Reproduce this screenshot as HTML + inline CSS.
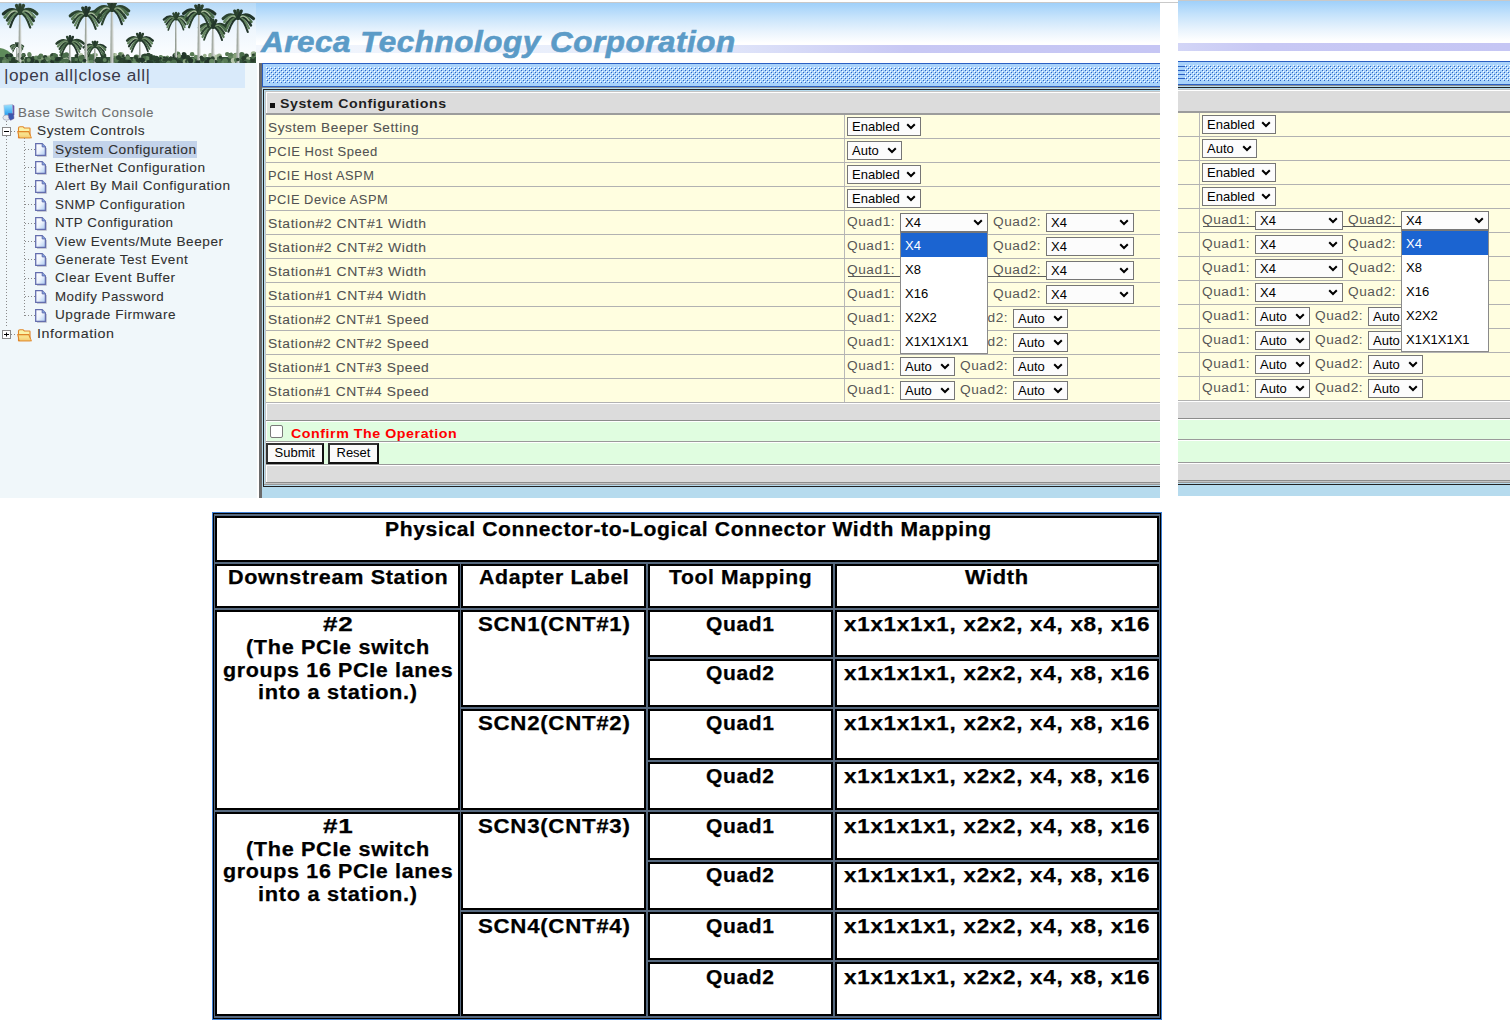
<!DOCTYPE html><html><head><meta charset="utf-8"><style>html,body{margin:0;padding:0;background:#fff}body{width:1510px;height:1029px;position:relative;overflow:hidden;font-family:"Liberation Sans",sans-serif}.r{position:absolute}.t{position:absolute;white-space:pre;font-family:"Liberation Sans",sans-serif}</style></head><body><div class="r" style="left:0;top:0;width:1160px;height:498px;overflow:hidden"><div class="r" style="left:0px;top:2px;width:1178px;height:1px;background:#c9c9c9;"></div><div class="r" style="left:0px;top:3px;width:1160px;height:60px;background:linear-gradient(#9fd0fa 0px,#c6e3fb 14px,#e8f3fd 28px,#ffffff 40px);"></div><div class="r" style="left:256px;top:45px;width:904px;height:8px;background:linear-gradient(90deg,#f3f7fd 0px,#e4eafa 440px,#c8c8f4 650px,#c6c6f4 904px);"></div><div class="r" style="left:0px;top:53px;width:256px;height:0px;background:#fff;"></div><svg class="r" style="left:0;top:3px" width="256" height="60" viewBox="0 3 256 60"><clipPath id="pc"><rect x="0" y="3" width="256" height="60"/></clipPath><g clip-path="url(#pc)"><defs><linearGradient id="sky" x1="0" y1="0" x2="0" y2="1"><stop offset="0" stop-color="#b4d9f8"/><stop offset="0.45" stop-color="#eef6fd"/><stop offset="1" stop-color="#ffffff"/></linearGradient></defs><rect x="0" y="3" width="256" height="60" fill="url(#sky)"/><path d="M0 48 Q7 49 13 55 L16 63 L0 63 Z" fill="#5e8b5a"/><rect x="0" y="57" width="256" height="6" fill="#34523a"/><circle cx="115.8" cy="59.0" r="2.9" fill="#587a54"/><circle cx="115.7" cy="61.7" r="1.6" fill="#9ab08e"/><circle cx="131.0" cy="59.7" r="2.6" fill="#2c4430"/><circle cx="114.3" cy="55.3" r="2.2" fill="#86a07a"/><circle cx="177.5" cy="54.4" r="3.0" fill="#587a54"/><circle cx="167.4" cy="59.5" r="1.6" fill="#22352a"/><circle cx="212.9" cy="54.6" r="1.4" fill="#86a07a"/><circle cx="61.9" cy="54.3" r="2.1" fill="#587a54"/><circle cx="151.3" cy="55.8" r="1.7" fill="#2c4430"/><circle cx="127.9" cy="60.0" r="2.1" fill="#2c4430"/><circle cx="104.1" cy="59.0" r="2.9" fill="#2c4430"/><circle cx="181.2" cy="56.8" r="1.7" fill="#2c4430"/><circle cx="7.6" cy="59.1" r="1.5" fill="#2c4430"/><circle cx="216.7" cy="57.5" r="2.9" fill="#b4c4a8"/><circle cx="175.3" cy="55.9" r="2.9" fill="#22352a"/><circle cx="120.3" cy="62.8" r="2.0" fill="#2c4430"/><circle cx="145.0" cy="55.8" r="2.4" fill="#283e2c"/><circle cx="22.3" cy="57.0" r="2.9" fill="#9ab08e"/><circle cx="236.2" cy="55.2" r="2.5" fill="#22352a"/><circle cx="15.3" cy="61.2" r="1.6" fill="#648660"/><circle cx="48.2" cy="58.6" r="3.0" fill="#9ab08e"/><circle cx="33.5" cy="59.8" r="1.5" fill="#4a6c4a"/><circle cx="253.5" cy="54.0" r="2.8" fill="#9ab08e"/><circle cx="151.7" cy="63.0" r="1.3" fill="#283e2c"/><circle cx="100.9" cy="61.7" r="2.4" fill="#2c4430"/><circle cx="10.8" cy="55.3" r="2.1" fill="#22352a"/><circle cx="197.8" cy="57.0" r="1.8" fill="#2c4430"/><circle cx="19.0" cy="55.9" r="2.4" fill="#22352a"/><circle cx="153.9" cy="57.3" r="2.1" fill="#4a6c4a"/><circle cx="123.8" cy="59.2" r="2.8" fill="#283e2c"/><circle cx="160.6" cy="56.8" r="1.7" fill="#4a6c4a"/><circle cx="63.9" cy="55.7" r="2.6" fill="#648660"/><circle cx="50.3" cy="62.6" r="2.8" fill="#4a6c4a"/><circle cx="20.1" cy="54.4" r="1.5" fill="#648660"/><circle cx="246.4" cy="56.1" r="2.5" fill="#2c4430"/><circle cx="107.7" cy="62.1" r="2.1" fill="#648660"/><circle cx="44.9" cy="60.5" r="1.4" fill="#22352a"/><circle cx="122.7" cy="59.9" r="2.3" fill="#2c4430"/><circle cx="71.7" cy="62.3" r="1.6" fill="#22352a"/><circle cx="17.7" cy="57.7" r="1.7" fill="#22352a"/><circle cx="45.1" cy="57.3" r="2.3" fill="#283e2c"/><circle cx="23.6" cy="55.2" r="2.1" fill="#283e2c"/><circle cx="168.2" cy="60.2" r="2.3" fill="#283e2c"/><circle cx="151.0" cy="62.3" r="2.1" fill="#283e2c"/><circle cx="179.4" cy="62.7" r="1.3" fill="#587a54"/><circle cx="19.2" cy="54.6" r="1.8" fill="#283e2c"/><circle cx="255.8" cy="54.7" r="2.2" fill="#648660"/><circle cx="11.4" cy="62.4" r="2.6" fill="#283e2c"/><circle cx="203.1" cy="62.2" r="1.9" fill="#587a54"/><circle cx="121.2" cy="54.7" r="2.8" fill="#9ab08e"/><circle cx="7.7" cy="58.5" r="1.3" fill="#587a54"/><circle cx="97.9" cy="59.2" r="2.3" fill="#2c4430"/><circle cx="23.2" cy="55.0" r="1.7" fill="#4a6c4a"/><circle cx="186.4" cy="57.5" r="2.5" fill="#4a6c4a"/><circle cx="117.2" cy="58.2" r="2.2" fill="#648660"/><circle cx="192.1" cy="54.3" r="2.3" fill="#587a54"/><circle cx="5.7" cy="62.6" r="1.5" fill="#9ab08e"/><circle cx="157.3" cy="62.3" r="1.7" fill="#22352a"/><circle cx="94.2" cy="55.3" r="2.3" fill="#648660"/><circle cx="43.4" cy="62.2" r="2.4" fill="#587a54"/><circle cx="127.6" cy="56.2" r="2.0" fill="#2c4430"/><circle cx="50.8" cy="57.9" r="2.7" fill="#86a07a"/><circle cx="51.3" cy="55.9" r="1.7" fill="#86a07a"/><circle cx="81.0" cy="55.2" r="2.1" fill="#b4c4a8"/><circle cx="229.3" cy="54.4" r="1.4" fill="#2c4430"/><circle cx="210.4" cy="55.0" r="2.1" fill="#86a07a"/><circle cx="54.8" cy="57.7" r="2.4" fill="#587a54"/><circle cx="172.1" cy="60.4" r="2.7" fill="#4a6c4a"/><circle cx="115.8" cy="54.7" r="1.4" fill="#b4c4a8"/><circle cx="155.5" cy="60.1" r="1.8" fill="#283e2c"/><circle cx="79.1" cy="61.1" r="1.3" fill="#283e2c"/><circle cx="103.7" cy="55.7" r="2.6" fill="#2c4430"/><circle cx="60.8" cy="55.3" r="1.4" fill="#587a54"/><circle cx="29.5" cy="55.0" r="2.2" fill="#587a54"/><circle cx="206.7" cy="62.6" r="2.5" fill="#22352a"/><circle cx="210.9" cy="56.3" r="2.5" fill="#9ab08e"/><circle cx="120.9" cy="60.4" r="1.6" fill="#2c4430"/><circle cx="199.3" cy="58.9" r="2.9" fill="#648660"/><circle cx="157.3" cy="60.8" r="2.0" fill="#9ab08e"/><circle cx="179.1" cy="56.0" r="2.0" fill="#86a07a"/><circle cx="184.9" cy="55.2" r="2.1" fill="#587a54"/><circle cx="227.2" cy="54.1" r="2.2" fill="#587a54"/><circle cx="225.1" cy="61.2" r="2.9" fill="#587a54"/><circle cx="83.6" cy="62.8" r="1.5" fill="#b4c4a8"/><circle cx="209.5" cy="59.8" r="2.5" fill="#22352a"/><circle cx="62.0" cy="57.5" r="1.4" fill="#2c4430"/><circle cx="137.5" cy="61.1" r="1.8" fill="#86a07a"/><circle cx="183.9" cy="54.1" r="2.2" fill="#22352a"/><circle cx="112.9" cy="59.0" r="2.6" fill="#587a54"/><circle cx="235.5" cy="56.0" r="2.8" fill="#4a6c4a"/><circle cx="204.8" cy="55.6" r="1.9" fill="#9ab08e"/><circle cx="234.5" cy="58.2" r="3.0" fill="#86a07a"/><circle cx="185.2" cy="61.6" r="2.5" fill="#86a07a"/><circle cx="126.1" cy="62.5" r="1.4" fill="#22352a"/><circle cx="112.5" cy="59.0" r="2.7" fill="#648660"/><circle cx="163.6" cy="58.7" r="2.7" fill="#648660"/><circle cx="65.7" cy="60.0" r="2.9" fill="#b4c4a8"/><circle cx="230.5" cy="55.9" r="2.7" fill="#648660"/><circle cx="134.2" cy="59.2" r="1.6" fill="#648660"/><circle cx="29.3" cy="54.0" r="1.9" fill="#648660"/><circle cx="248.2" cy="58.6" r="2.0" fill="#9ab08e"/><circle cx="253.3" cy="55.1" r="1.5" fill="#283e2c"/><circle cx="16.9" cy="58.8" r="2.0" fill="#9ab08e"/><circle cx="236.4" cy="56.4" r="2.1" fill="#283e2c"/><circle cx="87.0" cy="62.1" r="2.9" fill="#86a07a"/><circle cx="122.0" cy="56.9" r="1.6" fill="#4a6c4a"/><circle cx="7.5" cy="56.3" r="2.5" fill="#22352a"/><circle cx="9.1" cy="55.4" r="1.3" fill="#2c4430"/><circle cx="82.5" cy="57.2" r="2.4" fill="#2c4430"/><circle cx="127.9" cy="59.2" r="2.7" fill="#4a6c4a"/><circle cx="64.1" cy="55.8" r="2.2" fill="#4a6c4a"/><circle cx="6.0" cy="59.7" r="2.7" fill="#4a6c4a"/><circle cx="40.9" cy="55.8" r="2.4" fill="#587a54"/><circle cx="55.9" cy="55.9" r="2.2" fill="#4a6c4a"/><circle cx="219.3" cy="56.1" r="2.6" fill="#9ab08e"/><circle cx="89.0" cy="55.6" r="2.3" fill="#86a07a"/><circle cx="236.2" cy="56.0" r="3.0" fill="#86a07a"/><circle cx="24.8" cy="62.0" r="1.5" fill="#2c4430"/><circle cx="66.4" cy="54.9" r="2.7" fill="#4a6c4a"/><circle cx="139.1" cy="60.3" r="1.6" fill="#587a54"/><circle cx="175.4" cy="54.2" r="1.6" fill="#587a54"/><circle cx="91.5" cy="61.4" r="1.9" fill="#648660"/><circle cx="129.5" cy="60.8" r="2.2" fill="#587a54"/><circle cx="213.2" cy="61.2" r="2.1" fill="#22352a"/><circle cx="9.6" cy="59.0" r="2.2" fill="#4a6c4a"/><circle cx="123.2" cy="55.7" r="1.5" fill="#283e2c"/><circle cx="215.1" cy="62.9" r="2.9" fill="#2c4430"/><circle cx="148.4" cy="55.2" r="2.5" fill="#2c4430"/><circle cx="195.8" cy="56.9" r="2.1" fill="#648660"/><circle cx="90.8" cy="55.9" r="1.9" fill="#587a54"/><circle cx="179.5" cy="61.6" r="1.6" fill="#587a54"/><circle cx="92.0" cy="57.3" r="2.9" fill="#4a6c4a"/><circle cx="42.3" cy="58.6" r="1.3" fill="#86a07a"/><circle cx="21.7" cy="61.6" r="2.8" fill="#86a07a"/><circle cx="161.1" cy="57.6" r="2.3" fill="#648660"/><circle cx="149.7" cy="57.1" r="2.6" fill="#2c4430"/><circle cx="233.3" cy="60.7" r="2.6" fill="#b4c4a8"/><circle cx="239.1" cy="55.2" r="1.9" fill="#648660"/><circle cx="177.9" cy="60.9" r="2.6" fill="#4a6c4a"/><circle cx="52.9" cy="55.7" r="2.7" fill="#2c4430"/><circle cx="120.0" cy="54.1" r="1.9" fill="#587a54"/><circle cx="231.1" cy="54.4" r="1.8" fill="#587a54"/><circle cx="76.5" cy="55.9" r="2.0" fill="#283e2c"/><circle cx="136.5" cy="57.5" r="3.0" fill="#587a54"/><circle cx="54.6" cy="55.1" r="2.0" fill="#4a6c4a"/><circle cx="5.8" cy="59.5" r="2.6" fill="#2c4430"/><circle cx="113.6" cy="58.5" r="2.6" fill="#587a54"/><circle cx="96.2" cy="54.9" r="1.7" fill="#86a07a"/><circle cx="87.3" cy="58.9" r="2.0" fill="#648660"/><circle cx="145.4" cy="63.0" r="2.4" fill="#9ab08e"/><circle cx="165.0" cy="58.9" r="2.4" fill="#22352a"/><circle cx="98.9" cy="62.4" r="2.0" fill="#283e2c"/><circle cx="219.1" cy="58.9" r="2.3" fill="#4a6c4a"/><circle cx="242.0" cy="57.8" r="2.2" fill="#4a6c4a"/><circle cx="80.0" cy="58.8" r="2.1" fill="#2c4430"/><circle cx="143.5" cy="56.6" r="2.5" fill="#2c4430"/><circle cx="6.9" cy="61.0" r="2.3" fill="#587a54"/><circle cx="40.1" cy="60.8" r="2.0" fill="#86a07a"/><circle cx="80.7" cy="57.6" r="2.3" fill="#648660"/><circle cx="241.8" cy="54.7" r="2.8" fill="#4a6c4a"/><circle cx="184.1" cy="56.3" r="2.6" fill="#22352a"/><circle cx="134.0" cy="62.4" r="2.5" fill="#587a54"/><circle cx="37.0" cy="62.6" r="1.7" fill="#648660"/><circle cx="29.5" cy="59.6" r="2.1" fill="#22352a"/><circle cx="220.4" cy="57.2" r="1.6" fill="#283e2c"/><circle cx="113.4" cy="60.0" r="2.1" fill="#2c4430"/><circle cx="163.7" cy="60.1" r="1.9" fill="#648660"/><circle cx="135.9" cy="63.0" r="2.9" fill="#648660"/><circle cx="33.0" cy="58.3" r="2.2" fill="#2c4430"/><circle cx="200.8" cy="59.6" r="1.9" fill="#2c4430"/><path d="M69.2 45 L68.7 63 L71.3 63 L70.8 45 Z" fill="#c9cdc8"/><path d="M69.2 45 L68.7 63 L69.7 63 L69.8 45 Z" fill="#8a948a"/><path d="M70.0 43.0 Q63.0 37.3 56.6 43.6" fill="none" stroke="#283e2c" stroke-width="2.6" stroke-linecap="round"/><path d="M70.0 43.0 Q63.7 38.8 58.0 46.4" fill="none" stroke="#648660" stroke-width="2.4" stroke-linecap="round"/><path d="M70.0 43.0 Q64.5 40.4 59.6 49.0" fill="none" stroke="#2c4430" stroke-width="2.2" stroke-linecap="round"/><path d="M70.0 43.0 Q64.8 41.8 60.3 52.2" fill="none" stroke="#4a6c4a" stroke-width="2.0" stroke-linecap="round"/><path d="M70.0 43.0 Q65.4 43.4 61.5 55.2" fill="none" stroke="#283e2c" stroke-width="1.8" stroke-linecap="round"/><path d="M70.0 43.0 Q64.6 38.8 60.4 45.4" fill="none" stroke="#86a07a" stroke-width="0.9" stroke-linecap="round"/><path d="M70.0 43.0 Q77.2 37.1 83.8 43.7" fill="none" stroke="#283e2c" stroke-width="2.6" stroke-linecap="round"/><path d="M70.0 43.0 Q76.0 39.0 81.4 46.3" fill="none" stroke="#4a6c4a" stroke-width="2.4" stroke-linecap="round"/><path d="M70.0 43.0 Q75.4 40.5 80.2 48.9" fill="none" stroke="#2c4430" stroke-width="2.2" stroke-linecap="round"/><path d="M70.0 43.0 Q75.0 41.9 79.4 51.9" fill="none" stroke="#648660" stroke-width="2.0" stroke-linecap="round"/><path d="M70.0 43.0 Q74.2 43.4 77.8 54.2" fill="none" stroke="#22352a" stroke-width="1.8" stroke-linecap="round"/><path d="M70.0 43.0 Q75.4 38.8 79.6 45.4" fill="none" stroke="#86a07a" stroke-width="0.9" stroke-linecap="round"/><path d="M70.0 43.0 L67.2 37.0" stroke="#2c4430" stroke-width="2.6" stroke-linecap="round"/><path d="M70.0 43.0 L70.0 36.4" stroke="#22352a" stroke-width="2.6" stroke-linecap="round"/><path d="M70.0 43.0 L72.8 37.0" stroke="#22352a" stroke-width="2.6" stroke-linecap="round"/><path d="M94.3 49 L93.8 63 L96.2 63 L95.7 49 Z" fill="#c9cdc8"/><path d="M94.3 49 L93.8 63 L94.8 63 L94.9 49 Z" fill="#8a948a"/><path d="M95.0 47.0 Q89.0 42.1 83.5 47.5" fill="none" stroke="#22352a" stroke-width="2.2" stroke-linecap="round"/><path d="M95.0 47.0 Q89.7 43.5 85.0 49.8" fill="none" stroke="#648660" stroke-width="2.0" stroke-linecap="round"/><path d="M95.0 47.0 Q90.1 44.7 85.7 52.4" fill="none" stroke="#2c4430" stroke-width="1.8" stroke-linecap="round"/><path d="M95.0 47.0 Q90.8 46.1 87.1 54.4" fill="none" stroke="#4a6c4a" stroke-width="1.7" stroke-linecap="round"/><path d="M95.0 47.0 Q91.4 47.3 88.3 56.6" fill="none" stroke="#2c4430" stroke-width="1.5" stroke-linecap="round"/><path d="M95.0 47.0 Q90.5 43.5 87.0 49.0" fill="none" stroke="#86a07a" stroke-width="0.8" stroke-linecap="round"/><path d="M95.0 47.0 Q100.6 42.4 105.6 47.5" fill="none" stroke="#22352a" stroke-width="2.2" stroke-linecap="round"/><path d="M95.0 47.0 Q100.4 43.4 105.3 49.9" fill="none" stroke="#587a54" stroke-width="2.0" stroke-linecap="round"/><path d="M95.0 47.0 Q99.9 44.7 104.2 52.3" fill="none" stroke="#283e2c" stroke-width="1.8" stroke-linecap="round"/><path d="M95.0 47.0 Q99.3 46.0 103.1 54.7" fill="none" stroke="#4a6c4a" stroke-width="1.7" stroke-linecap="round"/><path d="M95.0 47.0 Q98.7 47.3 101.8 56.7" fill="none" stroke="#283e2c" stroke-width="1.5" stroke-linecap="round"/><path d="M95.0 47.0 Q99.5 43.5 103.0 49.0" fill="none" stroke="#b4c4a8" stroke-width="0.8" stroke-linecap="round"/><path d="M95.0 47.0 L92.7 42.0" stroke="#2c4430" stroke-width="2.2" stroke-linecap="round"/><path d="M95.0 47.0 L95.0 41.5" stroke="#22352a" stroke-width="2.2" stroke-linecap="round"/><path d="M95.0 47.0 L97.3 42.0" stroke="#2c4430" stroke-width="2.2" stroke-linecap="round"/><path d="M139.2 42 L138.7 63 L141.3 63 L140.8 42 Z" fill="#c9cdc8"/><path d="M139.2 42 L138.7 63 L139.7 63 L139.8 42 Z" fill="#8a948a"/><path d="M140.0 40.0 Q133.3 34.5 127.2 40.6" fill="none" stroke="#283e2c" stroke-width="2.6" stroke-linecap="round"/><path d="M140.0 40.0 Q133.8 35.9 128.2 43.3" fill="none" stroke="#648660" stroke-width="2.4" stroke-linecap="round"/><path d="M140.0 40.0 Q134.2 37.3 129.0 46.3" fill="none" stroke="#22352a" stroke-width="2.2" stroke-linecap="round"/><path d="M140.0 40.0 Q135.0 38.9 130.6 48.9" fill="none" stroke="#587a54" stroke-width="2.0" stroke-linecap="round"/><path d="M140.0 40.0 Q135.6 40.4 131.7 51.8" fill="none" stroke="#2c4430" stroke-width="1.8" stroke-linecap="round"/><path d="M140.0 40.0 Q134.6 35.8 130.4 42.4" fill="none" stroke="#b4c4a8" stroke-width="0.9" stroke-linecap="round"/><path d="M140.0 40.0 Q146.7 34.6 152.7 40.6" fill="none" stroke="#22352a" stroke-width="2.6" stroke-linecap="round"/><path d="M140.0 40.0 Q146.3 35.9 151.9 43.4" fill="none" stroke="#648660" stroke-width="2.4" stroke-linecap="round"/><path d="M140.0 40.0 Q145.7 37.4 150.7 46.2" fill="none" stroke="#283e2c" stroke-width="2.2" stroke-linecap="round"/><path d="M140.0 40.0 Q145.0 38.9 149.4 48.9" fill="none" stroke="#4a6c4a" stroke-width="2.0" stroke-linecap="round"/><path d="M140.0 40.0 Q144.2 40.4 147.9 51.2" fill="none" stroke="#22352a" stroke-width="1.8" stroke-linecap="round"/><path d="M140.0 40.0 Q145.4 35.8 149.6 42.4" fill="none" stroke="#86a07a" stroke-width="0.9" stroke-linecap="round"/><path d="M140.0 40.0 L137.2 34.0" stroke="#283e2c" stroke-width="2.6" stroke-linecap="round"/><path d="M140.0 40.0 L140.0 33.4" stroke="#22352a" stroke-width="2.6" stroke-linecap="round"/><path d="M140.0 40.0 L142.8 34.0" stroke="#283e2c" stroke-width="2.6" stroke-linecap="round"/><path d="M16.5 48 L16.0 63 L18.0 63 L17.5 48 Z" fill="#c9cdc8"/><path d="M16.5 48 L16.0 63 L17.0 63 L17.1 48 Z" fill="#8a948a"/><path d="M17.0 46.0 Q13.6 43.2 10.5 46.3" fill="none" stroke="#283e2c" stroke-width="1.5" stroke-linecap="round"/><path d="M17.0 46.0 Q13.8 43.9 10.9 47.7" fill="none" stroke="#587a54" stroke-width="1.4" stroke-linecap="round"/><path d="M17.0 46.0 Q14.2 44.7 11.8 49.0" fill="none" stroke="#22352a" stroke-width="1.3" stroke-linecap="round"/><path d="M17.0 46.0 Q14.5 45.4 12.4 50.4" fill="none" stroke="#648660" stroke-width="1.1" stroke-linecap="round"/><path d="M17.0 46.0 Q14.7 46.2 12.8 52.0" fill="none" stroke="#2c4430" stroke-width="1.0" stroke-linecap="round"/><path d="M17.0 46.0 Q14.3 43.9 12.2 47.2" fill="none" stroke="#9ab08e" stroke-width="0.5" stroke-linecap="round"/><path d="M17.0 46.0 Q20.4 43.2 23.5 46.3" fill="none" stroke="#2c4430" stroke-width="1.5" stroke-linecap="round"/><path d="M17.0 46.0 Q20.2 43.9 23.0 47.7" fill="none" stroke="#648660" stroke-width="1.4" stroke-linecap="round"/><path d="M17.0 46.0 Q19.9 44.6 22.6 49.2" fill="none" stroke="#2c4430" stroke-width="1.3" stroke-linecap="round"/><path d="M17.0 46.0 Q19.5 45.4 21.7 50.5" fill="none" stroke="#587a54" stroke-width="1.1" stroke-linecap="round"/><path d="M17.0 46.0 Q19.2 46.2 21.1 51.8" fill="none" stroke="#22352a" stroke-width="1.0" stroke-linecap="round"/><path d="M17.0 46.0 Q19.7 43.9 21.8 47.2" fill="none" stroke="#b4c4a8" stroke-width="0.5" stroke-linecap="round"/><path d="M17.0 46.0 L15.6 43.0" stroke="#283e2c" stroke-width="1.5" stroke-linecap="round"/><path d="M17.0 46.0 L17.0 42.7" stroke="#283e2c" stroke-width="1.5" stroke-linecap="round"/><path d="M17.0 46.0 L18.4 43.0" stroke="#22352a" stroke-width="1.5" stroke-linecap="round"/><path d="M212.0 29 L211.5 63 L214.5 63 L214.0 29 Z" fill="#c9cdc8"/><path d="M212.0 29 L211.5 63 L212.5 63 L212.6 29 Z" fill="#8a948a"/><path d="M213.0 27.0 Q205.8 21.1 199.2 27.7" fill="none" stroke="#2c4430" stroke-width="2.9" stroke-linecap="round"/><path d="M213.0 27.0 Q206.5 22.7 200.6 30.5" fill="none" stroke="#648660" stroke-width="2.6" stroke-linecap="round"/><path d="M213.0 27.0 Q206.9 24.2 201.5 33.6" fill="none" stroke="#2c4430" stroke-width="2.4" stroke-linecap="round"/><path d="M213.0 27.0 Q207.4 25.7 202.5 37.0" fill="none" stroke="#648660" stroke-width="2.2" stroke-linecap="round"/><path d="M213.0 27.0 Q208.2 27.4 204.1 39.8" fill="none" stroke="#2c4430" stroke-width="1.9" stroke-linecap="round"/><path d="M213.0 27.0 Q207.2 22.4 202.6 29.6" fill="none" stroke="#86a07a" stroke-width="1.0" stroke-linecap="round"/><path d="M213.0 27.0 Q220.3 21.1 226.9 27.7" fill="none" stroke="#283e2c" stroke-width="2.9" stroke-linecap="round"/><path d="M213.0 27.0 Q219.9 22.5 226.0 30.7" fill="none" stroke="#4a6c4a" stroke-width="2.6" stroke-linecap="round"/><path d="M213.0 27.0 Q218.9 24.2 224.1 33.4" fill="none" stroke="#2c4430" stroke-width="2.4" stroke-linecap="round"/><path d="M213.0 27.0 Q218.7 25.7 223.6 37.0" fill="none" stroke="#587a54" stroke-width="2.2" stroke-linecap="round"/><path d="M213.0 27.0 Q217.9 27.4 222.1 40.1" fill="none" stroke="#22352a" stroke-width="1.9" stroke-linecap="round"/><path d="M213.0 27.0 Q218.8 22.4 223.4 29.6" fill="none" stroke="#86a07a" stroke-width="1.0" stroke-linecap="round"/><path d="M213.0 27.0 L210.0 20.5" stroke="#22352a" stroke-width="2.9" stroke-linecap="round"/><path d="M213.0 27.0 L213.0 19.9" stroke="#283e2c" stroke-width="2.9" stroke-linecap="round"/><path d="M213.0 27.0 L216.0 20.5" stroke="#22352a" stroke-width="2.9" stroke-linecap="round"/><path d="M19.0 15 L18.5 63 L21.5 63 L21.0 15 Z" fill="#c9cdc8"/><path d="M19.0 15 L18.5 63 L19.5 63 L19.6 15 Z" fill="#8a948a"/><path d="M20.0 13.0 Q11.3 5.9 3.4 13.8" fill="none" stroke="#22352a" stroke-width="3.3" stroke-linecap="round"/><path d="M20.0 13.0 Q12.0 7.7 4.8 17.3" fill="none" stroke="#587a54" stroke-width="3.0" stroke-linecap="round"/><path d="M20.0 13.0 Q13.2 9.8 7.2 20.4" fill="none" stroke="#283e2c" stroke-width="2.8" stroke-linecap="round"/><path d="M20.0 13.0 Q13.8 11.6 8.4 24.0" fill="none" stroke="#648660" stroke-width="2.5" stroke-linecap="round"/><path d="M20.0 13.0 Q14.7 13.5 10.2 27.1" fill="none" stroke="#22352a" stroke-width="2.2" stroke-linecap="round"/><path d="M20.0 13.0 Q13.2 7.8 8.0 16.0" fill="none" stroke="#b4c4a8" stroke-width="1.2" stroke-linecap="round"/><path d="M20.0 13.0 Q28.9 5.8 36.9 13.8" fill="none" stroke="#2c4430" stroke-width="3.3" stroke-linecap="round"/><path d="M20.0 13.0 Q27.6 8.0 34.4 17.1" fill="none" stroke="#648660" stroke-width="3.0" stroke-linecap="round"/><path d="M20.0 13.0 Q27.2 9.6 33.6 20.8" fill="none" stroke="#22352a" stroke-width="2.8" stroke-linecap="round"/><path d="M20.0 13.0 Q26.4 11.5 32.1 24.4" fill="none" stroke="#648660" stroke-width="2.5" stroke-linecap="round"/><path d="M20.0 13.0 Q25.5 13.5 30.2 27.5" fill="none" stroke="#283e2c" stroke-width="2.2" stroke-linecap="round"/><path d="M20.0 13.0 Q26.8 7.8 32.0 16.0" fill="none" stroke="#9ab08e" stroke-width="1.2" stroke-linecap="round"/><path d="M20.0 13.0 L16.5 5.5" stroke="#2c4430" stroke-width="3.3" stroke-linecap="round"/><path d="M20.0 13.0 L20.0 4.8" stroke="#283e2c" stroke-width="3.3" stroke-linecap="round"/><path d="M20.0 13.0 L23.5 5.5" stroke="#2c4430" stroke-width="3.3" stroke-linecap="round"/><path d="M85.1 17 L84.6 63 L87.4 63 L86.9 17 Z" fill="#c9cdc8"/><path d="M85.1 17 L84.6 63 L85.6 63 L85.7 17 Z" fill="#8a948a"/><path d="M86.0 15.0 Q77.7 8.2 70.2 15.8" fill="none" stroke="#2c4430" stroke-width="3.1" stroke-linecap="round"/><path d="M86.0 15.0 Q78.8 10.2 72.2 18.9" fill="none" stroke="#587a54" stroke-width="2.8" stroke-linecap="round"/><path d="M86.0 15.0 Q79.3 11.9 73.3 22.3" fill="none" stroke="#2c4430" stroke-width="2.6" stroke-linecap="round"/><path d="M86.0 15.0 Q80.1 13.7 75.0 25.4" fill="none" stroke="#648660" stroke-width="2.3" stroke-linecap="round"/><path d="M86.0 15.0 Q81.1 15.4 76.8 28.1" fill="none" stroke="#283e2c" stroke-width="2.1" stroke-linecap="round"/><path d="M86.0 15.0 Q79.7 10.1 74.8 17.8" fill="none" stroke="#9ab08e" stroke-width="1.1" stroke-linecap="round"/><path d="M86.0 15.0 Q94.0 8.4 101.3 15.7" fill="none" stroke="#283e2c" stroke-width="3.1" stroke-linecap="round"/><path d="M86.0 15.0 Q93.2 10.2 99.8 18.9" fill="none" stroke="#4a6c4a" stroke-width="2.8" stroke-linecap="round"/><path d="M86.0 15.0 Q92.8 11.8 98.9 22.4" fill="none" stroke="#22352a" stroke-width="2.6" stroke-linecap="round"/><path d="M86.0 15.0 Q92.1 13.6 97.4 25.8" fill="none" stroke="#648660" stroke-width="2.3" stroke-linecap="round"/><path d="M86.0 15.0 Q91.2 15.4 95.7 28.9" fill="none" stroke="#283e2c" stroke-width="2.1" stroke-linecap="round"/><path d="M86.0 15.0 Q92.3 10.1 97.2 17.8" fill="none" stroke="#b4c4a8" stroke-width="1.1" stroke-linecap="round"/><path d="M86.0 15.0 L82.7 8.0" stroke="#283e2c" stroke-width="3.1" stroke-linecap="round"/><path d="M86.0 15.0 L86.0 7.3" stroke="#22352a" stroke-width="3.1" stroke-linecap="round"/><path d="M86.0 15.0 L89.3 8.0" stroke="#22352a" stroke-width="3.1" stroke-linecap="round"/><path d="M110.9 12 L110.4 63 L113.6 63 L113.1 12 Z" fill="#c9cdc8"/><path d="M110.9 12 L110.4 63 L111.4 63 L111.5 12 Z" fill="#8a948a"/><path d="M112.0 10.0 Q103.4 3.0 95.6 10.8" fill="none" stroke="#2c4430" stroke-width="3.3" stroke-linecap="round"/><path d="M112.0 10.0 Q103.8 4.6 96.4 14.4" fill="none" stroke="#4a6c4a" stroke-width="3.0" stroke-linecap="round"/><path d="M112.0 10.0 Q104.7 6.6 98.3 17.9" fill="none" stroke="#283e2c" stroke-width="2.8" stroke-linecap="round"/><path d="M112.0 10.0 Q105.8 8.6 100.3 21.0" fill="none" stroke="#4a6c4a" stroke-width="2.5" stroke-linecap="round"/><path d="M112.0 10.0 Q106.6 10.5 101.9 24.4" fill="none" stroke="#2c4430" stroke-width="2.2" stroke-linecap="round"/><path d="M112.0 10.0 Q105.2 4.8 100.0 13.0" fill="none" stroke="#b4c4a8" stroke-width="1.2" stroke-linecap="round"/><path d="M112.0 10.0 Q120.7 2.9 128.6 10.8" fill="none" stroke="#2c4430" stroke-width="3.3" stroke-linecap="round"/><path d="M112.0 10.0 Q120.2 4.6 127.6 14.4" fill="none" stroke="#4a6c4a" stroke-width="3.0" stroke-linecap="round"/><path d="M112.0 10.0 Q119.1 6.7 125.4 17.7" fill="none" stroke="#283e2c" stroke-width="2.8" stroke-linecap="round"/><path d="M112.0 10.0 Q118.1 8.6 123.4 20.8" fill="none" stroke="#648660" stroke-width="2.5" stroke-linecap="round"/><path d="M112.0 10.0 Q117.3 10.5 121.9 24.2" fill="none" stroke="#22352a" stroke-width="2.2" stroke-linecap="round"/><path d="M112.0 10.0 Q118.8 4.8 124.0 13.0" fill="none" stroke="#9ab08e" stroke-width="1.2" stroke-linecap="round"/><path d="M112.0 10.0 L108.5 2.5" stroke="#2c4430" stroke-width="3.3" stroke-linecap="round"/><path d="M112.0 10.0 L112.0 1.8" stroke="#22352a" stroke-width="3.3" stroke-linecap="round"/><path d="M112.0 10.0 L115.5 2.5" stroke="#283e2c" stroke-width="3.3" stroke-linecap="round"/><path d="M175.3 21 L174.8 63 L177.2 63 L176.7 21 Z" fill="#c9cdc8"/><path d="M175.3 21 L174.8 63 L175.8 63 L175.9 21 Z" fill="#8a948a"/><path d="M176.0 19.0 Q169.7 13.8 163.9 19.6" fill="none" stroke="#22352a" stroke-width="2.4" stroke-linecap="round"/><path d="M176.0 19.0 Q170.3 15.3 165.2 22.1" fill="none" stroke="#4a6c4a" stroke-width="2.2" stroke-linecap="round"/><path d="M176.0 19.0 Q171.0 16.6 166.5 24.5" fill="none" stroke="#22352a" stroke-width="2.0" stroke-linecap="round"/><path d="M176.0 19.0 Q171.3 18.0 167.3 27.3" fill="none" stroke="#648660" stroke-width="1.8" stroke-linecap="round"/><path d="M176.0 19.0 Q171.9 19.4 168.3 30.0" fill="none" stroke="#283e2c" stroke-width="1.6" stroke-linecap="round"/><path d="M176.0 19.0 Q171.1 15.2 167.2 21.2" fill="none" stroke="#86a07a" stroke-width="0.8" stroke-linecap="round"/><path d="M176.0 19.0 Q182.2 13.9 187.8 19.6" fill="none" stroke="#22352a" stroke-width="2.4" stroke-linecap="round"/><path d="M176.0 19.0 Q182.0 15.0 187.4 22.2" fill="none" stroke="#587a54" stroke-width="2.2" stroke-linecap="round"/><path d="M176.0 19.0 Q181.0 16.7 185.5 24.5" fill="none" stroke="#2c4430" stroke-width="2.0" stroke-linecap="round"/><path d="M176.0 19.0 Q180.7 17.9 184.8 27.3" fill="none" stroke="#648660" stroke-width="1.8" stroke-linecap="round"/><path d="M176.0 19.0 Q180.0 19.3 183.5 29.7" fill="none" stroke="#2c4430" stroke-width="1.6" stroke-linecap="round"/><path d="M176.0 19.0 Q180.9 15.2 184.8 21.2" fill="none" stroke="#b4c4a8" stroke-width="0.8" stroke-linecap="round"/><path d="M176.0 19.0 L173.4 13.5" stroke="#2c4430" stroke-width="2.4" stroke-linecap="round"/><path d="M176.0 19.0 L176.0 12.9" stroke="#2c4430" stroke-width="2.4" stroke-linecap="round"/><path d="M176.0 19.0 L178.6 13.5" stroke="#283e2c" stroke-width="2.4" stroke-linecap="round"/><path d="M198.0 15 L197.5 63 L200.5 63 L200.0 15 Z" fill="#c9cdc8"/><path d="M198.0 15 L197.5 63 L198.5 63 L198.6 15 Z" fill="#8a948a"/><path d="M199.0 13.0 Q190.9 6.4 183.5 13.7" fill="none" stroke="#22352a" stroke-width="3.1" stroke-linecap="round"/><path d="M199.0 13.0 Q191.7 8.2 185.1 17.0" fill="none" stroke="#4a6c4a" stroke-width="2.8" stroke-linecap="round"/><path d="M199.0 13.0 Q192.4 9.9 186.6 20.1" fill="none" stroke="#22352a" stroke-width="2.6" stroke-linecap="round"/><path d="M199.0 13.0 Q192.9 11.6 187.5 23.9" fill="none" stroke="#587a54" stroke-width="2.3" stroke-linecap="round"/><path d="M199.0 13.0 Q193.6 13.5 189.0 27.3" fill="none" stroke="#283e2c" stroke-width="2.1" stroke-linecap="round"/><path d="M199.0 13.0 Q192.7 8.1 187.8 15.8" fill="none" stroke="#b4c4a8" stroke-width="1.1" stroke-linecap="round"/><path d="M199.0 13.0 Q207.3 6.2 214.9 13.8" fill="none" stroke="#22352a" stroke-width="3.1" stroke-linecap="round"/><path d="M199.0 13.0 Q206.5 8.1 213.2 17.0" fill="none" stroke="#4a6c4a" stroke-width="2.8" stroke-linecap="round"/><path d="M199.0 13.0 Q205.9 9.8 212.0 20.5" fill="none" stroke="#2c4430" stroke-width="2.6" stroke-linecap="round"/><path d="M199.0 13.0 Q205.1 11.6 210.5 23.8" fill="none" stroke="#587a54" stroke-width="2.3" stroke-linecap="round"/><path d="M199.0 13.0 Q204.3 13.5 208.8 27.1" fill="none" stroke="#283e2c" stroke-width="2.1" stroke-linecap="round"/><path d="M199.0 13.0 Q205.3 8.1 210.2 15.8" fill="none" stroke="#b4c4a8" stroke-width="1.1" stroke-linecap="round"/><path d="M199.0 13.0 L195.7 6.0" stroke="#283e2c" stroke-width="3.1" stroke-linecap="round"/><path d="M199.0 13.0 L199.0 5.3" stroke="#22352a" stroke-width="3.1" stroke-linecap="round"/><path d="M199.0 13.0 L202.3 6.0" stroke="#2c4430" stroke-width="3.1" stroke-linecap="round"/><path d="M237.0 20 L236.5 63 L239.5 63 L239.0 20 Z" fill="#c9cdc8"/><path d="M237.0 20 L236.5 63 L237.5 63 L237.6 20 Z" fill="#8a948a"/><path d="M238.0 18.0 Q230.2 11.6 223.1 18.7" fill="none" stroke="#2c4430" stroke-width="3.1" stroke-linecap="round"/><path d="M238.0 18.0 Q230.9 13.3 224.5 21.8" fill="none" stroke="#648660" stroke-width="2.8" stroke-linecap="round"/><path d="M238.0 18.0 Q231.6 15.0 225.9 24.9" fill="none" stroke="#283e2c" stroke-width="2.6" stroke-linecap="round"/><path d="M238.0 18.0 Q231.8 16.6 226.5 28.9" fill="none" stroke="#587a54" stroke-width="2.3" stroke-linecap="round"/><path d="M238.0 18.0 Q232.8 18.4 228.4 31.7" fill="none" stroke="#22352a" stroke-width="2.1" stroke-linecap="round"/><path d="M238.0 18.0 Q231.7 13.1 226.8 20.8" fill="none" stroke="#9ab08e" stroke-width="1.1" stroke-linecap="round"/><path d="M238.0 18.0 Q246.1 11.3 253.5 18.7" fill="none" stroke="#22352a" stroke-width="3.1" stroke-linecap="round"/><path d="M238.0 18.0 Q245.0 13.4 251.3 21.8" fill="none" stroke="#4a6c4a" stroke-width="2.8" stroke-linecap="round"/><path d="M238.0 18.0 Q244.8 14.8 250.9 25.4" fill="none" stroke="#22352a" stroke-width="2.6" stroke-linecap="round"/><path d="M238.0 18.0 Q243.8 16.7 248.9 28.3" fill="none" stroke="#648660" stroke-width="2.3" stroke-linecap="round"/><path d="M238.0 18.0 Q243.3 18.5 247.8 32.0" fill="none" stroke="#22352a" stroke-width="2.1" stroke-linecap="round"/><path d="M238.0 18.0 Q244.3 13.1 249.2 20.8" fill="none" stroke="#b4c4a8" stroke-width="1.1" stroke-linecap="round"/><path d="M238.0 18.0 L234.7 11.0" stroke="#283e2c" stroke-width="3.1" stroke-linecap="round"/><path d="M238.0 18.0 L238.0 10.3" stroke="#2c4430" stroke-width="3.1" stroke-linecap="round"/><path d="M238.0 18.0 L241.3 11.0" stroke="#22352a" stroke-width="3.1" stroke-linecap="round"/><circle cx="244.6" cy="61.1" r="2.4" fill="#2c4430"/><circle cx="4.9" cy="58.3" r="1.5" fill="#587a54"/><circle cx="23.3" cy="62.8" r="1.5" fill="#648660"/><circle cx="105.8" cy="60.5" r="2.5" fill="#2c4430"/><circle cx="80.9" cy="59.8" r="2.0" fill="#587a54"/><circle cx="170.8" cy="57.5" r="1.3" fill="#283e2c"/><circle cx="27.1" cy="59.8" r="1.8" fill="#2c4430"/><circle cx="167.4" cy="57.1" r="1.7" fill="#648660"/><circle cx="121.7" cy="59.1" r="1.4" fill="#22352a"/><circle cx="219.2" cy="62.9" r="2.2" fill="#4a6c4a"/><circle cx="38.9" cy="61.4" r="2.5" fill="#648660"/><circle cx="76.3" cy="59.4" r="1.7" fill="#587a54"/><circle cx="22.3" cy="58.3" r="1.7" fill="#2c4430"/><circle cx="84.3" cy="63.6" r="2.0" fill="#648660"/><circle cx="163.9" cy="60.1" r="1.7" fill="#2c4430"/><circle cx="36.1" cy="57.7" r="2.1" fill="#648660"/><circle cx="45.9" cy="58.4" r="1.3" fill="#587a54"/><circle cx="151.7" cy="57.6" r="1.5" fill="#283e2c"/><circle cx="252.8" cy="60.0" r="2.3" fill="#283e2c"/><circle cx="235.7" cy="60.0" r="1.9" fill="#587a54"/><circle cx="52.6" cy="58.0" r="2.2" fill="#587a54"/><circle cx="84.8" cy="59.9" r="1.2" fill="#4a6c4a"/><circle cx="157.0" cy="59.2" r="2.3" fill="#22352a"/><circle cx="169.0" cy="61.3" r="1.2" fill="#283e2c"/><circle cx="48.3" cy="59.1" r="1.8" fill="#648660"/><circle cx="96.7" cy="60.6" r="2.3" fill="#2c4430"/><circle cx="156.5" cy="58.1" r="2.3" fill="#2c4430"/><circle cx="140.4" cy="59.5" r="1.9" fill="#283e2c"/><circle cx="147.0" cy="58.4" r="2.5" fill="#648660"/><circle cx="180.9" cy="63.6" r="2.0" fill="#22352a"/><circle cx="160.5" cy="58.4" r="1.3" fill="#22352a"/><circle cx="122.3" cy="59.9" r="1.7" fill="#2c4430"/><circle cx="237.8" cy="59.5" r="1.8" fill="#2c4430"/><circle cx="115.8" cy="62.1" r="1.5" fill="#4a6c4a"/><circle cx="139.1" cy="60.9" r="2.0" fill="#2c4430"/><circle cx="43.1" cy="62.2" r="2.5" fill="#283e2c"/><circle cx="154.0" cy="57.9" r="2.4" fill="#2c4430"/><circle cx="175.4" cy="59.5" r="2.3" fill="#283e2c"/><circle cx="212.7" cy="58.3" r="2.0" fill="#2c4430"/><circle cx="116.3" cy="59.8" r="2.3" fill="#587a54"/><circle cx="35.4" cy="62.3" r="2.4" fill="#4a6c4a"/><circle cx="157.5" cy="61.5" r="2.3" fill="#283e2c"/><circle cx="51.1" cy="60.3" r="1.4" fill="#4a6c4a"/><circle cx="30.3" cy="59.8" r="1.7" fill="#283e2c"/><circle cx="67.5" cy="61.0" r="1.7" fill="#587a54"/><circle cx="200.7" cy="62.1" r="2.3" fill="#4a6c4a"/><circle cx="245.6" cy="61.2" r="1.9" fill="#4a6c4a"/><circle cx="229.6" cy="63.4" r="2.0" fill="#4a6c4a"/><circle cx="192.4" cy="60.4" r="2.6" fill="#648660"/><circle cx="104.7" cy="60.0" r="2.0" fill="#648660"/><circle cx="84.6" cy="60.6" r="1.8" fill="#22352a"/><circle cx="82.1" cy="57.4" r="2.2" fill="#4a6c4a"/><circle cx="187.4" cy="61.2" r="2.3" fill="#2c4430"/><circle cx="225.9" cy="63.1" r="1.5" fill="#587a54"/><circle cx="62.0" cy="63.1" r="2.6" fill="#587a54"/><circle cx="177.9" cy="60.7" r="1.5" fill="#2c4430"/><circle cx="168.2" cy="63.6" r="2.4" fill="#648660"/><circle cx="247.4" cy="61.7" r="2.4" fill="#4a6c4a"/><circle cx="144.4" cy="58.1" r="2.1" fill="#4a6c4a"/><circle cx="145.1" cy="63.3" r="1.3" fill="#283e2c"/><circle cx="31.7" cy="60.8" r="2.5" fill="#22352a"/><circle cx="75.8" cy="62.1" r="1.2" fill="#283e2c"/><circle cx="16.0" cy="63.3" r="2.3" fill="#4a6c4a"/><circle cx="36.2" cy="61.8" r="1.5" fill="#2c4430"/><circle cx="8.0" cy="63.3" r="1.6" fill="#587a54"/><circle cx="36.7" cy="62.4" r="2.3" fill="#22352a"/><circle cx="51.9" cy="63.0" r="2.2" fill="#22352a"/><circle cx="50.0" cy="62.9" r="1.7" fill="#587a54"/><circle cx="4.1" cy="61.4" r="2.2" fill="#648660"/><circle cx="51.7" cy="61.4" r="1.5" fill="#22352a"/><circle cx="166.4" cy="59.1" r="2.3" fill="#2c4430"/><circle cx="222.6" cy="62.0" r="1.4" fill="#648660"/><circle cx="245.0" cy="62.5" r="1.8" fill="#283e2c"/><circle cx="57.1" cy="59.2" r="2.2" fill="#22352a"/><circle cx="68.9" cy="62.0" r="1.9" fill="#2c4430"/><circle cx="202.4" cy="59.6" r="2.1" fill="#2c4430"/><circle cx="151.0" cy="58.6" r="1.6" fill="#283e2c"/><circle cx="170.8" cy="58.9" r="2.1" fill="#2c4430"/><circle cx="118.5" cy="57.5" r="2.5" fill="#2c4430"/><circle cx="135.9" cy="57.3" r="2.0" fill="#2c4430"/><circle cx="137.5" cy="60.0" r="2.0" fill="#283e2c"/><circle cx="73.0" cy="62.3" r="1.5" fill="#2c4430"/><circle cx="188.0" cy="57.2" r="2.3" fill="#283e2c"/><circle cx="252.9" cy="57.2" r="1.8" fill="#4a6c4a"/><circle cx="98.5" cy="63.5" r="1.9" fill="#283e2c"/><circle cx="16.4" cy="62.4" r="2.5" fill="#283e2c"/><circle cx="168.5" cy="62.5" r="1.9" fill="#648660"/><circle cx="211.7" cy="61.4" r="2.6" fill="#648660"/><circle cx="243.6" cy="58.2" r="2.3" fill="#283e2c"/><circle cx="28.7" cy="60.0" r="2.1" fill="#648660"/><circle cx="197.9" cy="62.5" r="2.3" fill="#22352a"/><circle cx="66.5" cy="60.8" r="2.4" fill="#4a6c4a"/><circle cx="127.7" cy="57.2" r="2.0" fill="#648660"/><circle cx="13.4" cy="60.1" r="2.4" fill="#283e2c"/><circle cx="38.9" cy="57.1" r="1.9" fill="#4a6c4a"/><circle cx="129.0" cy="62.1" r="2.4" fill="#22352a"/><circle cx="18.6" cy="63.4" r="2.0" fill="#648660"/><circle cx="148.3" cy="62.1" r="2.1" fill="#22352a"/><circle cx="79.6" cy="57.3" r="1.6" fill="#4a6c4a"/><circle cx="189.0" cy="62.5" r="2.3" fill="#587a54"/><circle cx="22.7" cy="62.7" r="1.4" fill="#2c4430"/><circle cx="63.5" cy="60.5" r="2.1" fill="#4a6c4a"/><circle cx="201.4" cy="57.4" r="1.8" fill="#283e2c"/><circle cx="178.9" cy="61.9" r="2.5" fill="#283e2c"/><circle cx="125.3" cy="62.3" r="2.6" fill="#283e2c"/><circle cx="190.6" cy="60.7" r="2.6" fill="#22352a"/><circle cx="61.6" cy="63.2" r="1.4" fill="#4a6c4a"/><circle cx="142.4" cy="60.3" r="2.5" fill="#22352a"/><circle cx="174.0" cy="62.0" r="2.6" fill="#4a6c4a"/><circle cx="58.8" cy="58.8" r="2.0" fill="#22352a"/></g></svg><div class="t" style="left:261.00px;top:28.35px;font-size:29px;line-height:29px;font-weight:700;font-style:italic;color:#5b9bc7;letter-spacing:0.50px;transform:scaleX(1.0828);transform-origin:0 0;-webkit-text-stroke:0.6px #5b9bc7;">Areca Technology Corporation</div><div class="r" style="left:0px;top:63px;width:259px;height:435px;background:#f0f7fa;"></div><div class="r" style="left:0px;top:63px;width:245px;height:25px;background:#d9eafa;"></div><div class="r" style="left:257px;top:63px;width:2px;height:435px;background:#ffffff;"></div><div class="t" style="left:4.00px;top:67.90px;font-size:16px;line-height:16px;font-weight:400;font-style:normal;color:#3a3a4a;letter-spacing:0.50px;transform:scaleX(1.0754);transform-origin:0 0;">|open all|close all|</div><div class="t" style="left:17.70px;top:105.85px;font-size:13px;line-height:13px;font-weight:400;font-style:normal;color:#6e6e6e;letter-spacing:0.50px;transform:scaleX(1.0279);transform-origin:0 0;-webkit-text-stroke:0.08px #6e6e6e;">Base Switch Console</div><div class="t" style="left:36.70px;top:124.25px;font-size:13px;line-height:13px;font-weight:400;font-style:normal;color:#303030;letter-spacing:0.50px;transform:scaleX(1.0506);transform-origin:0 0;-webkit-text-stroke:0.08px #303030;">System Controls</div><div class="r" style="left:53px;top:141px;width:144px;height:17px;background:#c3d3ea;"></div><svg class="r" style="left:2px;top:104px" width="13" height="17" viewBox="0 0 13 17"><defs><linearGradient id="scr" x1="0" y1="0" x2="0" y2="1"><stop offset="0" stop-color="#9ae2ff"/><stop offset="1" stop-color="#1e9af0"/></linearGradient></defs><path d="M1.8 1.2 L10.5 0.5 L10.8 11 L2.5 11.8 Z" fill="url(#scr)" stroke="#b8c4d8" stroke-width="0.6"/><path d="M10.5 0.5 L12.3 1.8 L12.3 11 L10.8 11 Z" fill="#6a5aa8"/><ellipse cx="4.5" cy="13.6" rx="3.6" ry="2.6" fill="#e6e8ee" stroke="#9aa0b4" stroke-width="0.7"/><path d="M6.5 9.5 L11.5 9.8 L12 14.5 L8.5 16.3 L6.8 14 Z" fill="#3a58b0" stroke="#5a4a90" stroke-width="0.5"/></svg><div class="r" style="left:6px;top:121px;width:1px;height:207px;background:repeating-linear-gradient(#8a8a8a 0 1px,transparent 1px 3px)"></div><svg class="r" style="left:2px;top:127px" width="9" height="9" viewBox="0 0 9 9"><rect x="0.5" y="0.5" width="8" height="8" fill="#fff" stroke="#8a8a8a" stroke-width="1"/><path d="M2 4.5 H7" stroke="#000" stroke-width="1"/></svg><div class="r" style="left:11px;top:131px;width:6px;height:1px;background:repeating-linear-gradient(90deg,#8a8a8a 0 1px,transparent 1px 3px)"></div><svg class="r" style="left:17px;top:126px" width="16" height="13" viewBox="0 0 16 13"><path d="M1.5 2 Q1.5 0.7 3 0.7 H6 L7.3 2 H12.5 Q13 2 13 2.5 V11.8 H1.5 Z" fill="#faf3a8" stroke="#e0862a" stroke-width="1.1"/><path d="M0.8 5.6 H11.8 L14.2 11.8 H2.2 Z" fill="#f8e08a" stroke="#e0862a" stroke-width="1.1"/><path d="M2.5 9.5 H13 L13.8 11.3 H3 Z" fill="#f6d27a"/></svg><div class="r" style="left:24px;top:138px;width:1px;height:178px;background:repeating-linear-gradient(#8a8a8a 0 1px,transparent 1px 3px)"></div><div class="r" style="left:25px;top:149px;width:10px;height:1px;background:repeating-linear-gradient(90deg,#8a8a8a 0 1px,transparent 1px 3px)"></div><svg class="r" style="left:35px;top:143px" width="13" height="14" viewBox="0 0 13 14"><defs><linearGradient id="pg" x1="0" y1="0" x2="1" y2="1"><stop offset="0" stop-color="#ffffff"/><stop offset="0.5" stop-color="#eef4fd"/><stop offset="1" stop-color="#a9c8f0"/></linearGradient></defs><path d="M2 13.5 H11.5 V5" fill="none" stroke="#c4c8d4" stroke-width="1"/><path d="M0.7 0.7 H7.2 L10.4 3.9 V12.4 H0.7 Z" fill="url(#pg)" stroke="#646eae" stroke-width="1.3"/><path d="M7.2 0.7 V3.9 H10.4" fill="#7fa8e8" stroke="#646eae" stroke-width="1"/></svg><div class="r" style="left:25px;top:167px;width:10px;height:1px;background:repeating-linear-gradient(90deg,#8a8a8a 0 1px,transparent 1px 3px)"></div><svg class="r" style="left:35px;top:161px" width="13" height="14" viewBox="0 0 13 14"><defs><linearGradient id="pg" x1="0" y1="0" x2="1" y2="1"><stop offset="0" stop-color="#ffffff"/><stop offset="0.5" stop-color="#eef4fd"/><stop offset="1" stop-color="#a9c8f0"/></linearGradient></defs><path d="M2 13.5 H11.5 V5" fill="none" stroke="#c4c8d4" stroke-width="1"/><path d="M0.7 0.7 H7.2 L10.4 3.9 V12.4 H0.7 Z" fill="url(#pg)" stroke="#646eae" stroke-width="1.3"/><path d="M7.2 0.7 V3.9 H10.4" fill="#7fa8e8" stroke="#646eae" stroke-width="1"/></svg><div class="r" style="left:25px;top:186px;width:10px;height:1px;background:repeating-linear-gradient(90deg,#8a8a8a 0 1px,transparent 1px 3px)"></div><svg class="r" style="left:35px;top:180px" width="13" height="14" viewBox="0 0 13 14"><defs><linearGradient id="pg" x1="0" y1="0" x2="1" y2="1"><stop offset="0" stop-color="#ffffff"/><stop offset="0.5" stop-color="#eef4fd"/><stop offset="1" stop-color="#a9c8f0"/></linearGradient></defs><path d="M2 13.5 H11.5 V5" fill="none" stroke="#c4c8d4" stroke-width="1"/><path d="M0.7 0.7 H7.2 L10.4 3.9 V12.4 H0.7 Z" fill="url(#pg)" stroke="#646eae" stroke-width="1.3"/><path d="M7.2 0.7 V3.9 H10.4" fill="#7fa8e8" stroke="#646eae" stroke-width="1"/></svg><div class="r" style="left:25px;top:204px;width:10px;height:1px;background:repeating-linear-gradient(90deg,#8a8a8a 0 1px,transparent 1px 3px)"></div><svg class="r" style="left:35px;top:198px" width="13" height="14" viewBox="0 0 13 14"><defs><linearGradient id="pg" x1="0" y1="0" x2="1" y2="1"><stop offset="0" stop-color="#ffffff"/><stop offset="0.5" stop-color="#eef4fd"/><stop offset="1" stop-color="#a9c8f0"/></linearGradient></defs><path d="M2 13.5 H11.5 V5" fill="none" stroke="#c4c8d4" stroke-width="1"/><path d="M0.7 0.7 H7.2 L10.4 3.9 V12.4 H0.7 Z" fill="url(#pg)" stroke="#646eae" stroke-width="1.3"/><path d="M7.2 0.7 V3.9 H10.4" fill="#7fa8e8" stroke="#646eae" stroke-width="1"/></svg><div class="r" style="left:25px;top:223px;width:10px;height:1px;background:repeating-linear-gradient(90deg,#8a8a8a 0 1px,transparent 1px 3px)"></div><svg class="r" style="left:35px;top:217px" width="13" height="14" viewBox="0 0 13 14"><defs><linearGradient id="pg" x1="0" y1="0" x2="1" y2="1"><stop offset="0" stop-color="#ffffff"/><stop offset="0.5" stop-color="#eef4fd"/><stop offset="1" stop-color="#a9c8f0"/></linearGradient></defs><path d="M2 13.5 H11.5 V5" fill="none" stroke="#c4c8d4" stroke-width="1"/><path d="M0.7 0.7 H7.2 L10.4 3.9 V12.4 H0.7 Z" fill="url(#pg)" stroke="#646eae" stroke-width="1.3"/><path d="M7.2 0.7 V3.9 H10.4" fill="#7fa8e8" stroke="#646eae" stroke-width="1"/></svg><div class="r" style="left:25px;top:241px;width:10px;height:1px;background:repeating-linear-gradient(90deg,#8a8a8a 0 1px,transparent 1px 3px)"></div><svg class="r" style="left:35px;top:235px" width="13" height="14" viewBox="0 0 13 14"><defs><linearGradient id="pg" x1="0" y1="0" x2="1" y2="1"><stop offset="0" stop-color="#ffffff"/><stop offset="0.5" stop-color="#eef4fd"/><stop offset="1" stop-color="#a9c8f0"/></linearGradient></defs><path d="M2 13.5 H11.5 V5" fill="none" stroke="#c4c8d4" stroke-width="1"/><path d="M0.7 0.7 H7.2 L10.4 3.9 V12.4 H0.7 Z" fill="url(#pg)" stroke="#646eae" stroke-width="1.3"/><path d="M7.2 0.7 V3.9 H10.4" fill="#7fa8e8" stroke="#646eae" stroke-width="1"/></svg><div class="r" style="left:25px;top:259px;width:10px;height:1px;background:repeating-linear-gradient(90deg,#8a8a8a 0 1px,transparent 1px 3px)"></div><svg class="r" style="left:35px;top:253px" width="13" height="14" viewBox="0 0 13 14"><defs><linearGradient id="pg" x1="0" y1="0" x2="1" y2="1"><stop offset="0" stop-color="#ffffff"/><stop offset="0.5" stop-color="#eef4fd"/><stop offset="1" stop-color="#a9c8f0"/></linearGradient></defs><path d="M2 13.5 H11.5 V5" fill="none" stroke="#c4c8d4" stroke-width="1"/><path d="M0.7 0.7 H7.2 L10.4 3.9 V12.4 H0.7 Z" fill="url(#pg)" stroke="#646eae" stroke-width="1.3"/><path d="M7.2 0.7 V3.9 H10.4" fill="#7fa8e8" stroke="#646eae" stroke-width="1"/></svg><div class="r" style="left:25px;top:278px;width:10px;height:1px;background:repeating-linear-gradient(90deg,#8a8a8a 0 1px,transparent 1px 3px)"></div><svg class="r" style="left:35px;top:272px" width="13" height="14" viewBox="0 0 13 14"><defs><linearGradient id="pg" x1="0" y1="0" x2="1" y2="1"><stop offset="0" stop-color="#ffffff"/><stop offset="0.5" stop-color="#eef4fd"/><stop offset="1" stop-color="#a9c8f0"/></linearGradient></defs><path d="M2 13.5 H11.5 V5" fill="none" stroke="#c4c8d4" stroke-width="1"/><path d="M0.7 0.7 H7.2 L10.4 3.9 V12.4 H0.7 Z" fill="url(#pg)" stroke="#646eae" stroke-width="1.3"/><path d="M7.2 0.7 V3.9 H10.4" fill="#7fa8e8" stroke="#646eae" stroke-width="1"/></svg><div class="r" style="left:25px;top:296px;width:10px;height:1px;background:repeating-linear-gradient(90deg,#8a8a8a 0 1px,transparent 1px 3px)"></div><svg class="r" style="left:35px;top:290px" width="13" height="14" viewBox="0 0 13 14"><defs><linearGradient id="pg" x1="0" y1="0" x2="1" y2="1"><stop offset="0" stop-color="#ffffff"/><stop offset="0.5" stop-color="#eef4fd"/><stop offset="1" stop-color="#a9c8f0"/></linearGradient></defs><path d="M2 13.5 H11.5 V5" fill="none" stroke="#c4c8d4" stroke-width="1"/><path d="M0.7 0.7 H7.2 L10.4 3.9 V12.4 H0.7 Z" fill="url(#pg)" stroke="#646eae" stroke-width="1.3"/><path d="M7.2 0.7 V3.9 H10.4" fill="#7fa8e8" stroke="#646eae" stroke-width="1"/></svg><div class="r" style="left:25px;top:315px;width:10px;height:1px;background:repeating-linear-gradient(90deg,#8a8a8a 0 1px,transparent 1px 3px)"></div><svg class="r" style="left:35px;top:309px" width="13" height="14" viewBox="0 0 13 14"><defs><linearGradient id="pg" x1="0" y1="0" x2="1" y2="1"><stop offset="0" stop-color="#ffffff"/><stop offset="0.5" stop-color="#eef4fd"/><stop offset="1" stop-color="#a9c8f0"/></linearGradient></defs><path d="M2 13.5 H11.5 V5" fill="none" stroke="#c4c8d4" stroke-width="1"/><path d="M0.7 0.7 H7.2 L10.4 3.9 V12.4 H0.7 Z" fill="url(#pg)" stroke="#646eae" stroke-width="1.3"/><path d="M7.2 0.7 V3.9 H10.4" fill="#7fa8e8" stroke="#646eae" stroke-width="1"/></svg><svg class="r" style="left:2px;top:330px" width="9" height="9" viewBox="0 0 9 9"><rect x="0.5" y="0.5" width="8" height="8" fill="#fff" stroke="#8a8a8a" stroke-width="1"/><path d="M2 4.5 H7" stroke="#000" stroke-width="1"/><path d="M4.5 2.5 V6.5" stroke="#000" stroke-width="1"/></svg><div class="r" style="left:11px;top:334px;width:6px;height:1px;background:repeating-linear-gradient(90deg,#8a8a8a 0 1px,transparent 1px 3px)"></div><svg class="r" style="left:17px;top:329px" width="16" height="13" viewBox="0 0 16 13"><path d="M1.5 2 Q1.5 0.7 3 0.7 H6 L7.3 2 H12.5 Q13 2 13 2.5 V11.8 H1.5 Z" fill="#faf3a8" stroke="#e0862a" stroke-width="1.1"/><path d="M0.8 5.6 H11.8 L14.2 11.8 H2.2 Z" fill="#f8e08a" stroke="#e0862a" stroke-width="1.1"/><path d="M2.5 9.5 H13 L13.8 11.3 H3 Z" fill="#f6d27a"/></svg><div class="t" style="left:54.60px;top:142.65px;font-size:13px;line-height:13px;font-weight:400;font-style:normal;color:#303030;letter-spacing:0.50px;transform:scaleX(1.0544);transform-origin:0 0;-webkit-text-stroke:0.08px #303030;">System Configuration</div><div class="t" style="left:54.60px;top:161.05px;font-size:13px;line-height:13px;font-weight:400;font-style:normal;color:#303030;letter-spacing:0.50px;transform:scaleX(1.0511);transform-origin:0 0;-webkit-text-stroke:0.08px #303030;">EtherNet Configuration</div><div class="t" style="left:54.60px;top:179.45px;font-size:13px;line-height:13px;font-weight:400;font-style:normal;color:#303030;letter-spacing:0.50px;transform:scaleX(1.0488);transform-origin:0 0;-webkit-text-stroke:0.08px #303030;">Alert By Mail Configuration</div><div class="t" style="left:54.60px;top:197.85px;font-size:13px;line-height:13px;font-weight:400;font-style:normal;color:#303030;letter-spacing:0.50px;transform:scaleX(1.0257);transform-origin:0 0;-webkit-text-stroke:0.08px #303030;">SNMP Configuration</div><div class="t" style="left:54.60px;top:216.25px;font-size:13px;line-height:13px;font-weight:400;font-style:normal;color:#303030;letter-spacing:0.50px;transform:scaleX(1.0289);transform-origin:0 0;-webkit-text-stroke:0.08px #303030;">NTP Configuration</div><div class="t" style="left:54.60px;top:234.65px;font-size:13px;line-height:13px;font-weight:400;font-style:normal;color:#303030;letter-spacing:0.50px;transform:scaleX(1.0480);transform-origin:0 0;-webkit-text-stroke:0.08px #303030;">View Events/Mute Beeper</div><div class="t" style="left:54.60px;top:253.05px;font-size:13px;line-height:13px;font-weight:400;font-style:normal;color:#303030;letter-spacing:0.50px;transform:scaleX(1.0429);transform-origin:0 0;-webkit-text-stroke:0.08px #303030;">Generate Test Event</div><div class="t" style="left:54.60px;top:271.45px;font-size:13px;line-height:13px;font-weight:400;font-style:normal;color:#303030;letter-spacing:0.50px;transform:scaleX(1.0486);transform-origin:0 0;-webkit-text-stroke:0.08px #303030;">Clear Event Buffer</div><div class="t" style="left:54.60px;top:289.85px;font-size:13px;line-height:13px;font-weight:400;font-style:normal;color:#303030;letter-spacing:0.50px;transform:scaleX(1.0249);transform-origin:0 0;-webkit-text-stroke:0.08px #303030;">Modify Password</div><div class="t" style="left:54.60px;top:308.25px;font-size:13px;line-height:13px;font-weight:400;font-style:normal;color:#303030;letter-spacing:0.50px;transform:scaleX(1.0468);transform-origin:0 0;-webkit-text-stroke:0.08px #303030;">Upgrade Firmware</div><div class="t" style="left:36.70px;top:326.65px;font-size:13px;line-height:13px;font-weight:400;font-style:normal;color:#303030;letter-spacing:0.50px;transform:scaleX(1.0978);transform-origin:0 0;-webkit-text-stroke:0.08px #303030;">Information</div><div class="r" style="left:259px;top:63px;width:3px;height:435px;background:#6b6b6b;"></div><div class="r" style="left:262px;top:87px;width:898px;height:411px;background:#b6dbee;"></div><svg class="r" style="left:262px;top:63px" width="898" height="24"><defs><pattern id="dp" x="0" y="1" width="4" height="4" patternUnits="userSpaceOnUse"><rect x="1" y="0" width="1" height="1" fill="#2f63c4"/><rect x="3" y="2" width="1" height="1" fill="#2f63c4"/><rect x="0" y="3" width="1" height="1" fill="#ffffff"/><rect x="2" y="1" width="1" height="1" fill="#ffffff"/></pattern></defs><rect x="0" y="0" width="899" height="24" fill="#a9d3fb"/><rect x="4" y="4" width="895" height="16" fill="url(#dp)"/><rect x="0" y="0" width="899" height="1" fill="#2a5fc2"/><rect x="0" y="23" width="899" height="1" fill="#2a5fc2"/><rect x="0" y="0" width="1" height="24" fill="#2a5fc2"/></svg><div class="r" style="left:262px;top:87px;width:898px;height:1px;background:#8a8f94;"></div><div class="r" style="left:263px;top:89px;width:897px;height:396px;background:none;border-left:1px solid #222;border-top:1px solid #222;border-bottom:1px solid #222;"></div><div class="r" style="left:265px;top:91px;width:895px;height:393px;background:#c4c4c4;"></div><div class="r" style="left:266px;top:92px;width:894px;height:21px;background:#dcdcdc;border-top:1px solid #fff;border-left:1px solid #fff;"></div><div class="r" style="left:266px;top:113px;width:894px;height:2px;background:#9c9c9c;"></div><div class="r" style="left:270px;top:103px;width:5px;height:5px;background:#111;"></div><div class="t" style="left:279.50px;top:96.95px;font-size:13px;line-height:13px;font-weight:700;font-style:normal;color:#1e1e1e;letter-spacing:0.50px;transform:scaleX(1.0906);transform-origin:0 0;">System Configurations</div><div class="r" style="left:265px;top:115px;width:895px;height:23px;background:#fffee0;border-left:1px solid #c4c4c4;"></div><div class="r" style="left:266px;top:138px;width:894px;height:1px;background:#b2b2b2;"></div><div class="r" style="left:844px;top:115px;width:1px;height:23px;background:#b8b8b8;"></div><div class="t" style="left:267.80px;top:121.97px;font-size:12.5px;line-height:12.5px;font-weight:400;font-style:normal;color:#525252;letter-spacing:0.50px;transform:scaleX(1.0916);transform-origin:0 0;-webkit-text-stroke:0.08px #525252;">System Beeper Setting</div><div class="r" style="left:847px;top:117px;width:72px;height:17px;background:#fcfcfc;border:1px solid #767676;"></div><div class="t" style="left:852.00px;top:119.95px;font-size:13px;line-height:13px;font-weight:400;font-style:normal;color:#000;letter-spacing:0.00px;">Enabled</div><svg class="r" style="left:905.5px;top:122.5px" width="10" height="7" viewBox="0 0 10 7"><path d="M1.2 1.2 L5 5 L8.8 1.2" fill="none" stroke="#000" stroke-width="2"/></svg><div class="r" style="left:265px;top:139px;width:895px;height:23px;background:#fffee0;border-left:1px solid #c4c4c4;"></div><div class="r" style="left:266px;top:162px;width:894px;height:1px;background:#b2b2b2;"></div><div class="r" style="left:844px;top:139px;width:1px;height:23px;background:#b8b8b8;"></div><div class="t" style="left:267.80px;top:145.97px;font-size:12.5px;line-height:12.5px;font-weight:400;font-style:normal;color:#525252;letter-spacing:0.50px;transform:scaleX(1.0417);transform-origin:0 0;-webkit-text-stroke:0.08px #525252;">PCIE Host Speed</div><div class="r" style="left:847px;top:141px;width:53px;height:17px;background:#fcfcfc;border:1px solid #767676;"></div><div class="t" style="left:852.00px;top:143.95px;font-size:13px;line-height:13px;font-weight:400;font-style:normal;color:#000;letter-spacing:0.00px;">Auto</div><svg class="r" style="left:886.5px;top:146.5px" width="10" height="7" viewBox="0 0 10 7"><path d="M1.2 1.2 L5 5 L8.8 1.2" fill="none" stroke="#000" stroke-width="2"/></svg><div class="r" style="left:265px;top:163px;width:895px;height:23px;background:#fffee0;border-left:1px solid #c4c4c4;"></div><div class="r" style="left:266px;top:186px;width:894px;height:1px;background:#b2b2b2;"></div><div class="r" style="left:844px;top:163px;width:1px;height:23px;background:#b8b8b8;"></div><div class="t" style="left:267.80px;top:169.97px;font-size:12.5px;line-height:12.5px;font-weight:400;font-style:normal;color:#525252;letter-spacing:0.50px;transform:scaleX(1.0268);transform-origin:0 0;-webkit-text-stroke:0.08px #525252;">PCIE Host ASPM</div><div class="r" style="left:847px;top:165px;width:72px;height:17px;background:#fcfcfc;border:1px solid #767676;"></div><div class="t" style="left:852.00px;top:167.95px;font-size:13px;line-height:13px;font-weight:400;font-style:normal;color:#000;letter-spacing:0.00px;">Enabled</div><svg class="r" style="left:905.5px;top:170.5px" width="10" height="7" viewBox="0 0 10 7"><path d="M1.2 1.2 L5 5 L8.8 1.2" fill="none" stroke="#000" stroke-width="2"/></svg><div class="r" style="left:265px;top:187px;width:895px;height:23px;background:#fffee0;border-left:1px solid #c4c4c4;"></div><div class="r" style="left:266px;top:210px;width:894px;height:1px;background:#b2b2b2;"></div><div class="r" style="left:844px;top:187px;width:1px;height:23px;background:#b8b8b8;"></div><div class="t" style="left:267.80px;top:193.97px;font-size:12.5px;line-height:12.5px;font-weight:400;font-style:normal;color:#525252;letter-spacing:0.50px;transform:scaleX(1.0270);transform-origin:0 0;-webkit-text-stroke:0.08px #525252;">PCIE Device ASPM</div><div class="r" style="left:847px;top:189px;width:72px;height:17px;background:#fcfcfc;border:1px solid #767676;"></div><div class="t" style="left:852.00px;top:191.95px;font-size:13px;line-height:13px;font-weight:400;font-style:normal;color:#000;letter-spacing:0.00px;">Enabled</div><svg class="r" style="left:905.5px;top:194.5px" width="10" height="7" viewBox="0 0 10 7"><path d="M1.2 1.2 L5 5 L8.8 1.2" fill="none" stroke="#000" stroke-width="2"/></svg><div class="r" style="left:265px;top:211px;width:895px;height:23px;background:#fffee0;border-left:1px solid #c4c4c4;"></div><div class="r" style="left:266px;top:234px;width:894px;height:1px;background:#b2b2b2;"></div><div class="r" style="left:844px;top:211px;width:1px;height:23px;background:#b8b8b8;"></div><div class="t" style="left:267.80px;top:217.97px;font-size:12.5px;line-height:12.5px;font-weight:400;font-style:normal;color:#525252;letter-spacing:0.50px;transform:scaleX(1.1175);transform-origin:0 0;-webkit-text-stroke:0.08px #525252;">Station#2 CNT#1 Width</div><div class="t" style="left:847.30px;top:216.38px;font-size:12.5px;line-height:12.5px;font-weight:400;font-style:normal;color:#575757;letter-spacing:0.50px;transform:scaleX(1.0937);transform-origin:0 0;">Quad1:</div><div class="r" style="left:900px;top:213px;width:86px;height:17px;background:#fcfcfc;border:1px solid #767676;"></div><div class="t" style="left:905.00px;top:215.95px;font-size:13px;line-height:13px;font-weight:400;font-style:normal;color:#000;letter-spacing:0.00px;">X4</div><svg class="r" style="left:972.5px;top:218.5px" width="10" height="7" viewBox="0 0 10 7"><path d="M1.2 1.2 L5 5 L8.8 1.2" fill="none" stroke="#000" stroke-width="2"/></svg><div class="t" style="left:992.50px;top:216.38px;font-size:12.5px;line-height:12.5px;font-weight:400;font-style:normal;color:#575757;letter-spacing:0.50px;transform:scaleX(1.0937);transform-origin:0 0;">Quad2:</div><div class="r" style="left:1046px;top:213px;width:86px;height:17px;background:#fcfcfc;border:1px solid #767676;"></div><div class="t" style="left:1051.00px;top:215.95px;font-size:13px;line-height:13px;font-weight:400;font-style:normal;color:#000;letter-spacing:0.00px;">X4</div><svg class="r" style="left:1118.5px;top:218.5px" width="10" height="7" viewBox="0 0 10 7"><path d="M1.2 1.2 L5 5 L8.8 1.2" fill="none" stroke="#000" stroke-width="2"/></svg><div class="r" style="left:265px;top:235px;width:895px;height:23px;background:#fffee0;border-left:1px solid #c4c4c4;"></div><div class="r" style="left:266px;top:258px;width:894px;height:1px;background:#b2b2b2;"></div><div class="r" style="left:844px;top:235px;width:1px;height:23px;background:#b8b8b8;"></div><div class="t" style="left:267.80px;top:241.97px;font-size:12.5px;line-height:12.5px;font-weight:400;font-style:normal;color:#525252;letter-spacing:0.50px;transform:scaleX(1.1175);transform-origin:0 0;-webkit-text-stroke:0.08px #525252;">Station#2 CNT#2 Width</div><div class="t" style="left:847.30px;top:240.38px;font-size:12.5px;line-height:12.5px;font-weight:400;font-style:normal;color:#575757;letter-spacing:0.50px;transform:scaleX(1.0937);transform-origin:0 0;">Quad1:</div><div class="r" style="left:900px;top:237px;width:86px;height:17px;background:#fcfcfc;border:1px solid #767676;"></div><div class="t" style="left:905.00px;top:239.95px;font-size:13px;line-height:13px;font-weight:400;font-style:normal;color:#000;letter-spacing:0.00px;">X4</div><svg class="r" style="left:972.5px;top:242.5px" width="10" height="7" viewBox="0 0 10 7"><path d="M1.2 1.2 L5 5 L8.8 1.2" fill="none" stroke="#000" stroke-width="2"/></svg><div class="t" style="left:992.50px;top:240.38px;font-size:12.5px;line-height:12.5px;font-weight:400;font-style:normal;color:#575757;letter-spacing:0.50px;transform:scaleX(1.0937);transform-origin:0 0;">Quad2:</div><div class="r" style="left:1046px;top:237px;width:86px;height:17px;background:#fcfcfc;border:1px solid #767676;"></div><div class="t" style="left:1051.00px;top:239.95px;font-size:13px;line-height:13px;font-weight:400;font-style:normal;color:#000;letter-spacing:0.00px;">X4</div><svg class="r" style="left:1118.5px;top:242.5px" width="10" height="7" viewBox="0 0 10 7"><path d="M1.2 1.2 L5 5 L8.8 1.2" fill="none" stroke="#000" stroke-width="2"/></svg><div class="r" style="left:265px;top:259px;width:895px;height:23px;background:#fffee0;border-left:1px solid #c4c4c4;"></div><div class="r" style="left:266px;top:282px;width:894px;height:1px;background:#b2b2b2;"></div><div class="r" style="left:844px;top:259px;width:1px;height:23px;background:#b8b8b8;"></div><div class="t" style="left:267.80px;top:265.98px;font-size:12.5px;line-height:12.5px;font-weight:400;font-style:normal;color:#525252;letter-spacing:0.50px;transform:scaleX(1.1175);transform-origin:0 0;-webkit-text-stroke:0.08px #525252;">Station#1 CNT#3 Width</div><div class="t" style="left:847.30px;top:264.38px;font-size:12.5px;line-height:12.5px;font-weight:400;font-style:normal;color:#575757;letter-spacing:0.50px;transform:scaleX(1.0937);transform-origin:0 0;">Quad1:</div><div class="r" style="left:900px;top:261px;width:86px;height:17px;background:#fcfcfc;border:1px solid #767676;"></div><div class="t" style="left:905.00px;top:263.95px;font-size:13px;line-height:13px;font-weight:400;font-style:normal;color:#000;letter-spacing:0.00px;">X4</div><svg class="r" style="left:972.5px;top:266.5px" width="10" height="7" viewBox="0 0 10 7"><path d="M1.2 1.2 L5 5 L8.8 1.2" fill="none" stroke="#000" stroke-width="2"/></svg><div class="t" style="left:992.50px;top:264.38px;font-size:12.5px;line-height:12.5px;font-weight:400;font-style:normal;color:#575757;letter-spacing:0.50px;transform:scaleX(1.0937);transform-origin:0 0;">Quad2:</div><div class="r" style="left:1046px;top:261px;width:86px;height:17px;background:#fcfcfc;border:1px solid #767676;"></div><div class="t" style="left:1051.00px;top:263.95px;font-size:13px;line-height:13px;font-weight:400;font-style:normal;color:#000;letter-spacing:0.00px;">X4</div><svg class="r" style="left:1118.5px;top:266.5px" width="10" height="7" viewBox="0 0 10 7"><path d="M1.2 1.2 L5 5 L8.8 1.2" fill="none" stroke="#000" stroke-width="2"/></svg><div class="r" style="left:848px;top:276px;width:52px;height:1px;background:#5a5a5a;"></div><div class="r" style="left:988px;top:276px;width:58px;height:1px;background:#5a5a5a;"></div><div class="r" style="left:265px;top:283px;width:895px;height:23px;background:#fffee0;border-left:1px solid #c4c4c4;"></div><div class="r" style="left:266px;top:306px;width:894px;height:1px;background:#b2b2b2;"></div><div class="r" style="left:844px;top:283px;width:1px;height:23px;background:#b8b8b8;"></div><div class="t" style="left:267.80px;top:289.98px;font-size:12.5px;line-height:12.5px;font-weight:400;font-style:normal;color:#525252;letter-spacing:0.50px;transform:scaleX(1.1175);transform-origin:0 0;-webkit-text-stroke:0.08px #525252;">Station#1 CNT#4 Width</div><div class="t" style="left:847.30px;top:288.38px;font-size:12.5px;line-height:12.5px;font-weight:400;font-style:normal;color:#575757;letter-spacing:0.50px;transform:scaleX(1.0937);transform-origin:0 0;">Quad1:</div><div class="r" style="left:900px;top:285px;width:86px;height:17px;background:#fcfcfc;border:1px solid #767676;"></div><div class="t" style="left:905.00px;top:287.95px;font-size:13px;line-height:13px;font-weight:400;font-style:normal;color:#000;letter-spacing:0.00px;">X4</div><svg class="r" style="left:972.5px;top:290.5px" width="10" height="7" viewBox="0 0 10 7"><path d="M1.2 1.2 L5 5 L8.8 1.2" fill="none" stroke="#000" stroke-width="2"/></svg><div class="t" style="left:992.50px;top:288.38px;font-size:12.5px;line-height:12.5px;font-weight:400;font-style:normal;color:#575757;letter-spacing:0.50px;transform:scaleX(1.0937);transform-origin:0 0;">Quad2:</div><div class="r" style="left:1046px;top:285px;width:86px;height:17px;background:#fcfcfc;border:1px solid #767676;"></div><div class="t" style="left:1051.00px;top:287.95px;font-size:13px;line-height:13px;font-weight:400;font-style:normal;color:#000;letter-spacing:0.00px;">X4</div><svg class="r" style="left:1118.5px;top:290.5px" width="10" height="7" viewBox="0 0 10 7"><path d="M1.2 1.2 L5 5 L8.8 1.2" fill="none" stroke="#000" stroke-width="2"/></svg><div class="r" style="left:265px;top:307px;width:895px;height:23px;background:#fffee0;border-left:1px solid #c4c4c4;"></div><div class="r" style="left:266px;top:330px;width:894px;height:1px;background:#b2b2b2;"></div><div class="r" style="left:844px;top:307px;width:1px;height:23px;background:#b8b8b8;"></div><div class="t" style="left:267.80px;top:313.98px;font-size:12.5px;line-height:12.5px;font-weight:400;font-style:normal;color:#525252;letter-spacing:0.50px;transform:scaleX(1.1051);transform-origin:0 0;-webkit-text-stroke:0.08px #525252;">Station#2 CNT#1 Speed</div><div class="t" style="left:847.30px;top:312.38px;font-size:12.5px;line-height:12.5px;font-weight:400;font-style:normal;color:#575757;letter-spacing:0.50px;transform:scaleX(1.0937);transform-origin:0 0;">Quad1:</div><div class="r" style="left:900px;top:309px;width:53px;height:17px;background:#fcfcfc;border:1px solid #767676;"></div><div class="t" style="left:905.00px;top:311.95px;font-size:13px;line-height:13px;font-weight:400;font-style:normal;color:#000;letter-spacing:0.00px;">Auto</div><svg class="r" style="left:939.5px;top:314.5px" width="10" height="7" viewBox="0 0 10 7"><path d="M1.2 1.2 L5 5 L8.8 1.2" fill="none" stroke="#000" stroke-width="2"/></svg><div class="t" style="left:959.50px;top:312.38px;font-size:12.5px;line-height:12.5px;font-weight:400;font-style:normal;color:#575757;letter-spacing:0.50px;transform:scaleX(1.0937);transform-origin:0 0;">Quad2:</div><div class="r" style="left:1013px;top:309px;width:53px;height:17px;background:#fcfcfc;border:1px solid #767676;"></div><div class="t" style="left:1018.00px;top:311.95px;font-size:13px;line-height:13px;font-weight:400;font-style:normal;color:#000;letter-spacing:0.00px;">Auto</div><svg class="r" style="left:1052.5px;top:314.5px" width="10" height="7" viewBox="0 0 10 7"><path d="M1.2 1.2 L5 5 L8.8 1.2" fill="none" stroke="#000" stroke-width="2"/></svg><div class="r" style="left:265px;top:331px;width:895px;height:23px;background:#fffee0;border-left:1px solid #c4c4c4;"></div><div class="r" style="left:266px;top:354px;width:894px;height:1px;background:#b2b2b2;"></div><div class="r" style="left:844px;top:331px;width:1px;height:23px;background:#b8b8b8;"></div><div class="t" style="left:267.80px;top:337.98px;font-size:12.5px;line-height:12.5px;font-weight:400;font-style:normal;color:#525252;letter-spacing:0.50px;transform:scaleX(1.1051);transform-origin:0 0;-webkit-text-stroke:0.08px #525252;">Station#2 CNT#2 Speed</div><div class="t" style="left:847.30px;top:336.38px;font-size:12.5px;line-height:12.5px;font-weight:400;font-style:normal;color:#575757;letter-spacing:0.50px;transform:scaleX(1.0937);transform-origin:0 0;">Quad1:</div><div class="r" style="left:900px;top:333px;width:53px;height:17px;background:#fcfcfc;border:1px solid #767676;"></div><div class="t" style="left:905.00px;top:335.95px;font-size:13px;line-height:13px;font-weight:400;font-style:normal;color:#000;letter-spacing:0.00px;">Auto</div><svg class="r" style="left:939.5px;top:338.5px" width="10" height="7" viewBox="0 0 10 7"><path d="M1.2 1.2 L5 5 L8.8 1.2" fill="none" stroke="#000" stroke-width="2"/></svg><div class="t" style="left:959.50px;top:336.38px;font-size:12.5px;line-height:12.5px;font-weight:400;font-style:normal;color:#575757;letter-spacing:0.50px;transform:scaleX(1.0937);transform-origin:0 0;">Quad2:</div><div class="r" style="left:1013px;top:333px;width:53px;height:17px;background:#fcfcfc;border:1px solid #767676;"></div><div class="t" style="left:1018.00px;top:335.95px;font-size:13px;line-height:13px;font-weight:400;font-style:normal;color:#000;letter-spacing:0.00px;">Auto</div><svg class="r" style="left:1052.5px;top:338.5px" width="10" height="7" viewBox="0 0 10 7"><path d="M1.2 1.2 L5 5 L8.8 1.2" fill="none" stroke="#000" stroke-width="2"/></svg><div class="r" style="left:265px;top:355px;width:895px;height:23px;background:#fffee0;border-left:1px solid #c4c4c4;"></div><div class="r" style="left:266px;top:378px;width:894px;height:1px;background:#b2b2b2;"></div><div class="r" style="left:844px;top:355px;width:1px;height:23px;background:#b8b8b8;"></div><div class="t" style="left:267.80px;top:361.98px;font-size:12.5px;line-height:12.5px;font-weight:400;font-style:normal;color:#525252;letter-spacing:0.50px;transform:scaleX(1.1051);transform-origin:0 0;-webkit-text-stroke:0.08px #525252;">Station#1 CNT#3 Speed</div><div class="t" style="left:847.30px;top:360.38px;font-size:12.5px;line-height:12.5px;font-weight:400;font-style:normal;color:#575757;letter-spacing:0.50px;transform:scaleX(1.0937);transform-origin:0 0;">Quad1:</div><div class="r" style="left:900px;top:357px;width:53px;height:17px;background:#fcfcfc;border:1px solid #767676;"></div><div class="t" style="left:905.00px;top:359.95px;font-size:13px;line-height:13px;font-weight:400;font-style:normal;color:#000;letter-spacing:0.00px;">Auto</div><svg class="r" style="left:939.5px;top:362.5px" width="10" height="7" viewBox="0 0 10 7"><path d="M1.2 1.2 L5 5 L8.8 1.2" fill="none" stroke="#000" stroke-width="2"/></svg><div class="t" style="left:959.50px;top:360.38px;font-size:12.5px;line-height:12.5px;font-weight:400;font-style:normal;color:#575757;letter-spacing:0.50px;transform:scaleX(1.0937);transform-origin:0 0;">Quad2:</div><div class="r" style="left:1013px;top:357px;width:53px;height:17px;background:#fcfcfc;border:1px solid #767676;"></div><div class="t" style="left:1018.00px;top:359.95px;font-size:13px;line-height:13px;font-weight:400;font-style:normal;color:#000;letter-spacing:0.00px;">Auto</div><svg class="r" style="left:1052.5px;top:362.5px" width="10" height="7" viewBox="0 0 10 7"><path d="M1.2 1.2 L5 5 L8.8 1.2" fill="none" stroke="#000" stroke-width="2"/></svg><div class="r" style="left:265px;top:379px;width:895px;height:23px;background:#fffee0;border-left:1px solid #c4c4c4;"></div><div class="r" style="left:266px;top:402px;width:894px;height:1px;background:#b2b2b2;"></div><div class="r" style="left:844px;top:379px;width:1px;height:23px;background:#b8b8b8;"></div><div class="t" style="left:267.80px;top:385.98px;font-size:12.5px;line-height:12.5px;font-weight:400;font-style:normal;color:#525252;letter-spacing:0.50px;transform:scaleX(1.1051);transform-origin:0 0;-webkit-text-stroke:0.08px #525252;">Station#1 CNT#4 Speed</div><div class="t" style="left:847.30px;top:384.38px;font-size:12.5px;line-height:12.5px;font-weight:400;font-style:normal;color:#575757;letter-spacing:0.50px;transform:scaleX(1.0937);transform-origin:0 0;">Quad1:</div><div class="r" style="left:900px;top:381px;width:53px;height:17px;background:#fcfcfc;border:1px solid #767676;"></div><div class="t" style="left:905.00px;top:383.95px;font-size:13px;line-height:13px;font-weight:400;font-style:normal;color:#000;letter-spacing:0.00px;">Auto</div><svg class="r" style="left:939.5px;top:386.5px" width="10" height="7" viewBox="0 0 10 7"><path d="M1.2 1.2 L5 5 L8.8 1.2" fill="none" stroke="#000" stroke-width="2"/></svg><div class="t" style="left:959.50px;top:384.38px;font-size:12.5px;line-height:12.5px;font-weight:400;font-style:normal;color:#575757;letter-spacing:0.50px;transform:scaleX(1.0937);transform-origin:0 0;">Quad2:</div><div class="r" style="left:1013px;top:381px;width:53px;height:17px;background:#fcfcfc;border:1px solid #767676;"></div><div class="t" style="left:1018.00px;top:383.95px;font-size:13px;line-height:13px;font-weight:400;font-style:normal;color:#000;letter-spacing:0.00px;">Auto</div><svg class="r" style="left:1052.5px;top:386.5px" width="10" height="7" viewBox="0 0 10 7"><path d="M1.2 1.2 L5 5 L8.8 1.2" fill="none" stroke="#000" stroke-width="2"/></svg><div class="r" style="left:266px;top:403px;width:894px;height:1px;background:#ffffff;"></div><div class="r" style="left:266px;top:404px;width:894px;height:16px;background:#dcdcdc;border-left:1px solid #fff;"></div><div class="r" style="left:266px;top:420px;width:894px;height:1px;background:#8c8c8c;"></div><div class="r" style="left:266px;top:421px;width:894px;height:1px;background:#ffffff;"></div><div class="r" style="left:266px;top:422px;width:894px;height:19px;background:#e0fde0;border-left:1px solid #fff;"></div><div class="r" style="left:266px;top:441px;width:894px;height:1px;background:#9a9a9a;"></div><div class="r" style="left:270px;top:425px;width:11px;height:11px;background:#fff;border:1px solid #7a7a7a;border-radius:2px;"></div><div class="t" style="left:291.00px;top:426.95px;font-size:13px;line-height:13px;font-weight:700;font-style:normal;color:#ff0000;letter-spacing:0.50px;transform:scaleX(1.0939);transform-origin:0 0;">Confirm The Operation</div><div class="r" style="left:266px;top:442px;width:894px;height:1px;background:#ffffff;"></div><div class="r" style="left:266px;top:443px;width:894px;height:21px;background:#e0fde0;border-left:1px solid #fff;"></div><div class="r" style="left:266px;top:464px;width:894px;height:1px;background:#9a9a9a;"></div><div class="r" style="left:266px;top:443px;width:54px;height:17px;background:#fafafa;border:2px solid #111;border-top-color:#333;border-left-color:#333;"></div><div class="t" style="left:274.50px;top:446.45px;font-size:13px;line-height:13px;font-weight:400;font-style:normal;color:#000;letter-spacing:0.00px;">Submit</div><div class="r" style="left:328px;top:443px;width:47px;height:17px;background:#fafafa;border:2px solid #111;border-top-color:#333;border-left-color:#333;"></div><div class="t" style="left:336.50px;top:446.45px;font-size:13px;line-height:13px;font-weight:400;font-style:normal;color:#000;letter-spacing:0.00px;">Reset</div><div class="r" style="left:266px;top:465px;width:894px;height:1px;background:#ffffff;"></div><div class="r" style="left:266px;top:466px;width:894px;height:16px;background:#dcdcdc;border-left:1px solid #fff;"></div><div class="r" style="left:266px;top:482px;width:894px;height:1px;background:#8c8c8c;"></div><div class="r" style="left:264px;top:484px;width:896px;height:1px;background:#9a9a9a;"></div><div class="r" style="left:900px;top:231px;width:88px;height:123px;background:#ffffff;box-sizing:border-box;border:1px solid #8a8a8a;border-top:2px solid #777;"></div><div class="r" style="left:901px;top:233px;width:86px;height:24px;background:#1b64d1;"></div><div class="t" style="left:905.00px;top:238.95px;font-size:13px;line-height:13px;font-weight:400;font-style:normal;color:#fff;letter-spacing:0.00px;">X4</div><div class="t" style="left:905.00px;top:262.95px;font-size:13px;line-height:13px;font-weight:400;font-style:normal;color:#000;letter-spacing:0.00px;">X8</div><div class="t" style="left:905.00px;top:286.95px;font-size:13px;line-height:13px;font-weight:400;font-style:normal;color:#000;letter-spacing:0.00px;">X16</div><div class="t" style="left:905.00px;top:310.95px;font-size:13px;line-height:13px;font-weight:400;font-style:normal;color:#000;letter-spacing:0.00px;">X2X2</div><div class="t" style="left:905.00px;top:334.95px;font-size:13px;line-height:13px;font-weight:400;font-style:normal;color:#000;letter-spacing:0.00px;">X1X1X1X1</div></div><div class="r" style="left:1160px;top:2px;width:18px;height:1px;background:#c9c9c9;"></div><div class="r" style="left:1178px;top:0;width:332px;height:496px;overflow:hidden"><div class="r" style="left:-823px;top:-2px;width:1160px;height:498px"><div class="r" style="left:0px;top:2px;width:1178px;height:1px;background:#c9c9c9;"></div><div class="r" style="left:0px;top:3px;width:1160px;height:60px;background:linear-gradient(#9fd0fa 0px,#c6e3fb 14px,#e8f3fd 28px,#ffffff 40px);"></div><div class="r" style="left:256px;top:45px;width:904px;height:8px;background:linear-gradient(90deg,#f3f7fd 0px,#e4eafa 440px,#c8c8f4 650px,#c6c6f4 904px);"></div><div class="r" style="left:0px;top:53px;width:256px;height:0px;background:#fff;"></div><svg class="r" style="left:0;top:3px" width="256" height="60" viewBox="0 3 256 60"><clipPath id="pc"><rect x="0" y="3" width="256" height="60"/></clipPath><g clip-path="url(#pc)"><defs><linearGradient id="sky" x1="0" y1="0" x2="0" y2="1"><stop offset="0" stop-color="#b4d9f8"/><stop offset="0.45" stop-color="#eef6fd"/><stop offset="1" stop-color="#ffffff"/></linearGradient></defs><rect x="0" y="3" width="256" height="60" fill="url(#sky)"/><path d="M0 48 Q7 49 13 55 L16 63 L0 63 Z" fill="#5e8b5a"/><rect x="0" y="57" width="256" height="6" fill="#34523a"/><circle cx="115.8" cy="59.0" r="2.9" fill="#587a54"/><circle cx="115.7" cy="61.7" r="1.6" fill="#9ab08e"/><circle cx="131.0" cy="59.7" r="2.6" fill="#2c4430"/><circle cx="114.3" cy="55.3" r="2.2" fill="#86a07a"/><circle cx="177.5" cy="54.4" r="3.0" fill="#587a54"/><circle cx="167.4" cy="59.5" r="1.6" fill="#22352a"/><circle cx="212.9" cy="54.6" r="1.4" fill="#86a07a"/><circle cx="61.9" cy="54.3" r="2.1" fill="#587a54"/><circle cx="151.3" cy="55.8" r="1.7" fill="#2c4430"/><circle cx="127.9" cy="60.0" r="2.1" fill="#2c4430"/><circle cx="104.1" cy="59.0" r="2.9" fill="#2c4430"/><circle cx="181.2" cy="56.8" r="1.7" fill="#2c4430"/><circle cx="7.6" cy="59.1" r="1.5" fill="#2c4430"/><circle cx="216.7" cy="57.5" r="2.9" fill="#b4c4a8"/><circle cx="175.3" cy="55.9" r="2.9" fill="#22352a"/><circle cx="120.3" cy="62.8" r="2.0" fill="#2c4430"/><circle cx="145.0" cy="55.8" r="2.4" fill="#283e2c"/><circle cx="22.3" cy="57.0" r="2.9" fill="#9ab08e"/><circle cx="236.2" cy="55.2" r="2.5" fill="#22352a"/><circle cx="15.3" cy="61.2" r="1.6" fill="#648660"/><circle cx="48.2" cy="58.6" r="3.0" fill="#9ab08e"/><circle cx="33.5" cy="59.8" r="1.5" fill="#4a6c4a"/><circle cx="253.5" cy="54.0" r="2.8" fill="#9ab08e"/><circle cx="151.7" cy="63.0" r="1.3" fill="#283e2c"/><circle cx="100.9" cy="61.7" r="2.4" fill="#2c4430"/><circle cx="10.8" cy="55.3" r="2.1" fill="#22352a"/><circle cx="197.8" cy="57.0" r="1.8" fill="#2c4430"/><circle cx="19.0" cy="55.9" r="2.4" fill="#22352a"/><circle cx="153.9" cy="57.3" r="2.1" fill="#4a6c4a"/><circle cx="123.8" cy="59.2" r="2.8" fill="#283e2c"/><circle cx="160.6" cy="56.8" r="1.7" fill="#4a6c4a"/><circle cx="63.9" cy="55.7" r="2.6" fill="#648660"/><circle cx="50.3" cy="62.6" r="2.8" fill="#4a6c4a"/><circle cx="20.1" cy="54.4" r="1.5" fill="#648660"/><circle cx="246.4" cy="56.1" r="2.5" fill="#2c4430"/><circle cx="107.7" cy="62.1" r="2.1" fill="#648660"/><circle cx="44.9" cy="60.5" r="1.4" fill="#22352a"/><circle cx="122.7" cy="59.9" r="2.3" fill="#2c4430"/><circle cx="71.7" cy="62.3" r="1.6" fill="#22352a"/><circle cx="17.7" cy="57.7" r="1.7" fill="#22352a"/><circle cx="45.1" cy="57.3" r="2.3" fill="#283e2c"/><circle cx="23.6" cy="55.2" r="2.1" fill="#283e2c"/><circle cx="168.2" cy="60.2" r="2.3" fill="#283e2c"/><circle cx="151.0" cy="62.3" r="2.1" fill="#283e2c"/><circle cx="179.4" cy="62.7" r="1.3" fill="#587a54"/><circle cx="19.2" cy="54.6" r="1.8" fill="#283e2c"/><circle cx="255.8" cy="54.7" r="2.2" fill="#648660"/><circle cx="11.4" cy="62.4" r="2.6" fill="#283e2c"/><circle cx="203.1" cy="62.2" r="1.9" fill="#587a54"/><circle cx="121.2" cy="54.7" r="2.8" fill="#9ab08e"/><circle cx="7.7" cy="58.5" r="1.3" fill="#587a54"/><circle cx="97.9" cy="59.2" r="2.3" fill="#2c4430"/><circle cx="23.2" cy="55.0" r="1.7" fill="#4a6c4a"/><circle cx="186.4" cy="57.5" r="2.5" fill="#4a6c4a"/><circle cx="117.2" cy="58.2" r="2.2" fill="#648660"/><circle cx="192.1" cy="54.3" r="2.3" fill="#587a54"/><circle cx="5.7" cy="62.6" r="1.5" fill="#9ab08e"/><circle cx="157.3" cy="62.3" r="1.7" fill="#22352a"/><circle cx="94.2" cy="55.3" r="2.3" fill="#648660"/><circle cx="43.4" cy="62.2" r="2.4" fill="#587a54"/><circle cx="127.6" cy="56.2" r="2.0" fill="#2c4430"/><circle cx="50.8" cy="57.9" r="2.7" fill="#86a07a"/><circle cx="51.3" cy="55.9" r="1.7" fill="#86a07a"/><circle cx="81.0" cy="55.2" r="2.1" fill="#b4c4a8"/><circle cx="229.3" cy="54.4" r="1.4" fill="#2c4430"/><circle cx="210.4" cy="55.0" r="2.1" fill="#86a07a"/><circle cx="54.8" cy="57.7" r="2.4" fill="#587a54"/><circle cx="172.1" cy="60.4" r="2.7" fill="#4a6c4a"/><circle cx="115.8" cy="54.7" r="1.4" fill="#b4c4a8"/><circle cx="155.5" cy="60.1" r="1.8" fill="#283e2c"/><circle cx="79.1" cy="61.1" r="1.3" fill="#283e2c"/><circle cx="103.7" cy="55.7" r="2.6" fill="#2c4430"/><circle cx="60.8" cy="55.3" r="1.4" fill="#587a54"/><circle cx="29.5" cy="55.0" r="2.2" fill="#587a54"/><circle cx="206.7" cy="62.6" r="2.5" fill="#22352a"/><circle cx="210.9" cy="56.3" r="2.5" fill="#9ab08e"/><circle cx="120.9" cy="60.4" r="1.6" fill="#2c4430"/><circle cx="199.3" cy="58.9" r="2.9" fill="#648660"/><circle cx="157.3" cy="60.8" r="2.0" fill="#9ab08e"/><circle cx="179.1" cy="56.0" r="2.0" fill="#86a07a"/><circle cx="184.9" cy="55.2" r="2.1" fill="#587a54"/><circle cx="227.2" cy="54.1" r="2.2" fill="#587a54"/><circle cx="225.1" cy="61.2" r="2.9" fill="#587a54"/><circle cx="83.6" cy="62.8" r="1.5" fill="#b4c4a8"/><circle cx="209.5" cy="59.8" r="2.5" fill="#22352a"/><circle cx="62.0" cy="57.5" r="1.4" fill="#2c4430"/><circle cx="137.5" cy="61.1" r="1.8" fill="#86a07a"/><circle cx="183.9" cy="54.1" r="2.2" fill="#22352a"/><circle cx="112.9" cy="59.0" r="2.6" fill="#587a54"/><circle cx="235.5" cy="56.0" r="2.8" fill="#4a6c4a"/><circle cx="204.8" cy="55.6" r="1.9" fill="#9ab08e"/><circle cx="234.5" cy="58.2" r="3.0" fill="#86a07a"/><circle cx="185.2" cy="61.6" r="2.5" fill="#86a07a"/><circle cx="126.1" cy="62.5" r="1.4" fill="#22352a"/><circle cx="112.5" cy="59.0" r="2.7" fill="#648660"/><circle cx="163.6" cy="58.7" r="2.7" fill="#648660"/><circle cx="65.7" cy="60.0" r="2.9" fill="#b4c4a8"/><circle cx="230.5" cy="55.9" r="2.7" fill="#648660"/><circle cx="134.2" cy="59.2" r="1.6" fill="#648660"/><circle cx="29.3" cy="54.0" r="1.9" fill="#648660"/><circle cx="248.2" cy="58.6" r="2.0" fill="#9ab08e"/><circle cx="253.3" cy="55.1" r="1.5" fill="#283e2c"/><circle cx="16.9" cy="58.8" r="2.0" fill="#9ab08e"/><circle cx="236.4" cy="56.4" r="2.1" fill="#283e2c"/><circle cx="87.0" cy="62.1" r="2.9" fill="#86a07a"/><circle cx="122.0" cy="56.9" r="1.6" fill="#4a6c4a"/><circle cx="7.5" cy="56.3" r="2.5" fill="#22352a"/><circle cx="9.1" cy="55.4" r="1.3" fill="#2c4430"/><circle cx="82.5" cy="57.2" r="2.4" fill="#2c4430"/><circle cx="127.9" cy="59.2" r="2.7" fill="#4a6c4a"/><circle cx="64.1" cy="55.8" r="2.2" fill="#4a6c4a"/><circle cx="6.0" cy="59.7" r="2.7" fill="#4a6c4a"/><circle cx="40.9" cy="55.8" r="2.4" fill="#587a54"/><circle cx="55.9" cy="55.9" r="2.2" fill="#4a6c4a"/><circle cx="219.3" cy="56.1" r="2.6" fill="#9ab08e"/><circle cx="89.0" cy="55.6" r="2.3" fill="#86a07a"/><circle cx="236.2" cy="56.0" r="3.0" fill="#86a07a"/><circle cx="24.8" cy="62.0" r="1.5" fill="#2c4430"/><circle cx="66.4" cy="54.9" r="2.7" fill="#4a6c4a"/><circle cx="139.1" cy="60.3" r="1.6" fill="#587a54"/><circle cx="175.4" cy="54.2" r="1.6" fill="#587a54"/><circle cx="91.5" cy="61.4" r="1.9" fill="#648660"/><circle cx="129.5" cy="60.8" r="2.2" fill="#587a54"/><circle cx="213.2" cy="61.2" r="2.1" fill="#22352a"/><circle cx="9.6" cy="59.0" r="2.2" fill="#4a6c4a"/><circle cx="123.2" cy="55.7" r="1.5" fill="#283e2c"/><circle cx="215.1" cy="62.9" r="2.9" fill="#2c4430"/><circle cx="148.4" cy="55.2" r="2.5" fill="#2c4430"/><circle cx="195.8" cy="56.9" r="2.1" fill="#648660"/><circle cx="90.8" cy="55.9" r="1.9" fill="#587a54"/><circle cx="179.5" cy="61.6" r="1.6" fill="#587a54"/><circle cx="92.0" cy="57.3" r="2.9" fill="#4a6c4a"/><circle cx="42.3" cy="58.6" r="1.3" fill="#86a07a"/><circle cx="21.7" cy="61.6" r="2.8" fill="#86a07a"/><circle cx="161.1" cy="57.6" r="2.3" fill="#648660"/><circle cx="149.7" cy="57.1" r="2.6" fill="#2c4430"/><circle cx="233.3" cy="60.7" r="2.6" fill="#b4c4a8"/><circle cx="239.1" cy="55.2" r="1.9" fill="#648660"/><circle cx="177.9" cy="60.9" r="2.6" fill="#4a6c4a"/><circle cx="52.9" cy="55.7" r="2.7" fill="#2c4430"/><circle cx="120.0" cy="54.1" r="1.9" fill="#587a54"/><circle cx="231.1" cy="54.4" r="1.8" fill="#587a54"/><circle cx="76.5" cy="55.9" r="2.0" fill="#283e2c"/><circle cx="136.5" cy="57.5" r="3.0" fill="#587a54"/><circle cx="54.6" cy="55.1" r="2.0" fill="#4a6c4a"/><circle cx="5.8" cy="59.5" r="2.6" fill="#2c4430"/><circle cx="113.6" cy="58.5" r="2.6" fill="#587a54"/><circle cx="96.2" cy="54.9" r="1.7" fill="#86a07a"/><circle cx="87.3" cy="58.9" r="2.0" fill="#648660"/><circle cx="145.4" cy="63.0" r="2.4" fill="#9ab08e"/><circle cx="165.0" cy="58.9" r="2.4" fill="#22352a"/><circle cx="98.9" cy="62.4" r="2.0" fill="#283e2c"/><circle cx="219.1" cy="58.9" r="2.3" fill="#4a6c4a"/><circle cx="242.0" cy="57.8" r="2.2" fill="#4a6c4a"/><circle cx="80.0" cy="58.8" r="2.1" fill="#2c4430"/><circle cx="143.5" cy="56.6" r="2.5" fill="#2c4430"/><circle cx="6.9" cy="61.0" r="2.3" fill="#587a54"/><circle cx="40.1" cy="60.8" r="2.0" fill="#86a07a"/><circle cx="80.7" cy="57.6" r="2.3" fill="#648660"/><circle cx="241.8" cy="54.7" r="2.8" fill="#4a6c4a"/><circle cx="184.1" cy="56.3" r="2.6" fill="#22352a"/><circle cx="134.0" cy="62.4" r="2.5" fill="#587a54"/><circle cx="37.0" cy="62.6" r="1.7" fill="#648660"/><circle cx="29.5" cy="59.6" r="2.1" fill="#22352a"/><circle cx="220.4" cy="57.2" r="1.6" fill="#283e2c"/><circle cx="113.4" cy="60.0" r="2.1" fill="#2c4430"/><circle cx="163.7" cy="60.1" r="1.9" fill="#648660"/><circle cx="135.9" cy="63.0" r="2.9" fill="#648660"/><circle cx="33.0" cy="58.3" r="2.2" fill="#2c4430"/><circle cx="200.8" cy="59.6" r="1.9" fill="#2c4430"/><path d="M69.2 45 L68.7 63 L71.3 63 L70.8 45 Z" fill="#c9cdc8"/><path d="M69.2 45 L68.7 63 L69.7 63 L69.8 45 Z" fill="#8a948a"/><path d="M70.0 43.0 Q63.0 37.3 56.6 43.6" fill="none" stroke="#283e2c" stroke-width="2.6" stroke-linecap="round"/><path d="M70.0 43.0 Q63.7 38.8 58.0 46.4" fill="none" stroke="#648660" stroke-width="2.4" stroke-linecap="round"/><path d="M70.0 43.0 Q64.5 40.4 59.6 49.0" fill="none" stroke="#2c4430" stroke-width="2.2" stroke-linecap="round"/><path d="M70.0 43.0 Q64.8 41.8 60.3 52.2" fill="none" stroke="#4a6c4a" stroke-width="2.0" stroke-linecap="round"/><path d="M70.0 43.0 Q65.4 43.4 61.5 55.2" fill="none" stroke="#283e2c" stroke-width="1.8" stroke-linecap="round"/><path d="M70.0 43.0 Q64.6 38.8 60.4 45.4" fill="none" stroke="#86a07a" stroke-width="0.9" stroke-linecap="round"/><path d="M70.0 43.0 Q77.2 37.1 83.8 43.7" fill="none" stroke="#283e2c" stroke-width="2.6" stroke-linecap="round"/><path d="M70.0 43.0 Q76.0 39.0 81.4 46.3" fill="none" stroke="#4a6c4a" stroke-width="2.4" stroke-linecap="round"/><path d="M70.0 43.0 Q75.4 40.5 80.2 48.9" fill="none" stroke="#2c4430" stroke-width="2.2" stroke-linecap="round"/><path d="M70.0 43.0 Q75.0 41.9 79.4 51.9" fill="none" stroke="#648660" stroke-width="2.0" stroke-linecap="round"/><path d="M70.0 43.0 Q74.2 43.4 77.8 54.2" fill="none" stroke="#22352a" stroke-width="1.8" stroke-linecap="round"/><path d="M70.0 43.0 Q75.4 38.8 79.6 45.4" fill="none" stroke="#86a07a" stroke-width="0.9" stroke-linecap="round"/><path d="M70.0 43.0 L67.2 37.0" stroke="#2c4430" stroke-width="2.6" stroke-linecap="round"/><path d="M70.0 43.0 L70.0 36.4" stroke="#22352a" stroke-width="2.6" stroke-linecap="round"/><path d="M70.0 43.0 L72.8 37.0" stroke="#22352a" stroke-width="2.6" stroke-linecap="round"/><path d="M94.3 49 L93.8 63 L96.2 63 L95.7 49 Z" fill="#c9cdc8"/><path d="M94.3 49 L93.8 63 L94.8 63 L94.9 49 Z" fill="#8a948a"/><path d="M95.0 47.0 Q89.0 42.1 83.5 47.5" fill="none" stroke="#22352a" stroke-width="2.2" stroke-linecap="round"/><path d="M95.0 47.0 Q89.7 43.5 85.0 49.8" fill="none" stroke="#648660" stroke-width="2.0" stroke-linecap="round"/><path d="M95.0 47.0 Q90.1 44.7 85.7 52.4" fill="none" stroke="#2c4430" stroke-width="1.8" stroke-linecap="round"/><path d="M95.0 47.0 Q90.8 46.1 87.1 54.4" fill="none" stroke="#4a6c4a" stroke-width="1.7" stroke-linecap="round"/><path d="M95.0 47.0 Q91.4 47.3 88.3 56.6" fill="none" stroke="#2c4430" stroke-width="1.5" stroke-linecap="round"/><path d="M95.0 47.0 Q90.5 43.5 87.0 49.0" fill="none" stroke="#86a07a" stroke-width="0.8" stroke-linecap="round"/><path d="M95.0 47.0 Q100.6 42.4 105.6 47.5" fill="none" stroke="#22352a" stroke-width="2.2" stroke-linecap="round"/><path d="M95.0 47.0 Q100.4 43.4 105.3 49.9" fill="none" stroke="#587a54" stroke-width="2.0" stroke-linecap="round"/><path d="M95.0 47.0 Q99.9 44.7 104.2 52.3" fill="none" stroke="#283e2c" stroke-width="1.8" stroke-linecap="round"/><path d="M95.0 47.0 Q99.3 46.0 103.1 54.7" fill="none" stroke="#4a6c4a" stroke-width="1.7" stroke-linecap="round"/><path d="M95.0 47.0 Q98.7 47.3 101.8 56.7" fill="none" stroke="#283e2c" stroke-width="1.5" stroke-linecap="round"/><path d="M95.0 47.0 Q99.5 43.5 103.0 49.0" fill="none" stroke="#b4c4a8" stroke-width="0.8" stroke-linecap="round"/><path d="M95.0 47.0 L92.7 42.0" stroke="#2c4430" stroke-width="2.2" stroke-linecap="round"/><path d="M95.0 47.0 L95.0 41.5" stroke="#22352a" stroke-width="2.2" stroke-linecap="round"/><path d="M95.0 47.0 L97.3 42.0" stroke="#2c4430" stroke-width="2.2" stroke-linecap="round"/><path d="M139.2 42 L138.7 63 L141.3 63 L140.8 42 Z" fill="#c9cdc8"/><path d="M139.2 42 L138.7 63 L139.7 63 L139.8 42 Z" fill="#8a948a"/><path d="M140.0 40.0 Q133.3 34.5 127.2 40.6" fill="none" stroke="#283e2c" stroke-width="2.6" stroke-linecap="round"/><path d="M140.0 40.0 Q133.8 35.9 128.2 43.3" fill="none" stroke="#648660" stroke-width="2.4" stroke-linecap="round"/><path d="M140.0 40.0 Q134.2 37.3 129.0 46.3" fill="none" stroke="#22352a" stroke-width="2.2" stroke-linecap="round"/><path d="M140.0 40.0 Q135.0 38.9 130.6 48.9" fill="none" stroke="#587a54" stroke-width="2.0" stroke-linecap="round"/><path d="M140.0 40.0 Q135.6 40.4 131.7 51.8" fill="none" stroke="#2c4430" stroke-width="1.8" stroke-linecap="round"/><path d="M140.0 40.0 Q134.6 35.8 130.4 42.4" fill="none" stroke="#b4c4a8" stroke-width="0.9" stroke-linecap="round"/><path d="M140.0 40.0 Q146.7 34.6 152.7 40.6" fill="none" stroke="#22352a" stroke-width="2.6" stroke-linecap="round"/><path d="M140.0 40.0 Q146.3 35.9 151.9 43.4" fill="none" stroke="#648660" stroke-width="2.4" stroke-linecap="round"/><path d="M140.0 40.0 Q145.7 37.4 150.7 46.2" fill="none" stroke="#283e2c" stroke-width="2.2" stroke-linecap="round"/><path d="M140.0 40.0 Q145.0 38.9 149.4 48.9" fill="none" stroke="#4a6c4a" stroke-width="2.0" stroke-linecap="round"/><path d="M140.0 40.0 Q144.2 40.4 147.9 51.2" fill="none" stroke="#22352a" stroke-width="1.8" stroke-linecap="round"/><path d="M140.0 40.0 Q145.4 35.8 149.6 42.4" fill="none" stroke="#86a07a" stroke-width="0.9" stroke-linecap="round"/><path d="M140.0 40.0 L137.2 34.0" stroke="#283e2c" stroke-width="2.6" stroke-linecap="round"/><path d="M140.0 40.0 L140.0 33.4" stroke="#22352a" stroke-width="2.6" stroke-linecap="round"/><path d="M140.0 40.0 L142.8 34.0" stroke="#283e2c" stroke-width="2.6" stroke-linecap="round"/><path d="M16.5 48 L16.0 63 L18.0 63 L17.5 48 Z" fill="#c9cdc8"/><path d="M16.5 48 L16.0 63 L17.0 63 L17.1 48 Z" fill="#8a948a"/><path d="M17.0 46.0 Q13.6 43.2 10.5 46.3" fill="none" stroke="#283e2c" stroke-width="1.5" stroke-linecap="round"/><path d="M17.0 46.0 Q13.8 43.9 10.9 47.7" fill="none" stroke="#587a54" stroke-width="1.4" stroke-linecap="round"/><path d="M17.0 46.0 Q14.2 44.7 11.8 49.0" fill="none" stroke="#22352a" stroke-width="1.3" stroke-linecap="round"/><path d="M17.0 46.0 Q14.5 45.4 12.4 50.4" fill="none" stroke="#648660" stroke-width="1.1" stroke-linecap="round"/><path d="M17.0 46.0 Q14.7 46.2 12.8 52.0" fill="none" stroke="#2c4430" stroke-width="1.0" stroke-linecap="round"/><path d="M17.0 46.0 Q14.3 43.9 12.2 47.2" fill="none" stroke="#9ab08e" stroke-width="0.5" stroke-linecap="round"/><path d="M17.0 46.0 Q20.4 43.2 23.5 46.3" fill="none" stroke="#2c4430" stroke-width="1.5" stroke-linecap="round"/><path d="M17.0 46.0 Q20.2 43.9 23.0 47.7" fill="none" stroke="#648660" stroke-width="1.4" stroke-linecap="round"/><path d="M17.0 46.0 Q19.9 44.6 22.6 49.2" fill="none" stroke="#2c4430" stroke-width="1.3" stroke-linecap="round"/><path d="M17.0 46.0 Q19.5 45.4 21.7 50.5" fill="none" stroke="#587a54" stroke-width="1.1" stroke-linecap="round"/><path d="M17.0 46.0 Q19.2 46.2 21.1 51.8" fill="none" stroke="#22352a" stroke-width="1.0" stroke-linecap="round"/><path d="M17.0 46.0 Q19.7 43.9 21.8 47.2" fill="none" stroke="#b4c4a8" stroke-width="0.5" stroke-linecap="round"/><path d="M17.0 46.0 L15.6 43.0" stroke="#283e2c" stroke-width="1.5" stroke-linecap="round"/><path d="M17.0 46.0 L17.0 42.7" stroke="#283e2c" stroke-width="1.5" stroke-linecap="round"/><path d="M17.0 46.0 L18.4 43.0" stroke="#22352a" stroke-width="1.5" stroke-linecap="round"/><path d="M212.0 29 L211.5 63 L214.5 63 L214.0 29 Z" fill="#c9cdc8"/><path d="M212.0 29 L211.5 63 L212.5 63 L212.6 29 Z" fill="#8a948a"/><path d="M213.0 27.0 Q205.8 21.1 199.2 27.7" fill="none" stroke="#2c4430" stroke-width="2.9" stroke-linecap="round"/><path d="M213.0 27.0 Q206.5 22.7 200.6 30.5" fill="none" stroke="#648660" stroke-width="2.6" stroke-linecap="round"/><path d="M213.0 27.0 Q206.9 24.2 201.5 33.6" fill="none" stroke="#2c4430" stroke-width="2.4" stroke-linecap="round"/><path d="M213.0 27.0 Q207.4 25.7 202.5 37.0" fill="none" stroke="#648660" stroke-width="2.2" stroke-linecap="round"/><path d="M213.0 27.0 Q208.2 27.4 204.1 39.8" fill="none" stroke="#2c4430" stroke-width="1.9" stroke-linecap="round"/><path d="M213.0 27.0 Q207.2 22.4 202.6 29.6" fill="none" stroke="#86a07a" stroke-width="1.0" stroke-linecap="round"/><path d="M213.0 27.0 Q220.3 21.1 226.9 27.7" fill="none" stroke="#283e2c" stroke-width="2.9" stroke-linecap="round"/><path d="M213.0 27.0 Q219.9 22.5 226.0 30.7" fill="none" stroke="#4a6c4a" stroke-width="2.6" stroke-linecap="round"/><path d="M213.0 27.0 Q218.9 24.2 224.1 33.4" fill="none" stroke="#2c4430" stroke-width="2.4" stroke-linecap="round"/><path d="M213.0 27.0 Q218.7 25.7 223.6 37.0" fill="none" stroke="#587a54" stroke-width="2.2" stroke-linecap="round"/><path d="M213.0 27.0 Q217.9 27.4 222.1 40.1" fill="none" stroke="#22352a" stroke-width="1.9" stroke-linecap="round"/><path d="M213.0 27.0 Q218.8 22.4 223.4 29.6" fill="none" stroke="#86a07a" stroke-width="1.0" stroke-linecap="round"/><path d="M213.0 27.0 L210.0 20.5" stroke="#22352a" stroke-width="2.9" stroke-linecap="round"/><path d="M213.0 27.0 L213.0 19.9" stroke="#283e2c" stroke-width="2.9" stroke-linecap="round"/><path d="M213.0 27.0 L216.0 20.5" stroke="#22352a" stroke-width="2.9" stroke-linecap="round"/><path d="M19.0 15 L18.5 63 L21.5 63 L21.0 15 Z" fill="#c9cdc8"/><path d="M19.0 15 L18.5 63 L19.5 63 L19.6 15 Z" fill="#8a948a"/><path d="M20.0 13.0 Q11.3 5.9 3.4 13.8" fill="none" stroke="#22352a" stroke-width="3.3" stroke-linecap="round"/><path d="M20.0 13.0 Q12.0 7.7 4.8 17.3" fill="none" stroke="#587a54" stroke-width="3.0" stroke-linecap="round"/><path d="M20.0 13.0 Q13.2 9.8 7.2 20.4" fill="none" stroke="#283e2c" stroke-width="2.8" stroke-linecap="round"/><path d="M20.0 13.0 Q13.8 11.6 8.4 24.0" fill="none" stroke="#648660" stroke-width="2.5" stroke-linecap="round"/><path d="M20.0 13.0 Q14.7 13.5 10.2 27.1" fill="none" stroke="#22352a" stroke-width="2.2" stroke-linecap="round"/><path d="M20.0 13.0 Q13.2 7.8 8.0 16.0" fill="none" stroke="#b4c4a8" stroke-width="1.2" stroke-linecap="round"/><path d="M20.0 13.0 Q28.9 5.8 36.9 13.8" fill="none" stroke="#2c4430" stroke-width="3.3" stroke-linecap="round"/><path d="M20.0 13.0 Q27.6 8.0 34.4 17.1" fill="none" stroke="#648660" stroke-width="3.0" stroke-linecap="round"/><path d="M20.0 13.0 Q27.2 9.6 33.6 20.8" fill="none" stroke="#22352a" stroke-width="2.8" stroke-linecap="round"/><path d="M20.0 13.0 Q26.4 11.5 32.1 24.4" fill="none" stroke="#648660" stroke-width="2.5" stroke-linecap="round"/><path d="M20.0 13.0 Q25.5 13.5 30.2 27.5" fill="none" stroke="#283e2c" stroke-width="2.2" stroke-linecap="round"/><path d="M20.0 13.0 Q26.8 7.8 32.0 16.0" fill="none" stroke="#9ab08e" stroke-width="1.2" stroke-linecap="round"/><path d="M20.0 13.0 L16.5 5.5" stroke="#2c4430" stroke-width="3.3" stroke-linecap="round"/><path d="M20.0 13.0 L20.0 4.8" stroke="#283e2c" stroke-width="3.3" stroke-linecap="round"/><path d="M20.0 13.0 L23.5 5.5" stroke="#2c4430" stroke-width="3.3" stroke-linecap="round"/><path d="M85.1 17 L84.6 63 L87.4 63 L86.9 17 Z" fill="#c9cdc8"/><path d="M85.1 17 L84.6 63 L85.6 63 L85.7 17 Z" fill="#8a948a"/><path d="M86.0 15.0 Q77.7 8.2 70.2 15.8" fill="none" stroke="#2c4430" stroke-width="3.1" stroke-linecap="round"/><path d="M86.0 15.0 Q78.8 10.2 72.2 18.9" fill="none" stroke="#587a54" stroke-width="2.8" stroke-linecap="round"/><path d="M86.0 15.0 Q79.3 11.9 73.3 22.3" fill="none" stroke="#2c4430" stroke-width="2.6" stroke-linecap="round"/><path d="M86.0 15.0 Q80.1 13.7 75.0 25.4" fill="none" stroke="#648660" stroke-width="2.3" stroke-linecap="round"/><path d="M86.0 15.0 Q81.1 15.4 76.8 28.1" fill="none" stroke="#283e2c" stroke-width="2.1" stroke-linecap="round"/><path d="M86.0 15.0 Q79.7 10.1 74.8 17.8" fill="none" stroke="#9ab08e" stroke-width="1.1" stroke-linecap="round"/><path d="M86.0 15.0 Q94.0 8.4 101.3 15.7" fill="none" stroke="#283e2c" stroke-width="3.1" stroke-linecap="round"/><path d="M86.0 15.0 Q93.2 10.2 99.8 18.9" fill="none" stroke="#4a6c4a" stroke-width="2.8" stroke-linecap="round"/><path d="M86.0 15.0 Q92.8 11.8 98.9 22.4" fill="none" stroke="#22352a" stroke-width="2.6" stroke-linecap="round"/><path d="M86.0 15.0 Q92.1 13.6 97.4 25.8" fill="none" stroke="#648660" stroke-width="2.3" stroke-linecap="round"/><path d="M86.0 15.0 Q91.2 15.4 95.7 28.9" fill="none" stroke="#283e2c" stroke-width="2.1" stroke-linecap="round"/><path d="M86.0 15.0 Q92.3 10.1 97.2 17.8" fill="none" stroke="#b4c4a8" stroke-width="1.1" stroke-linecap="round"/><path d="M86.0 15.0 L82.7 8.0" stroke="#283e2c" stroke-width="3.1" stroke-linecap="round"/><path d="M86.0 15.0 L86.0 7.3" stroke="#22352a" stroke-width="3.1" stroke-linecap="round"/><path d="M86.0 15.0 L89.3 8.0" stroke="#22352a" stroke-width="3.1" stroke-linecap="round"/><path d="M110.9 12 L110.4 63 L113.6 63 L113.1 12 Z" fill="#c9cdc8"/><path d="M110.9 12 L110.4 63 L111.4 63 L111.5 12 Z" fill="#8a948a"/><path d="M112.0 10.0 Q103.4 3.0 95.6 10.8" fill="none" stroke="#2c4430" stroke-width="3.3" stroke-linecap="round"/><path d="M112.0 10.0 Q103.8 4.6 96.4 14.4" fill="none" stroke="#4a6c4a" stroke-width="3.0" stroke-linecap="round"/><path d="M112.0 10.0 Q104.7 6.6 98.3 17.9" fill="none" stroke="#283e2c" stroke-width="2.8" stroke-linecap="round"/><path d="M112.0 10.0 Q105.8 8.6 100.3 21.0" fill="none" stroke="#4a6c4a" stroke-width="2.5" stroke-linecap="round"/><path d="M112.0 10.0 Q106.6 10.5 101.9 24.4" fill="none" stroke="#2c4430" stroke-width="2.2" stroke-linecap="round"/><path d="M112.0 10.0 Q105.2 4.8 100.0 13.0" fill="none" stroke="#b4c4a8" stroke-width="1.2" stroke-linecap="round"/><path d="M112.0 10.0 Q120.7 2.9 128.6 10.8" fill="none" stroke="#2c4430" stroke-width="3.3" stroke-linecap="round"/><path d="M112.0 10.0 Q120.2 4.6 127.6 14.4" fill="none" stroke="#4a6c4a" stroke-width="3.0" stroke-linecap="round"/><path d="M112.0 10.0 Q119.1 6.7 125.4 17.7" fill="none" stroke="#283e2c" stroke-width="2.8" stroke-linecap="round"/><path d="M112.0 10.0 Q118.1 8.6 123.4 20.8" fill="none" stroke="#648660" stroke-width="2.5" stroke-linecap="round"/><path d="M112.0 10.0 Q117.3 10.5 121.9 24.2" fill="none" stroke="#22352a" stroke-width="2.2" stroke-linecap="round"/><path d="M112.0 10.0 Q118.8 4.8 124.0 13.0" fill="none" stroke="#9ab08e" stroke-width="1.2" stroke-linecap="round"/><path d="M112.0 10.0 L108.5 2.5" stroke="#2c4430" stroke-width="3.3" stroke-linecap="round"/><path d="M112.0 10.0 L112.0 1.8" stroke="#22352a" stroke-width="3.3" stroke-linecap="round"/><path d="M112.0 10.0 L115.5 2.5" stroke="#283e2c" stroke-width="3.3" stroke-linecap="round"/><path d="M175.3 21 L174.8 63 L177.2 63 L176.7 21 Z" fill="#c9cdc8"/><path d="M175.3 21 L174.8 63 L175.8 63 L175.9 21 Z" fill="#8a948a"/><path d="M176.0 19.0 Q169.7 13.8 163.9 19.6" fill="none" stroke="#22352a" stroke-width="2.4" stroke-linecap="round"/><path d="M176.0 19.0 Q170.3 15.3 165.2 22.1" fill="none" stroke="#4a6c4a" stroke-width="2.2" stroke-linecap="round"/><path d="M176.0 19.0 Q171.0 16.6 166.5 24.5" fill="none" stroke="#22352a" stroke-width="2.0" stroke-linecap="round"/><path d="M176.0 19.0 Q171.3 18.0 167.3 27.3" fill="none" stroke="#648660" stroke-width="1.8" stroke-linecap="round"/><path d="M176.0 19.0 Q171.9 19.4 168.3 30.0" fill="none" stroke="#283e2c" stroke-width="1.6" stroke-linecap="round"/><path d="M176.0 19.0 Q171.1 15.2 167.2 21.2" fill="none" stroke="#86a07a" stroke-width="0.8" stroke-linecap="round"/><path d="M176.0 19.0 Q182.2 13.9 187.8 19.6" fill="none" stroke="#22352a" stroke-width="2.4" stroke-linecap="round"/><path d="M176.0 19.0 Q182.0 15.0 187.4 22.2" fill="none" stroke="#587a54" stroke-width="2.2" stroke-linecap="round"/><path d="M176.0 19.0 Q181.0 16.7 185.5 24.5" fill="none" stroke="#2c4430" stroke-width="2.0" stroke-linecap="round"/><path d="M176.0 19.0 Q180.7 17.9 184.8 27.3" fill="none" stroke="#648660" stroke-width="1.8" stroke-linecap="round"/><path d="M176.0 19.0 Q180.0 19.3 183.5 29.7" fill="none" stroke="#2c4430" stroke-width="1.6" stroke-linecap="round"/><path d="M176.0 19.0 Q180.9 15.2 184.8 21.2" fill="none" stroke="#b4c4a8" stroke-width="0.8" stroke-linecap="round"/><path d="M176.0 19.0 L173.4 13.5" stroke="#2c4430" stroke-width="2.4" stroke-linecap="round"/><path d="M176.0 19.0 L176.0 12.9" stroke="#2c4430" stroke-width="2.4" stroke-linecap="round"/><path d="M176.0 19.0 L178.6 13.5" stroke="#283e2c" stroke-width="2.4" stroke-linecap="round"/><path d="M198.0 15 L197.5 63 L200.5 63 L200.0 15 Z" fill="#c9cdc8"/><path d="M198.0 15 L197.5 63 L198.5 63 L198.6 15 Z" fill="#8a948a"/><path d="M199.0 13.0 Q190.9 6.4 183.5 13.7" fill="none" stroke="#22352a" stroke-width="3.1" stroke-linecap="round"/><path d="M199.0 13.0 Q191.7 8.2 185.1 17.0" fill="none" stroke="#4a6c4a" stroke-width="2.8" stroke-linecap="round"/><path d="M199.0 13.0 Q192.4 9.9 186.6 20.1" fill="none" stroke="#22352a" stroke-width="2.6" stroke-linecap="round"/><path d="M199.0 13.0 Q192.9 11.6 187.5 23.9" fill="none" stroke="#587a54" stroke-width="2.3" stroke-linecap="round"/><path d="M199.0 13.0 Q193.6 13.5 189.0 27.3" fill="none" stroke="#283e2c" stroke-width="2.1" stroke-linecap="round"/><path d="M199.0 13.0 Q192.7 8.1 187.8 15.8" fill="none" stroke="#b4c4a8" stroke-width="1.1" stroke-linecap="round"/><path d="M199.0 13.0 Q207.3 6.2 214.9 13.8" fill="none" stroke="#22352a" stroke-width="3.1" stroke-linecap="round"/><path d="M199.0 13.0 Q206.5 8.1 213.2 17.0" fill="none" stroke="#4a6c4a" stroke-width="2.8" stroke-linecap="round"/><path d="M199.0 13.0 Q205.9 9.8 212.0 20.5" fill="none" stroke="#2c4430" stroke-width="2.6" stroke-linecap="round"/><path d="M199.0 13.0 Q205.1 11.6 210.5 23.8" fill="none" stroke="#587a54" stroke-width="2.3" stroke-linecap="round"/><path d="M199.0 13.0 Q204.3 13.5 208.8 27.1" fill="none" stroke="#283e2c" stroke-width="2.1" stroke-linecap="round"/><path d="M199.0 13.0 Q205.3 8.1 210.2 15.8" fill="none" stroke="#b4c4a8" stroke-width="1.1" stroke-linecap="round"/><path d="M199.0 13.0 L195.7 6.0" stroke="#283e2c" stroke-width="3.1" stroke-linecap="round"/><path d="M199.0 13.0 L199.0 5.3" stroke="#22352a" stroke-width="3.1" stroke-linecap="round"/><path d="M199.0 13.0 L202.3 6.0" stroke="#2c4430" stroke-width="3.1" stroke-linecap="round"/><path d="M237.0 20 L236.5 63 L239.5 63 L239.0 20 Z" fill="#c9cdc8"/><path d="M237.0 20 L236.5 63 L237.5 63 L237.6 20 Z" fill="#8a948a"/><path d="M238.0 18.0 Q230.2 11.6 223.1 18.7" fill="none" stroke="#2c4430" stroke-width="3.1" stroke-linecap="round"/><path d="M238.0 18.0 Q230.9 13.3 224.5 21.8" fill="none" stroke="#648660" stroke-width="2.8" stroke-linecap="round"/><path d="M238.0 18.0 Q231.6 15.0 225.9 24.9" fill="none" stroke="#283e2c" stroke-width="2.6" stroke-linecap="round"/><path d="M238.0 18.0 Q231.8 16.6 226.5 28.9" fill="none" stroke="#587a54" stroke-width="2.3" stroke-linecap="round"/><path d="M238.0 18.0 Q232.8 18.4 228.4 31.7" fill="none" stroke="#22352a" stroke-width="2.1" stroke-linecap="round"/><path d="M238.0 18.0 Q231.7 13.1 226.8 20.8" fill="none" stroke="#9ab08e" stroke-width="1.1" stroke-linecap="round"/><path d="M238.0 18.0 Q246.1 11.3 253.5 18.7" fill="none" stroke="#22352a" stroke-width="3.1" stroke-linecap="round"/><path d="M238.0 18.0 Q245.0 13.4 251.3 21.8" fill="none" stroke="#4a6c4a" stroke-width="2.8" stroke-linecap="round"/><path d="M238.0 18.0 Q244.8 14.8 250.9 25.4" fill="none" stroke="#22352a" stroke-width="2.6" stroke-linecap="round"/><path d="M238.0 18.0 Q243.8 16.7 248.9 28.3" fill="none" stroke="#648660" stroke-width="2.3" stroke-linecap="round"/><path d="M238.0 18.0 Q243.3 18.5 247.8 32.0" fill="none" stroke="#22352a" stroke-width="2.1" stroke-linecap="round"/><path d="M238.0 18.0 Q244.3 13.1 249.2 20.8" fill="none" stroke="#b4c4a8" stroke-width="1.1" stroke-linecap="round"/><path d="M238.0 18.0 L234.7 11.0" stroke="#283e2c" stroke-width="3.1" stroke-linecap="round"/><path d="M238.0 18.0 L238.0 10.3" stroke="#2c4430" stroke-width="3.1" stroke-linecap="round"/><path d="M238.0 18.0 L241.3 11.0" stroke="#22352a" stroke-width="3.1" stroke-linecap="round"/><circle cx="244.6" cy="61.1" r="2.4" fill="#2c4430"/><circle cx="4.9" cy="58.3" r="1.5" fill="#587a54"/><circle cx="23.3" cy="62.8" r="1.5" fill="#648660"/><circle cx="105.8" cy="60.5" r="2.5" fill="#2c4430"/><circle cx="80.9" cy="59.8" r="2.0" fill="#587a54"/><circle cx="170.8" cy="57.5" r="1.3" fill="#283e2c"/><circle cx="27.1" cy="59.8" r="1.8" fill="#2c4430"/><circle cx="167.4" cy="57.1" r="1.7" fill="#648660"/><circle cx="121.7" cy="59.1" r="1.4" fill="#22352a"/><circle cx="219.2" cy="62.9" r="2.2" fill="#4a6c4a"/><circle cx="38.9" cy="61.4" r="2.5" fill="#648660"/><circle cx="76.3" cy="59.4" r="1.7" fill="#587a54"/><circle cx="22.3" cy="58.3" r="1.7" fill="#2c4430"/><circle cx="84.3" cy="63.6" r="2.0" fill="#648660"/><circle cx="163.9" cy="60.1" r="1.7" fill="#2c4430"/><circle cx="36.1" cy="57.7" r="2.1" fill="#648660"/><circle cx="45.9" cy="58.4" r="1.3" fill="#587a54"/><circle cx="151.7" cy="57.6" r="1.5" fill="#283e2c"/><circle cx="252.8" cy="60.0" r="2.3" fill="#283e2c"/><circle cx="235.7" cy="60.0" r="1.9" fill="#587a54"/><circle cx="52.6" cy="58.0" r="2.2" fill="#587a54"/><circle cx="84.8" cy="59.9" r="1.2" fill="#4a6c4a"/><circle cx="157.0" cy="59.2" r="2.3" fill="#22352a"/><circle cx="169.0" cy="61.3" r="1.2" fill="#283e2c"/><circle cx="48.3" cy="59.1" r="1.8" fill="#648660"/><circle cx="96.7" cy="60.6" r="2.3" fill="#2c4430"/><circle cx="156.5" cy="58.1" r="2.3" fill="#2c4430"/><circle cx="140.4" cy="59.5" r="1.9" fill="#283e2c"/><circle cx="147.0" cy="58.4" r="2.5" fill="#648660"/><circle cx="180.9" cy="63.6" r="2.0" fill="#22352a"/><circle cx="160.5" cy="58.4" r="1.3" fill="#22352a"/><circle cx="122.3" cy="59.9" r="1.7" fill="#2c4430"/><circle cx="237.8" cy="59.5" r="1.8" fill="#2c4430"/><circle cx="115.8" cy="62.1" r="1.5" fill="#4a6c4a"/><circle cx="139.1" cy="60.9" r="2.0" fill="#2c4430"/><circle cx="43.1" cy="62.2" r="2.5" fill="#283e2c"/><circle cx="154.0" cy="57.9" r="2.4" fill="#2c4430"/><circle cx="175.4" cy="59.5" r="2.3" fill="#283e2c"/><circle cx="212.7" cy="58.3" r="2.0" fill="#2c4430"/><circle cx="116.3" cy="59.8" r="2.3" fill="#587a54"/><circle cx="35.4" cy="62.3" r="2.4" fill="#4a6c4a"/><circle cx="157.5" cy="61.5" r="2.3" fill="#283e2c"/><circle cx="51.1" cy="60.3" r="1.4" fill="#4a6c4a"/><circle cx="30.3" cy="59.8" r="1.7" fill="#283e2c"/><circle cx="67.5" cy="61.0" r="1.7" fill="#587a54"/><circle cx="200.7" cy="62.1" r="2.3" fill="#4a6c4a"/><circle cx="245.6" cy="61.2" r="1.9" fill="#4a6c4a"/><circle cx="229.6" cy="63.4" r="2.0" fill="#4a6c4a"/><circle cx="192.4" cy="60.4" r="2.6" fill="#648660"/><circle cx="104.7" cy="60.0" r="2.0" fill="#648660"/><circle cx="84.6" cy="60.6" r="1.8" fill="#22352a"/><circle cx="82.1" cy="57.4" r="2.2" fill="#4a6c4a"/><circle cx="187.4" cy="61.2" r="2.3" fill="#2c4430"/><circle cx="225.9" cy="63.1" r="1.5" fill="#587a54"/><circle cx="62.0" cy="63.1" r="2.6" fill="#587a54"/><circle cx="177.9" cy="60.7" r="1.5" fill="#2c4430"/><circle cx="168.2" cy="63.6" r="2.4" fill="#648660"/><circle cx="247.4" cy="61.7" r="2.4" fill="#4a6c4a"/><circle cx="144.4" cy="58.1" r="2.1" fill="#4a6c4a"/><circle cx="145.1" cy="63.3" r="1.3" fill="#283e2c"/><circle cx="31.7" cy="60.8" r="2.5" fill="#22352a"/><circle cx="75.8" cy="62.1" r="1.2" fill="#283e2c"/><circle cx="16.0" cy="63.3" r="2.3" fill="#4a6c4a"/><circle cx="36.2" cy="61.8" r="1.5" fill="#2c4430"/><circle cx="8.0" cy="63.3" r="1.6" fill="#587a54"/><circle cx="36.7" cy="62.4" r="2.3" fill="#22352a"/><circle cx="51.9" cy="63.0" r="2.2" fill="#22352a"/><circle cx="50.0" cy="62.9" r="1.7" fill="#587a54"/><circle cx="4.1" cy="61.4" r="2.2" fill="#648660"/><circle cx="51.7" cy="61.4" r="1.5" fill="#22352a"/><circle cx="166.4" cy="59.1" r="2.3" fill="#2c4430"/><circle cx="222.6" cy="62.0" r="1.4" fill="#648660"/><circle cx="245.0" cy="62.5" r="1.8" fill="#283e2c"/><circle cx="57.1" cy="59.2" r="2.2" fill="#22352a"/><circle cx="68.9" cy="62.0" r="1.9" fill="#2c4430"/><circle cx="202.4" cy="59.6" r="2.1" fill="#2c4430"/><circle cx="151.0" cy="58.6" r="1.6" fill="#283e2c"/><circle cx="170.8" cy="58.9" r="2.1" fill="#2c4430"/><circle cx="118.5" cy="57.5" r="2.5" fill="#2c4430"/><circle cx="135.9" cy="57.3" r="2.0" fill="#2c4430"/><circle cx="137.5" cy="60.0" r="2.0" fill="#283e2c"/><circle cx="73.0" cy="62.3" r="1.5" fill="#2c4430"/><circle cx="188.0" cy="57.2" r="2.3" fill="#283e2c"/><circle cx="252.9" cy="57.2" r="1.8" fill="#4a6c4a"/><circle cx="98.5" cy="63.5" r="1.9" fill="#283e2c"/><circle cx="16.4" cy="62.4" r="2.5" fill="#283e2c"/><circle cx="168.5" cy="62.5" r="1.9" fill="#648660"/><circle cx="211.7" cy="61.4" r="2.6" fill="#648660"/><circle cx="243.6" cy="58.2" r="2.3" fill="#283e2c"/><circle cx="28.7" cy="60.0" r="2.1" fill="#648660"/><circle cx="197.9" cy="62.5" r="2.3" fill="#22352a"/><circle cx="66.5" cy="60.8" r="2.4" fill="#4a6c4a"/><circle cx="127.7" cy="57.2" r="2.0" fill="#648660"/><circle cx="13.4" cy="60.1" r="2.4" fill="#283e2c"/><circle cx="38.9" cy="57.1" r="1.9" fill="#4a6c4a"/><circle cx="129.0" cy="62.1" r="2.4" fill="#22352a"/><circle cx="18.6" cy="63.4" r="2.0" fill="#648660"/><circle cx="148.3" cy="62.1" r="2.1" fill="#22352a"/><circle cx="79.6" cy="57.3" r="1.6" fill="#4a6c4a"/><circle cx="189.0" cy="62.5" r="2.3" fill="#587a54"/><circle cx="22.7" cy="62.7" r="1.4" fill="#2c4430"/><circle cx="63.5" cy="60.5" r="2.1" fill="#4a6c4a"/><circle cx="201.4" cy="57.4" r="1.8" fill="#283e2c"/><circle cx="178.9" cy="61.9" r="2.5" fill="#283e2c"/><circle cx="125.3" cy="62.3" r="2.6" fill="#283e2c"/><circle cx="190.6" cy="60.7" r="2.6" fill="#22352a"/><circle cx="61.6" cy="63.2" r="1.4" fill="#4a6c4a"/><circle cx="142.4" cy="60.3" r="2.5" fill="#22352a"/><circle cx="174.0" cy="62.0" r="2.6" fill="#4a6c4a"/><circle cx="58.8" cy="58.8" r="2.0" fill="#22352a"/></g></svg><div class="t" style="left:261.00px;top:28.35px;font-size:29px;line-height:29px;font-weight:700;font-style:italic;color:#5b9bc7;letter-spacing:0.50px;transform:scaleX(1.0828);transform-origin:0 0;-webkit-text-stroke:0.6px #5b9bc7;">Areca Technology Corporation</div><div class="r" style="left:0px;top:63px;width:259px;height:435px;background:#f0f7fa;"></div><div class="r" style="left:0px;top:63px;width:245px;height:25px;background:#d9eafa;"></div><div class="r" style="left:257px;top:63px;width:2px;height:435px;background:#ffffff;"></div><div class="t" style="left:4.00px;top:67.90px;font-size:16px;line-height:16px;font-weight:400;font-style:normal;color:#3a3a4a;letter-spacing:0.50px;transform:scaleX(1.0754);transform-origin:0 0;">|open all|close all|</div><div class="t" style="left:17.70px;top:105.85px;font-size:13px;line-height:13px;font-weight:400;font-style:normal;color:#6e6e6e;letter-spacing:0.50px;transform:scaleX(1.0279);transform-origin:0 0;-webkit-text-stroke:0.08px #6e6e6e;">Base Switch Console</div><div class="t" style="left:36.70px;top:124.25px;font-size:13px;line-height:13px;font-weight:400;font-style:normal;color:#303030;letter-spacing:0.50px;transform:scaleX(1.0506);transform-origin:0 0;-webkit-text-stroke:0.08px #303030;">System Controls</div><div class="r" style="left:53px;top:141px;width:144px;height:17px;background:#c3d3ea;"></div><svg class="r" style="left:2px;top:104px" width="13" height="17" viewBox="0 0 13 17"><defs><linearGradient id="scr" x1="0" y1="0" x2="0" y2="1"><stop offset="0" stop-color="#9ae2ff"/><stop offset="1" stop-color="#1e9af0"/></linearGradient></defs><path d="M1.8 1.2 L10.5 0.5 L10.8 11 L2.5 11.8 Z" fill="url(#scr)" stroke="#b8c4d8" stroke-width="0.6"/><path d="M10.5 0.5 L12.3 1.8 L12.3 11 L10.8 11 Z" fill="#6a5aa8"/><ellipse cx="4.5" cy="13.6" rx="3.6" ry="2.6" fill="#e6e8ee" stroke="#9aa0b4" stroke-width="0.7"/><path d="M6.5 9.5 L11.5 9.8 L12 14.5 L8.5 16.3 L6.8 14 Z" fill="#3a58b0" stroke="#5a4a90" stroke-width="0.5"/></svg><div class="r" style="left:6px;top:121px;width:1px;height:207px;background:repeating-linear-gradient(#8a8a8a 0 1px,transparent 1px 3px)"></div><svg class="r" style="left:2px;top:127px" width="9" height="9" viewBox="0 0 9 9"><rect x="0.5" y="0.5" width="8" height="8" fill="#fff" stroke="#8a8a8a" stroke-width="1"/><path d="M2 4.5 H7" stroke="#000" stroke-width="1"/></svg><div class="r" style="left:11px;top:131px;width:6px;height:1px;background:repeating-linear-gradient(90deg,#8a8a8a 0 1px,transparent 1px 3px)"></div><svg class="r" style="left:17px;top:126px" width="16" height="13" viewBox="0 0 16 13"><path d="M1.5 2 Q1.5 0.7 3 0.7 H6 L7.3 2 H12.5 Q13 2 13 2.5 V11.8 H1.5 Z" fill="#faf3a8" stroke="#e0862a" stroke-width="1.1"/><path d="M0.8 5.6 H11.8 L14.2 11.8 H2.2 Z" fill="#f8e08a" stroke="#e0862a" stroke-width="1.1"/><path d="M2.5 9.5 H13 L13.8 11.3 H3 Z" fill="#f6d27a"/></svg><div class="r" style="left:24px;top:138px;width:1px;height:178px;background:repeating-linear-gradient(#8a8a8a 0 1px,transparent 1px 3px)"></div><div class="r" style="left:25px;top:149px;width:10px;height:1px;background:repeating-linear-gradient(90deg,#8a8a8a 0 1px,transparent 1px 3px)"></div><svg class="r" style="left:35px;top:143px" width="13" height="14" viewBox="0 0 13 14"><defs><linearGradient id="pg" x1="0" y1="0" x2="1" y2="1"><stop offset="0" stop-color="#ffffff"/><stop offset="0.5" stop-color="#eef4fd"/><stop offset="1" stop-color="#a9c8f0"/></linearGradient></defs><path d="M2 13.5 H11.5 V5" fill="none" stroke="#c4c8d4" stroke-width="1"/><path d="M0.7 0.7 H7.2 L10.4 3.9 V12.4 H0.7 Z" fill="url(#pg)" stroke="#646eae" stroke-width="1.3"/><path d="M7.2 0.7 V3.9 H10.4" fill="#7fa8e8" stroke="#646eae" stroke-width="1"/></svg><div class="r" style="left:25px;top:167px;width:10px;height:1px;background:repeating-linear-gradient(90deg,#8a8a8a 0 1px,transparent 1px 3px)"></div><svg class="r" style="left:35px;top:161px" width="13" height="14" viewBox="0 0 13 14"><defs><linearGradient id="pg" x1="0" y1="0" x2="1" y2="1"><stop offset="0" stop-color="#ffffff"/><stop offset="0.5" stop-color="#eef4fd"/><stop offset="1" stop-color="#a9c8f0"/></linearGradient></defs><path d="M2 13.5 H11.5 V5" fill="none" stroke="#c4c8d4" stroke-width="1"/><path d="M0.7 0.7 H7.2 L10.4 3.9 V12.4 H0.7 Z" fill="url(#pg)" stroke="#646eae" stroke-width="1.3"/><path d="M7.2 0.7 V3.9 H10.4" fill="#7fa8e8" stroke="#646eae" stroke-width="1"/></svg><div class="r" style="left:25px;top:186px;width:10px;height:1px;background:repeating-linear-gradient(90deg,#8a8a8a 0 1px,transparent 1px 3px)"></div><svg class="r" style="left:35px;top:180px" width="13" height="14" viewBox="0 0 13 14"><defs><linearGradient id="pg" x1="0" y1="0" x2="1" y2="1"><stop offset="0" stop-color="#ffffff"/><stop offset="0.5" stop-color="#eef4fd"/><stop offset="1" stop-color="#a9c8f0"/></linearGradient></defs><path d="M2 13.5 H11.5 V5" fill="none" stroke="#c4c8d4" stroke-width="1"/><path d="M0.7 0.7 H7.2 L10.4 3.9 V12.4 H0.7 Z" fill="url(#pg)" stroke="#646eae" stroke-width="1.3"/><path d="M7.2 0.7 V3.9 H10.4" fill="#7fa8e8" stroke="#646eae" stroke-width="1"/></svg><div class="r" style="left:25px;top:204px;width:10px;height:1px;background:repeating-linear-gradient(90deg,#8a8a8a 0 1px,transparent 1px 3px)"></div><svg class="r" style="left:35px;top:198px" width="13" height="14" viewBox="0 0 13 14"><defs><linearGradient id="pg" x1="0" y1="0" x2="1" y2="1"><stop offset="0" stop-color="#ffffff"/><stop offset="0.5" stop-color="#eef4fd"/><stop offset="1" stop-color="#a9c8f0"/></linearGradient></defs><path d="M2 13.5 H11.5 V5" fill="none" stroke="#c4c8d4" stroke-width="1"/><path d="M0.7 0.7 H7.2 L10.4 3.9 V12.4 H0.7 Z" fill="url(#pg)" stroke="#646eae" stroke-width="1.3"/><path d="M7.2 0.7 V3.9 H10.4" fill="#7fa8e8" stroke="#646eae" stroke-width="1"/></svg><div class="r" style="left:25px;top:223px;width:10px;height:1px;background:repeating-linear-gradient(90deg,#8a8a8a 0 1px,transparent 1px 3px)"></div><svg class="r" style="left:35px;top:217px" width="13" height="14" viewBox="0 0 13 14"><defs><linearGradient id="pg" x1="0" y1="0" x2="1" y2="1"><stop offset="0" stop-color="#ffffff"/><stop offset="0.5" stop-color="#eef4fd"/><stop offset="1" stop-color="#a9c8f0"/></linearGradient></defs><path d="M2 13.5 H11.5 V5" fill="none" stroke="#c4c8d4" stroke-width="1"/><path d="M0.7 0.7 H7.2 L10.4 3.9 V12.4 H0.7 Z" fill="url(#pg)" stroke="#646eae" stroke-width="1.3"/><path d="M7.2 0.7 V3.9 H10.4" fill="#7fa8e8" stroke="#646eae" stroke-width="1"/></svg><div class="r" style="left:25px;top:241px;width:10px;height:1px;background:repeating-linear-gradient(90deg,#8a8a8a 0 1px,transparent 1px 3px)"></div><svg class="r" style="left:35px;top:235px" width="13" height="14" viewBox="0 0 13 14"><defs><linearGradient id="pg" x1="0" y1="0" x2="1" y2="1"><stop offset="0" stop-color="#ffffff"/><stop offset="0.5" stop-color="#eef4fd"/><stop offset="1" stop-color="#a9c8f0"/></linearGradient></defs><path d="M2 13.5 H11.5 V5" fill="none" stroke="#c4c8d4" stroke-width="1"/><path d="M0.7 0.7 H7.2 L10.4 3.9 V12.4 H0.7 Z" fill="url(#pg)" stroke="#646eae" stroke-width="1.3"/><path d="M7.2 0.7 V3.9 H10.4" fill="#7fa8e8" stroke="#646eae" stroke-width="1"/></svg><div class="r" style="left:25px;top:259px;width:10px;height:1px;background:repeating-linear-gradient(90deg,#8a8a8a 0 1px,transparent 1px 3px)"></div><svg class="r" style="left:35px;top:253px" width="13" height="14" viewBox="0 0 13 14"><defs><linearGradient id="pg" x1="0" y1="0" x2="1" y2="1"><stop offset="0" stop-color="#ffffff"/><stop offset="0.5" stop-color="#eef4fd"/><stop offset="1" stop-color="#a9c8f0"/></linearGradient></defs><path d="M2 13.5 H11.5 V5" fill="none" stroke="#c4c8d4" stroke-width="1"/><path d="M0.7 0.7 H7.2 L10.4 3.9 V12.4 H0.7 Z" fill="url(#pg)" stroke="#646eae" stroke-width="1.3"/><path d="M7.2 0.7 V3.9 H10.4" fill="#7fa8e8" stroke="#646eae" stroke-width="1"/></svg><div class="r" style="left:25px;top:278px;width:10px;height:1px;background:repeating-linear-gradient(90deg,#8a8a8a 0 1px,transparent 1px 3px)"></div><svg class="r" style="left:35px;top:272px" width="13" height="14" viewBox="0 0 13 14"><defs><linearGradient id="pg" x1="0" y1="0" x2="1" y2="1"><stop offset="0" stop-color="#ffffff"/><stop offset="0.5" stop-color="#eef4fd"/><stop offset="1" stop-color="#a9c8f0"/></linearGradient></defs><path d="M2 13.5 H11.5 V5" fill="none" stroke="#c4c8d4" stroke-width="1"/><path d="M0.7 0.7 H7.2 L10.4 3.9 V12.4 H0.7 Z" fill="url(#pg)" stroke="#646eae" stroke-width="1.3"/><path d="M7.2 0.7 V3.9 H10.4" fill="#7fa8e8" stroke="#646eae" stroke-width="1"/></svg><div class="r" style="left:25px;top:296px;width:10px;height:1px;background:repeating-linear-gradient(90deg,#8a8a8a 0 1px,transparent 1px 3px)"></div><svg class="r" style="left:35px;top:290px" width="13" height="14" viewBox="0 0 13 14"><defs><linearGradient id="pg" x1="0" y1="0" x2="1" y2="1"><stop offset="0" stop-color="#ffffff"/><stop offset="0.5" stop-color="#eef4fd"/><stop offset="1" stop-color="#a9c8f0"/></linearGradient></defs><path d="M2 13.5 H11.5 V5" fill="none" stroke="#c4c8d4" stroke-width="1"/><path d="M0.7 0.7 H7.2 L10.4 3.9 V12.4 H0.7 Z" fill="url(#pg)" stroke="#646eae" stroke-width="1.3"/><path d="M7.2 0.7 V3.9 H10.4" fill="#7fa8e8" stroke="#646eae" stroke-width="1"/></svg><div class="r" style="left:25px;top:315px;width:10px;height:1px;background:repeating-linear-gradient(90deg,#8a8a8a 0 1px,transparent 1px 3px)"></div><svg class="r" style="left:35px;top:309px" width="13" height="14" viewBox="0 0 13 14"><defs><linearGradient id="pg" x1="0" y1="0" x2="1" y2="1"><stop offset="0" stop-color="#ffffff"/><stop offset="0.5" stop-color="#eef4fd"/><stop offset="1" stop-color="#a9c8f0"/></linearGradient></defs><path d="M2 13.5 H11.5 V5" fill="none" stroke="#c4c8d4" stroke-width="1"/><path d="M0.7 0.7 H7.2 L10.4 3.9 V12.4 H0.7 Z" fill="url(#pg)" stroke="#646eae" stroke-width="1.3"/><path d="M7.2 0.7 V3.9 H10.4" fill="#7fa8e8" stroke="#646eae" stroke-width="1"/></svg><svg class="r" style="left:2px;top:330px" width="9" height="9" viewBox="0 0 9 9"><rect x="0.5" y="0.5" width="8" height="8" fill="#fff" stroke="#8a8a8a" stroke-width="1"/><path d="M2 4.5 H7" stroke="#000" stroke-width="1"/><path d="M4.5 2.5 V6.5" stroke="#000" stroke-width="1"/></svg><div class="r" style="left:11px;top:334px;width:6px;height:1px;background:repeating-linear-gradient(90deg,#8a8a8a 0 1px,transparent 1px 3px)"></div><svg class="r" style="left:17px;top:329px" width="16" height="13" viewBox="0 0 16 13"><path d="M1.5 2 Q1.5 0.7 3 0.7 H6 L7.3 2 H12.5 Q13 2 13 2.5 V11.8 H1.5 Z" fill="#faf3a8" stroke="#e0862a" stroke-width="1.1"/><path d="M0.8 5.6 H11.8 L14.2 11.8 H2.2 Z" fill="#f8e08a" stroke="#e0862a" stroke-width="1.1"/><path d="M2.5 9.5 H13 L13.8 11.3 H3 Z" fill="#f6d27a"/></svg><div class="t" style="left:54.60px;top:142.65px;font-size:13px;line-height:13px;font-weight:400;font-style:normal;color:#303030;letter-spacing:0.50px;transform:scaleX(1.0544);transform-origin:0 0;-webkit-text-stroke:0.08px #303030;">System Configuration</div><div class="t" style="left:54.60px;top:161.05px;font-size:13px;line-height:13px;font-weight:400;font-style:normal;color:#303030;letter-spacing:0.50px;transform:scaleX(1.0511);transform-origin:0 0;-webkit-text-stroke:0.08px #303030;">EtherNet Configuration</div><div class="t" style="left:54.60px;top:179.45px;font-size:13px;line-height:13px;font-weight:400;font-style:normal;color:#303030;letter-spacing:0.50px;transform:scaleX(1.0488);transform-origin:0 0;-webkit-text-stroke:0.08px #303030;">Alert By Mail Configuration</div><div class="t" style="left:54.60px;top:197.85px;font-size:13px;line-height:13px;font-weight:400;font-style:normal;color:#303030;letter-spacing:0.50px;transform:scaleX(1.0257);transform-origin:0 0;-webkit-text-stroke:0.08px #303030;">SNMP Configuration</div><div class="t" style="left:54.60px;top:216.25px;font-size:13px;line-height:13px;font-weight:400;font-style:normal;color:#303030;letter-spacing:0.50px;transform:scaleX(1.0289);transform-origin:0 0;-webkit-text-stroke:0.08px #303030;">NTP Configuration</div><div class="t" style="left:54.60px;top:234.65px;font-size:13px;line-height:13px;font-weight:400;font-style:normal;color:#303030;letter-spacing:0.50px;transform:scaleX(1.0480);transform-origin:0 0;-webkit-text-stroke:0.08px #303030;">View Events/Mute Beeper</div><div class="t" style="left:54.60px;top:253.05px;font-size:13px;line-height:13px;font-weight:400;font-style:normal;color:#303030;letter-spacing:0.50px;transform:scaleX(1.0429);transform-origin:0 0;-webkit-text-stroke:0.08px #303030;">Generate Test Event</div><div class="t" style="left:54.60px;top:271.45px;font-size:13px;line-height:13px;font-weight:400;font-style:normal;color:#303030;letter-spacing:0.50px;transform:scaleX(1.0486);transform-origin:0 0;-webkit-text-stroke:0.08px #303030;">Clear Event Buffer</div><div class="t" style="left:54.60px;top:289.85px;font-size:13px;line-height:13px;font-weight:400;font-style:normal;color:#303030;letter-spacing:0.50px;transform:scaleX(1.0249);transform-origin:0 0;-webkit-text-stroke:0.08px #303030;">Modify Password</div><div class="t" style="left:54.60px;top:308.25px;font-size:13px;line-height:13px;font-weight:400;font-style:normal;color:#303030;letter-spacing:0.50px;transform:scaleX(1.0468);transform-origin:0 0;-webkit-text-stroke:0.08px #303030;">Upgrade Firmware</div><div class="t" style="left:36.70px;top:326.65px;font-size:13px;line-height:13px;font-weight:400;font-style:normal;color:#303030;letter-spacing:0.50px;transform:scaleX(1.0978);transform-origin:0 0;-webkit-text-stroke:0.08px #303030;">Information</div><div class="r" style="left:259px;top:63px;width:3px;height:435px;background:#6b6b6b;"></div><div class="r" style="left:262px;top:87px;width:898px;height:411px;background:#b6dbee;"></div><svg class="r" style="left:262px;top:63px" width="898" height="24"><defs><pattern id="dp" x="0" y="1" width="4" height="4" patternUnits="userSpaceOnUse"><rect x="1" y="0" width="1" height="1" fill="#2f63c4"/><rect x="3" y="2" width="1" height="1" fill="#2f63c4"/><rect x="0" y="3" width="1" height="1" fill="#ffffff"/><rect x="2" y="1" width="1" height="1" fill="#ffffff"/></pattern></defs><rect x="0" y="0" width="899" height="24" fill="#a9d3fb"/><rect x="4" y="4" width="895" height="16" fill="url(#dp)"/><rect x="0" y="0" width="899" height="1" fill="#2a5fc2"/><rect x="0" y="23" width="899" height="1" fill="#2a5fc2"/><rect x="0" y="0" width="1" height="24" fill="#2a5fc2"/></svg><div class="r" style="left:262px;top:87px;width:898px;height:1px;background:#8a8f94;"></div><div class="r" style="left:263px;top:89px;width:897px;height:396px;background:none;border-left:1px solid #222;border-top:1px solid #222;border-bottom:1px solid #222;"></div><div class="r" style="left:265px;top:91px;width:895px;height:393px;background:#c4c4c4;"></div><div class="r" style="left:266px;top:92px;width:894px;height:21px;background:#dcdcdc;border-top:1px solid #fff;border-left:1px solid #fff;"></div><div class="r" style="left:266px;top:113px;width:894px;height:2px;background:#9c9c9c;"></div><div class="r" style="left:270px;top:103px;width:5px;height:5px;background:#111;"></div><div class="t" style="left:279.50px;top:96.95px;font-size:13px;line-height:13px;font-weight:700;font-style:normal;color:#1e1e1e;letter-spacing:0.50px;transform:scaleX(1.0906);transform-origin:0 0;">System Configurations</div><div class="r" style="left:265px;top:115px;width:895px;height:23px;background:#fffee0;border-left:1px solid #c4c4c4;"></div><div class="r" style="left:266px;top:138px;width:894px;height:1px;background:#b2b2b2;"></div><div class="r" style="left:844px;top:115px;width:1px;height:23px;background:#b8b8b8;"></div><div class="t" style="left:267.80px;top:121.97px;font-size:12.5px;line-height:12.5px;font-weight:400;font-style:normal;color:#525252;letter-spacing:0.50px;transform:scaleX(1.0916);transform-origin:0 0;-webkit-text-stroke:0.08px #525252;">System Beeper Setting</div><div class="r" style="left:847px;top:117px;width:72px;height:17px;background:#fcfcfc;border:1px solid #767676;"></div><div class="t" style="left:852.00px;top:119.95px;font-size:13px;line-height:13px;font-weight:400;font-style:normal;color:#000;letter-spacing:0.00px;">Enabled</div><svg class="r" style="left:905.5px;top:122.5px" width="10" height="7" viewBox="0 0 10 7"><path d="M1.2 1.2 L5 5 L8.8 1.2" fill="none" stroke="#000" stroke-width="2"/></svg><div class="r" style="left:265px;top:139px;width:895px;height:23px;background:#fffee0;border-left:1px solid #c4c4c4;"></div><div class="r" style="left:266px;top:162px;width:894px;height:1px;background:#b2b2b2;"></div><div class="r" style="left:844px;top:139px;width:1px;height:23px;background:#b8b8b8;"></div><div class="t" style="left:267.80px;top:145.97px;font-size:12.5px;line-height:12.5px;font-weight:400;font-style:normal;color:#525252;letter-spacing:0.50px;transform:scaleX(1.0417);transform-origin:0 0;-webkit-text-stroke:0.08px #525252;">PCIE Host Speed</div><div class="r" style="left:847px;top:141px;width:53px;height:17px;background:#fcfcfc;border:1px solid #767676;"></div><div class="t" style="left:852.00px;top:143.95px;font-size:13px;line-height:13px;font-weight:400;font-style:normal;color:#000;letter-spacing:0.00px;">Auto</div><svg class="r" style="left:886.5px;top:146.5px" width="10" height="7" viewBox="0 0 10 7"><path d="M1.2 1.2 L5 5 L8.8 1.2" fill="none" stroke="#000" stroke-width="2"/></svg><div class="r" style="left:265px;top:163px;width:895px;height:23px;background:#fffee0;border-left:1px solid #c4c4c4;"></div><div class="r" style="left:266px;top:186px;width:894px;height:1px;background:#b2b2b2;"></div><div class="r" style="left:844px;top:163px;width:1px;height:23px;background:#b8b8b8;"></div><div class="t" style="left:267.80px;top:169.97px;font-size:12.5px;line-height:12.5px;font-weight:400;font-style:normal;color:#525252;letter-spacing:0.50px;transform:scaleX(1.0268);transform-origin:0 0;-webkit-text-stroke:0.08px #525252;">PCIE Host ASPM</div><div class="r" style="left:847px;top:165px;width:72px;height:17px;background:#fcfcfc;border:1px solid #767676;"></div><div class="t" style="left:852.00px;top:167.95px;font-size:13px;line-height:13px;font-weight:400;font-style:normal;color:#000;letter-spacing:0.00px;">Enabled</div><svg class="r" style="left:905.5px;top:170.5px" width="10" height="7" viewBox="0 0 10 7"><path d="M1.2 1.2 L5 5 L8.8 1.2" fill="none" stroke="#000" stroke-width="2"/></svg><div class="r" style="left:265px;top:187px;width:895px;height:23px;background:#fffee0;border-left:1px solid #c4c4c4;"></div><div class="r" style="left:266px;top:210px;width:894px;height:1px;background:#b2b2b2;"></div><div class="r" style="left:844px;top:187px;width:1px;height:23px;background:#b8b8b8;"></div><div class="t" style="left:267.80px;top:193.97px;font-size:12.5px;line-height:12.5px;font-weight:400;font-style:normal;color:#525252;letter-spacing:0.50px;transform:scaleX(1.0270);transform-origin:0 0;-webkit-text-stroke:0.08px #525252;">PCIE Device ASPM</div><div class="r" style="left:847px;top:189px;width:72px;height:17px;background:#fcfcfc;border:1px solid #767676;"></div><div class="t" style="left:852.00px;top:191.95px;font-size:13px;line-height:13px;font-weight:400;font-style:normal;color:#000;letter-spacing:0.00px;">Enabled</div><svg class="r" style="left:905.5px;top:194.5px" width="10" height="7" viewBox="0 0 10 7"><path d="M1.2 1.2 L5 5 L8.8 1.2" fill="none" stroke="#000" stroke-width="2"/></svg><div class="r" style="left:265px;top:211px;width:895px;height:23px;background:#fffee0;border-left:1px solid #c4c4c4;"></div><div class="r" style="left:266px;top:234px;width:894px;height:1px;background:#b2b2b2;"></div><div class="r" style="left:844px;top:211px;width:1px;height:23px;background:#b8b8b8;"></div><div class="t" style="left:267.80px;top:217.97px;font-size:12.5px;line-height:12.5px;font-weight:400;font-style:normal;color:#525252;letter-spacing:0.50px;transform:scaleX(1.1175);transform-origin:0 0;-webkit-text-stroke:0.08px #525252;">Station#2 CNT#1 Width</div><div class="t" style="left:847.30px;top:216.38px;font-size:12.5px;line-height:12.5px;font-weight:400;font-style:normal;color:#575757;letter-spacing:0.50px;transform:scaleX(1.0937);transform-origin:0 0;">Quad1:</div><div class="r" style="left:900px;top:213px;width:86px;height:17px;background:#fcfcfc;border:1px solid #767676;"></div><div class="t" style="left:905.00px;top:215.95px;font-size:13px;line-height:13px;font-weight:400;font-style:normal;color:#000;letter-spacing:0.00px;">X4</div><svg class="r" style="left:972.5px;top:218.5px" width="10" height="7" viewBox="0 0 10 7"><path d="M1.2 1.2 L5 5 L8.8 1.2" fill="none" stroke="#000" stroke-width="2"/></svg><div class="t" style="left:992.50px;top:216.38px;font-size:12.5px;line-height:12.5px;font-weight:400;font-style:normal;color:#575757;letter-spacing:0.50px;transform:scaleX(1.0937);transform-origin:0 0;">Quad2:</div><div class="r" style="left:1046px;top:213px;width:86px;height:17px;background:#fcfcfc;border:1px solid #767676;"></div><div class="t" style="left:1051.00px;top:215.95px;font-size:13px;line-height:13px;font-weight:400;font-style:normal;color:#000;letter-spacing:0.00px;">X4</div><svg class="r" style="left:1118.5px;top:218.5px" width="10" height="7" viewBox="0 0 10 7"><path d="M1.2 1.2 L5 5 L8.8 1.2" fill="none" stroke="#000" stroke-width="2"/></svg><div class="r" style="left:848px;top:228px;width:52px;height:1px;background:#5a5a5a;"></div><div class="r" style="left:988px;top:228px;width:58px;height:1px;background:#5a5a5a;"></div><div class="r" style="left:265px;top:235px;width:895px;height:23px;background:#fffee0;border-left:1px solid #c4c4c4;"></div><div class="r" style="left:266px;top:258px;width:894px;height:1px;background:#b2b2b2;"></div><div class="r" style="left:844px;top:235px;width:1px;height:23px;background:#b8b8b8;"></div><div class="t" style="left:267.80px;top:241.97px;font-size:12.5px;line-height:12.5px;font-weight:400;font-style:normal;color:#525252;letter-spacing:0.50px;transform:scaleX(1.1175);transform-origin:0 0;-webkit-text-stroke:0.08px #525252;">Station#2 CNT#2 Width</div><div class="t" style="left:847.30px;top:240.38px;font-size:12.5px;line-height:12.5px;font-weight:400;font-style:normal;color:#575757;letter-spacing:0.50px;transform:scaleX(1.0937);transform-origin:0 0;">Quad1:</div><div class="r" style="left:900px;top:237px;width:86px;height:17px;background:#fcfcfc;border:1px solid #767676;"></div><div class="t" style="left:905.00px;top:239.95px;font-size:13px;line-height:13px;font-weight:400;font-style:normal;color:#000;letter-spacing:0.00px;">X4</div><svg class="r" style="left:972.5px;top:242.5px" width="10" height="7" viewBox="0 0 10 7"><path d="M1.2 1.2 L5 5 L8.8 1.2" fill="none" stroke="#000" stroke-width="2"/></svg><div class="t" style="left:992.50px;top:240.38px;font-size:12.5px;line-height:12.5px;font-weight:400;font-style:normal;color:#575757;letter-spacing:0.50px;transform:scaleX(1.0937);transform-origin:0 0;">Quad2:</div><div class="r" style="left:1046px;top:237px;width:86px;height:17px;background:#fcfcfc;border:1px solid #767676;"></div><div class="t" style="left:1051.00px;top:239.95px;font-size:13px;line-height:13px;font-weight:400;font-style:normal;color:#000;letter-spacing:0.00px;">X4</div><svg class="r" style="left:1118.5px;top:242.5px" width="10" height="7" viewBox="0 0 10 7"><path d="M1.2 1.2 L5 5 L8.8 1.2" fill="none" stroke="#000" stroke-width="2"/></svg><div class="r" style="left:265px;top:259px;width:895px;height:23px;background:#fffee0;border-left:1px solid #c4c4c4;"></div><div class="r" style="left:266px;top:282px;width:894px;height:1px;background:#b2b2b2;"></div><div class="r" style="left:844px;top:259px;width:1px;height:23px;background:#b8b8b8;"></div><div class="t" style="left:267.80px;top:265.98px;font-size:12.5px;line-height:12.5px;font-weight:400;font-style:normal;color:#525252;letter-spacing:0.50px;transform:scaleX(1.1175);transform-origin:0 0;-webkit-text-stroke:0.08px #525252;">Station#1 CNT#3 Width</div><div class="t" style="left:847.30px;top:264.38px;font-size:12.5px;line-height:12.5px;font-weight:400;font-style:normal;color:#575757;letter-spacing:0.50px;transform:scaleX(1.0937);transform-origin:0 0;">Quad1:</div><div class="r" style="left:900px;top:261px;width:86px;height:17px;background:#fcfcfc;border:1px solid #767676;"></div><div class="t" style="left:905.00px;top:263.95px;font-size:13px;line-height:13px;font-weight:400;font-style:normal;color:#000;letter-spacing:0.00px;">X4</div><svg class="r" style="left:972.5px;top:266.5px" width="10" height="7" viewBox="0 0 10 7"><path d="M1.2 1.2 L5 5 L8.8 1.2" fill="none" stroke="#000" stroke-width="2"/></svg><div class="t" style="left:992.50px;top:264.38px;font-size:12.5px;line-height:12.5px;font-weight:400;font-style:normal;color:#575757;letter-spacing:0.50px;transform:scaleX(1.0937);transform-origin:0 0;">Quad2:</div><div class="r" style="left:1046px;top:261px;width:86px;height:17px;background:#fcfcfc;border:1px solid #767676;"></div><div class="t" style="left:1051.00px;top:263.95px;font-size:13px;line-height:13px;font-weight:400;font-style:normal;color:#000;letter-spacing:0.00px;">X4</div><svg class="r" style="left:1118.5px;top:266.5px" width="10" height="7" viewBox="0 0 10 7"><path d="M1.2 1.2 L5 5 L8.8 1.2" fill="none" stroke="#000" stroke-width="2"/></svg><div class="r" style="left:265px;top:283px;width:895px;height:23px;background:#fffee0;border-left:1px solid #c4c4c4;"></div><div class="r" style="left:266px;top:306px;width:894px;height:1px;background:#b2b2b2;"></div><div class="r" style="left:844px;top:283px;width:1px;height:23px;background:#b8b8b8;"></div><div class="t" style="left:267.80px;top:289.98px;font-size:12.5px;line-height:12.5px;font-weight:400;font-style:normal;color:#525252;letter-spacing:0.50px;transform:scaleX(1.1175);transform-origin:0 0;-webkit-text-stroke:0.08px #525252;">Station#1 CNT#4 Width</div><div class="t" style="left:847.30px;top:288.38px;font-size:12.5px;line-height:12.5px;font-weight:400;font-style:normal;color:#575757;letter-spacing:0.50px;transform:scaleX(1.0937);transform-origin:0 0;">Quad1:</div><div class="r" style="left:900px;top:285px;width:86px;height:17px;background:#fcfcfc;border:1px solid #767676;"></div><div class="t" style="left:905.00px;top:287.95px;font-size:13px;line-height:13px;font-weight:400;font-style:normal;color:#000;letter-spacing:0.00px;">X4</div><svg class="r" style="left:972.5px;top:290.5px" width="10" height="7" viewBox="0 0 10 7"><path d="M1.2 1.2 L5 5 L8.8 1.2" fill="none" stroke="#000" stroke-width="2"/></svg><div class="t" style="left:992.50px;top:288.38px;font-size:12.5px;line-height:12.5px;font-weight:400;font-style:normal;color:#575757;letter-spacing:0.50px;transform:scaleX(1.0937);transform-origin:0 0;">Quad2:</div><div class="r" style="left:1046px;top:285px;width:86px;height:17px;background:#fcfcfc;border:1px solid #767676;"></div><div class="t" style="left:1051.00px;top:287.95px;font-size:13px;line-height:13px;font-weight:400;font-style:normal;color:#000;letter-spacing:0.00px;">X4</div><svg class="r" style="left:1118.5px;top:290.5px" width="10" height="7" viewBox="0 0 10 7"><path d="M1.2 1.2 L5 5 L8.8 1.2" fill="none" stroke="#000" stroke-width="2"/></svg><div class="r" style="left:265px;top:307px;width:895px;height:23px;background:#fffee0;border-left:1px solid #c4c4c4;"></div><div class="r" style="left:266px;top:330px;width:894px;height:1px;background:#b2b2b2;"></div><div class="r" style="left:844px;top:307px;width:1px;height:23px;background:#b8b8b8;"></div><div class="t" style="left:267.80px;top:313.98px;font-size:12.5px;line-height:12.5px;font-weight:400;font-style:normal;color:#525252;letter-spacing:0.50px;transform:scaleX(1.1051);transform-origin:0 0;-webkit-text-stroke:0.08px #525252;">Station#2 CNT#1 Speed</div><div class="t" style="left:847.30px;top:312.38px;font-size:12.5px;line-height:12.5px;font-weight:400;font-style:normal;color:#575757;letter-spacing:0.50px;transform:scaleX(1.0937);transform-origin:0 0;">Quad1:</div><div class="r" style="left:900px;top:309px;width:53px;height:17px;background:#fcfcfc;border:1px solid #767676;"></div><div class="t" style="left:905.00px;top:311.95px;font-size:13px;line-height:13px;font-weight:400;font-style:normal;color:#000;letter-spacing:0.00px;">Auto</div><svg class="r" style="left:939.5px;top:314.5px" width="10" height="7" viewBox="0 0 10 7"><path d="M1.2 1.2 L5 5 L8.8 1.2" fill="none" stroke="#000" stroke-width="2"/></svg><div class="t" style="left:959.50px;top:312.38px;font-size:12.5px;line-height:12.5px;font-weight:400;font-style:normal;color:#575757;letter-spacing:0.50px;transform:scaleX(1.0937);transform-origin:0 0;">Quad2:</div><div class="r" style="left:1013px;top:309px;width:53px;height:17px;background:#fcfcfc;border:1px solid #767676;"></div><div class="t" style="left:1018.00px;top:311.95px;font-size:13px;line-height:13px;font-weight:400;font-style:normal;color:#000;letter-spacing:0.00px;">Auto</div><svg class="r" style="left:1052.5px;top:314.5px" width="10" height="7" viewBox="0 0 10 7"><path d="M1.2 1.2 L5 5 L8.8 1.2" fill="none" stroke="#000" stroke-width="2"/></svg><div class="r" style="left:265px;top:331px;width:895px;height:23px;background:#fffee0;border-left:1px solid #c4c4c4;"></div><div class="r" style="left:266px;top:354px;width:894px;height:1px;background:#b2b2b2;"></div><div class="r" style="left:844px;top:331px;width:1px;height:23px;background:#b8b8b8;"></div><div class="t" style="left:267.80px;top:337.98px;font-size:12.5px;line-height:12.5px;font-weight:400;font-style:normal;color:#525252;letter-spacing:0.50px;transform:scaleX(1.1051);transform-origin:0 0;-webkit-text-stroke:0.08px #525252;">Station#2 CNT#2 Speed</div><div class="t" style="left:847.30px;top:336.38px;font-size:12.5px;line-height:12.5px;font-weight:400;font-style:normal;color:#575757;letter-spacing:0.50px;transform:scaleX(1.0937);transform-origin:0 0;">Quad1:</div><div class="r" style="left:900px;top:333px;width:53px;height:17px;background:#fcfcfc;border:1px solid #767676;"></div><div class="t" style="left:905.00px;top:335.95px;font-size:13px;line-height:13px;font-weight:400;font-style:normal;color:#000;letter-spacing:0.00px;">Auto</div><svg class="r" style="left:939.5px;top:338.5px" width="10" height="7" viewBox="0 0 10 7"><path d="M1.2 1.2 L5 5 L8.8 1.2" fill="none" stroke="#000" stroke-width="2"/></svg><div class="t" style="left:959.50px;top:336.38px;font-size:12.5px;line-height:12.5px;font-weight:400;font-style:normal;color:#575757;letter-spacing:0.50px;transform:scaleX(1.0937);transform-origin:0 0;">Quad2:</div><div class="r" style="left:1013px;top:333px;width:53px;height:17px;background:#fcfcfc;border:1px solid #767676;"></div><div class="t" style="left:1018.00px;top:335.95px;font-size:13px;line-height:13px;font-weight:400;font-style:normal;color:#000;letter-spacing:0.00px;">Auto</div><svg class="r" style="left:1052.5px;top:338.5px" width="10" height="7" viewBox="0 0 10 7"><path d="M1.2 1.2 L5 5 L8.8 1.2" fill="none" stroke="#000" stroke-width="2"/></svg><div class="r" style="left:265px;top:355px;width:895px;height:23px;background:#fffee0;border-left:1px solid #c4c4c4;"></div><div class="r" style="left:266px;top:378px;width:894px;height:1px;background:#b2b2b2;"></div><div class="r" style="left:844px;top:355px;width:1px;height:23px;background:#b8b8b8;"></div><div class="t" style="left:267.80px;top:361.98px;font-size:12.5px;line-height:12.5px;font-weight:400;font-style:normal;color:#525252;letter-spacing:0.50px;transform:scaleX(1.1051);transform-origin:0 0;-webkit-text-stroke:0.08px #525252;">Station#1 CNT#3 Speed</div><div class="t" style="left:847.30px;top:360.38px;font-size:12.5px;line-height:12.5px;font-weight:400;font-style:normal;color:#575757;letter-spacing:0.50px;transform:scaleX(1.0937);transform-origin:0 0;">Quad1:</div><div class="r" style="left:900px;top:357px;width:53px;height:17px;background:#fcfcfc;border:1px solid #767676;"></div><div class="t" style="left:905.00px;top:359.95px;font-size:13px;line-height:13px;font-weight:400;font-style:normal;color:#000;letter-spacing:0.00px;">Auto</div><svg class="r" style="left:939.5px;top:362.5px" width="10" height="7" viewBox="0 0 10 7"><path d="M1.2 1.2 L5 5 L8.8 1.2" fill="none" stroke="#000" stroke-width="2"/></svg><div class="t" style="left:959.50px;top:360.38px;font-size:12.5px;line-height:12.5px;font-weight:400;font-style:normal;color:#575757;letter-spacing:0.50px;transform:scaleX(1.0937);transform-origin:0 0;">Quad2:</div><div class="r" style="left:1013px;top:357px;width:53px;height:17px;background:#fcfcfc;border:1px solid #767676;"></div><div class="t" style="left:1018.00px;top:359.95px;font-size:13px;line-height:13px;font-weight:400;font-style:normal;color:#000;letter-spacing:0.00px;">Auto</div><svg class="r" style="left:1052.5px;top:362.5px" width="10" height="7" viewBox="0 0 10 7"><path d="M1.2 1.2 L5 5 L8.8 1.2" fill="none" stroke="#000" stroke-width="2"/></svg><div class="r" style="left:265px;top:379px;width:895px;height:23px;background:#fffee0;border-left:1px solid #c4c4c4;"></div><div class="r" style="left:266px;top:402px;width:894px;height:1px;background:#b2b2b2;"></div><div class="r" style="left:844px;top:379px;width:1px;height:23px;background:#b8b8b8;"></div><div class="t" style="left:267.80px;top:385.98px;font-size:12.5px;line-height:12.5px;font-weight:400;font-style:normal;color:#525252;letter-spacing:0.50px;transform:scaleX(1.1051);transform-origin:0 0;-webkit-text-stroke:0.08px #525252;">Station#1 CNT#4 Speed</div><div class="t" style="left:847.30px;top:384.38px;font-size:12.5px;line-height:12.5px;font-weight:400;font-style:normal;color:#575757;letter-spacing:0.50px;transform:scaleX(1.0937);transform-origin:0 0;">Quad1:</div><div class="r" style="left:900px;top:381px;width:53px;height:17px;background:#fcfcfc;border:1px solid #767676;"></div><div class="t" style="left:905.00px;top:383.95px;font-size:13px;line-height:13px;font-weight:400;font-style:normal;color:#000;letter-spacing:0.00px;">Auto</div><svg class="r" style="left:939.5px;top:386.5px" width="10" height="7" viewBox="0 0 10 7"><path d="M1.2 1.2 L5 5 L8.8 1.2" fill="none" stroke="#000" stroke-width="2"/></svg><div class="t" style="left:959.50px;top:384.38px;font-size:12.5px;line-height:12.5px;font-weight:400;font-style:normal;color:#575757;letter-spacing:0.50px;transform:scaleX(1.0937);transform-origin:0 0;">Quad2:</div><div class="r" style="left:1013px;top:381px;width:53px;height:17px;background:#fcfcfc;border:1px solid #767676;"></div><div class="t" style="left:1018.00px;top:383.95px;font-size:13px;line-height:13px;font-weight:400;font-style:normal;color:#000;letter-spacing:0.00px;">Auto</div><svg class="r" style="left:1052.5px;top:386.5px" width="10" height="7" viewBox="0 0 10 7"><path d="M1.2 1.2 L5 5 L8.8 1.2" fill="none" stroke="#000" stroke-width="2"/></svg><div class="r" style="left:266px;top:403px;width:894px;height:1px;background:#ffffff;"></div><div class="r" style="left:266px;top:404px;width:894px;height:16px;background:#dcdcdc;border-left:1px solid #fff;"></div><div class="r" style="left:266px;top:420px;width:894px;height:1px;background:#8c8c8c;"></div><div class="r" style="left:266px;top:421px;width:894px;height:1px;background:#ffffff;"></div><div class="r" style="left:266px;top:422px;width:894px;height:19px;background:#e0fde0;border-left:1px solid #fff;"></div><div class="r" style="left:266px;top:441px;width:894px;height:1px;background:#9a9a9a;"></div><div class="r" style="left:270px;top:425px;width:11px;height:11px;background:#fff;border:1px solid #7a7a7a;border-radius:2px;"></div><div class="t" style="left:291.00px;top:426.95px;font-size:13px;line-height:13px;font-weight:700;font-style:normal;color:#ff0000;letter-spacing:0.50px;transform:scaleX(1.0939);transform-origin:0 0;">Confirm The Operation</div><div class="r" style="left:266px;top:442px;width:894px;height:1px;background:#ffffff;"></div><div class="r" style="left:266px;top:443px;width:894px;height:21px;background:#e0fde0;border-left:1px solid #fff;"></div><div class="r" style="left:266px;top:464px;width:894px;height:1px;background:#9a9a9a;"></div><div class="r" style="left:266px;top:443px;width:54px;height:17px;background:#fafafa;border:2px solid #111;border-top-color:#333;border-left-color:#333;"></div><div class="t" style="left:274.50px;top:446.45px;font-size:13px;line-height:13px;font-weight:400;font-style:normal;color:#000;letter-spacing:0.00px;">Submit</div><div class="r" style="left:328px;top:443px;width:47px;height:17px;background:#fafafa;border:2px solid #111;border-top-color:#333;border-left-color:#333;"></div><div class="t" style="left:336.50px;top:446.45px;font-size:13px;line-height:13px;font-weight:400;font-style:normal;color:#000;letter-spacing:0.00px;">Reset</div><div class="r" style="left:266px;top:465px;width:894px;height:1px;background:#ffffff;"></div><div class="r" style="left:266px;top:466px;width:894px;height:16px;background:#dcdcdc;border-left:1px solid #fff;"></div><div class="r" style="left:266px;top:482px;width:894px;height:1px;background:#8c8c8c;"></div><div class="r" style="left:264px;top:484px;width:896px;height:1px;background:#9a9a9a;"></div><div class="r" style="left:1046px;top:231px;width:88px;height:123px;background:#ffffff;box-sizing:border-box;border:1px solid #8a8a8a;border-top:2px solid #777;"></div><div class="r" style="left:1047px;top:233px;width:86px;height:24px;background:#1b64d1;"></div><div class="t" style="left:1051.00px;top:238.95px;font-size:13px;line-height:13px;font-weight:400;font-style:normal;color:#fff;letter-spacing:0.00px;">X4</div><div class="t" style="left:1051.00px;top:262.95px;font-size:13px;line-height:13px;font-weight:400;font-style:normal;color:#000;letter-spacing:0.00px;">X8</div><div class="t" style="left:1051.00px;top:286.95px;font-size:13px;line-height:13px;font-weight:400;font-style:normal;color:#000;letter-spacing:0.00px;">X16</div><div class="t" style="left:1051.00px;top:310.95px;font-size:13px;line-height:13px;font-weight:400;font-style:normal;color:#000;letter-spacing:0.00px;">X2X2</div><div class="t" style="left:1051.00px;top:334.95px;font-size:13px;line-height:13px;font-weight:400;font-style:normal;color:#000;letter-spacing:0.00px;">X1X1X1X1</div></div></div><div class="r" style="left:1178px;top:62px;width:7px;height:22px;background:#a9d3fb;"></div><div class="r" style="left:1178px;top:66px;width:7px;height:1px;background:#2a5fc2;"></div><div class="r" style="left:1178px;top:70px;width:7px;height:1px;background:#2a5fc2;"></div><div class="r" style="left:1178px;top:74px;width:7px;height:1px;background:#2a5fc2;"></div><div class="r" style="left:1178px;top:78px;width:7px;height:1px;background:#2a5fc2;"></div><div class="r" style="left:212px;top:512px;width:950px;height:508px;background:#56697f;box-sizing:border-box;border:1px solid #3d7fd6;box-shadow:inset 0 0 0 1px #000;"></div><div class="r" style="left:215px;top:516px;width:944px;height:46px;background:#fff;box-sizing:border-box;border:2px solid #000;"></div><div class="r" style="left:215px;top:564px;width:245px;height:44px;background:#fff;box-sizing:border-box;border:2px solid #000;"></div><div class="r" style="left:461px;top:564px;width:185px;height:44px;background:#fff;box-sizing:border-box;border:2px solid #000;"></div><div class="r" style="left:648px;top:564px;width:185px;height:44px;background:#fff;box-sizing:border-box;border:2px solid #000;"></div><div class="r" style="left:835px;top:564px;width:324px;height:44px;background:#fff;box-sizing:border-box;border:2px solid #000;"></div><div class="r" style="left:215px;top:610px;width:245px;height:200px;background:#fff;box-sizing:border-box;border:2px solid #000;"></div><div class="r" style="left:215px;top:812px;width:245px;height:204px;background:#fff;box-sizing:border-box;border:2px solid #000;"></div><div class="r" style="left:461px;top:610px;width:185px;height:97px;background:#fff;box-sizing:border-box;border:2px solid #000;"></div><div class="r" style="left:461px;top:709px;width:185px;height:101px;background:#fff;box-sizing:border-box;border:2px solid #000;"></div><div class="r" style="left:461px;top:812px;width:185px;height:98px;background:#fff;box-sizing:border-box;border:2px solid #000;"></div><div class="r" style="left:461px;top:912px;width:185px;height:104px;background:#fff;box-sizing:border-box;border:2px solid #000;"></div><div class="r" style="left:648px;top:610px;width:185px;height:47px;background:#fff;box-sizing:border-box;border:2px solid #000;"></div><div class="r" style="left:835px;top:610px;width:324px;height:47px;background:#fff;box-sizing:border-box;border:2px solid #000;"></div><div class="r" style="left:648px;top:659px;width:185px;height:48px;background:#fff;box-sizing:border-box;border:2px solid #000;"></div><div class="r" style="left:835px;top:659px;width:324px;height:48px;background:#fff;box-sizing:border-box;border:2px solid #000;"></div><div class="r" style="left:648px;top:709px;width:185px;height:51px;background:#fff;box-sizing:border-box;border:2px solid #000;"></div><div class="r" style="left:835px;top:709px;width:324px;height:51px;background:#fff;box-sizing:border-box;border:2px solid #000;"></div><div class="r" style="left:648px;top:762px;width:185px;height:48px;background:#fff;box-sizing:border-box;border:2px solid #000;"></div><div class="r" style="left:835px;top:762px;width:324px;height:48px;background:#fff;box-sizing:border-box;border:2px solid #000;"></div><div class="r" style="left:648px;top:812px;width:185px;height:48px;background:#fff;box-sizing:border-box;border:2px solid #000;"></div><div class="r" style="left:835px;top:812px;width:324px;height:48px;background:#fff;box-sizing:border-box;border:2px solid #000;"></div><div class="r" style="left:648px;top:862px;width:185px;height:48px;background:#fff;box-sizing:border-box;border:2px solid #000;"></div><div class="r" style="left:835px;top:862px;width:324px;height:48px;background:#fff;box-sizing:border-box;border:2px solid #000;"></div><div class="r" style="left:648px;top:912px;width:185px;height:48px;background:#fff;box-sizing:border-box;border:2px solid #000;"></div><div class="r" style="left:835px;top:912px;width:324px;height:48px;background:#fff;box-sizing:border-box;border:2px solid #000;"></div><div class="r" style="left:648px;top:962px;width:185px;height:54px;background:#fff;box-sizing:border-box;border:2px solid #000;"></div><div class="r" style="left:835px;top:962px;width:324px;height:54px;background:#fff;box-sizing:border-box;border:2px solid #000;"></div><div class="t" style="left:384.50px;top:520.22px;font-size:19.5px;line-height:19.5px;font-weight:700;font-style:normal;color:#000;letter-spacing:0.60px;transform:scaleX(1.0808);transform-origin:0 0;-webkit-text-stroke:0.25px #000;">Physical Connector-to-Logical Connector Width Mapping</div><div class="t" style="left:227.60px;top:568.22px;font-size:19.5px;line-height:19.5px;font-weight:700;font-style:normal;color:#000;letter-spacing:0.60px;transform:scaleX(1.1055);transform-origin:0 0;-webkit-text-stroke:0.25px #000;">Downstream Station</div><div class="t" style="left:478.65px;top:568.22px;font-size:19.5px;line-height:19.5px;font-weight:700;font-style:normal;color:#000;letter-spacing:0.60px;transform:scaleX(1.0915);transform-origin:0 0;-webkit-text-stroke:0.25px #000;">Adapter Label</div><div class="t" style="left:669.25px;top:568.22px;font-size:19.5px;line-height:19.5px;font-weight:700;font-style:normal;color:#000;letter-spacing:0.60px;transform:scaleX(1.0811);transform-origin:0 0;-webkit-text-stroke:0.25px #000;">Tool Mapping</div><div class="t" style="left:965.20px;top:568.22px;font-size:19.5px;line-height:19.5px;font-weight:700;font-style:normal;color:#000;letter-spacing:0.60px;transform:scaleX(1.1198);transform-origin:0 0;-webkit-text-stroke:0.25px #000;">Width</div><div class="t" style="left:706.10px;top:615.42px;font-size:19.5px;line-height:19.5px;font-weight:700;font-style:normal;color:#000;letter-spacing:0.60px;transform:scaleX(1.0791);transform-origin:0 0;-webkit-text-stroke:0.25px #000;">Quad1</div><div class="t" style="left:844.10px;top:615.42px;font-size:19.5px;line-height:19.5px;font-weight:700;font-style:normal;color:#000;letter-spacing:0.60px;transform:scaleX(1.1530);transform-origin:0 0;-webkit-text-stroke:0.25px #000;">x1x1x1x1, x2x2, x4, x8, x16</div><div class="t" style="left:477.55px;top:615.42px;font-size:19.5px;line-height:19.5px;font-weight:700;font-style:normal;color:#000;letter-spacing:0.60px;transform:scaleX(1.1436);transform-origin:0 0;-webkit-text-stroke:0.25px #000;">SCN1(CNT#1)</div><div class="t" style="left:706.10px;top:663.52px;font-size:19.5px;line-height:19.5px;font-weight:700;font-style:normal;color:#000;letter-spacing:0.60px;transform:scaleX(1.0791);transform-origin:0 0;-webkit-text-stroke:0.25px #000;">Quad2</div><div class="t" style="left:844.10px;top:663.52px;font-size:19.5px;line-height:19.5px;font-weight:700;font-style:normal;color:#000;letter-spacing:0.60px;transform:scaleX(1.1530);transform-origin:0 0;-webkit-text-stroke:0.25px #000;">x1x1x1x1, x2x2, x4, x8, x16</div><div class="t" style="left:706.10px;top:714.32px;font-size:19.5px;line-height:19.5px;font-weight:700;font-style:normal;color:#000;letter-spacing:0.60px;transform:scaleX(1.0791);transform-origin:0 0;-webkit-text-stroke:0.25px #000;">Quad1</div><div class="t" style="left:844.10px;top:714.32px;font-size:19.5px;line-height:19.5px;font-weight:700;font-style:normal;color:#000;letter-spacing:0.60px;transform:scaleX(1.1530);transform-origin:0 0;-webkit-text-stroke:0.25px #000;">x1x1x1x1, x2x2, x4, x8, x16</div><div class="t" style="left:477.55px;top:714.32px;font-size:19.5px;line-height:19.5px;font-weight:700;font-style:normal;color:#000;letter-spacing:0.60px;transform:scaleX(1.1436);transform-origin:0 0;-webkit-text-stroke:0.25px #000;">SCN2(CNT#2)</div><div class="t" style="left:706.10px;top:767.02px;font-size:19.5px;line-height:19.5px;font-weight:700;font-style:normal;color:#000;letter-spacing:0.60px;transform:scaleX(1.0791);transform-origin:0 0;-webkit-text-stroke:0.25px #000;">Quad2</div><div class="t" style="left:844.10px;top:767.02px;font-size:19.5px;line-height:19.5px;font-weight:700;font-style:normal;color:#000;letter-spacing:0.60px;transform:scaleX(1.1530);transform-origin:0 0;-webkit-text-stroke:0.25px #000;">x1x1x1x1, x2x2, x4, x8, x16</div><div class="t" style="left:706.10px;top:817.02px;font-size:19.5px;line-height:19.5px;font-weight:700;font-style:normal;color:#000;letter-spacing:0.60px;transform:scaleX(1.0791);transform-origin:0 0;-webkit-text-stroke:0.25px #000;">Quad1</div><div class="t" style="left:844.10px;top:817.02px;font-size:19.5px;line-height:19.5px;font-weight:700;font-style:normal;color:#000;letter-spacing:0.60px;transform:scaleX(1.1530);transform-origin:0 0;-webkit-text-stroke:0.25px #000;">x1x1x1x1, x2x2, x4, x8, x16</div><div class="t" style="left:477.55px;top:817.02px;font-size:19.5px;line-height:19.5px;font-weight:700;font-style:normal;color:#000;letter-spacing:0.60px;transform:scaleX(1.1436);transform-origin:0 0;-webkit-text-stroke:0.25px #000;">SCN3(CNT#3)</div><div class="t" style="left:706.10px;top:866.22px;font-size:19.5px;line-height:19.5px;font-weight:700;font-style:normal;color:#000;letter-spacing:0.60px;transform:scaleX(1.0791);transform-origin:0 0;-webkit-text-stroke:0.25px #000;">Quad2</div><div class="t" style="left:844.10px;top:866.22px;font-size:19.5px;line-height:19.5px;font-weight:700;font-style:normal;color:#000;letter-spacing:0.60px;transform:scaleX(1.1530);transform-origin:0 0;-webkit-text-stroke:0.25px #000;">x1x1x1x1, x2x2, x4, x8, x16</div><div class="t" style="left:706.10px;top:917.12px;font-size:19.5px;line-height:19.5px;font-weight:700;font-style:normal;color:#000;letter-spacing:0.60px;transform:scaleX(1.0791);transform-origin:0 0;-webkit-text-stroke:0.25px #000;">Quad1</div><div class="t" style="left:844.10px;top:917.12px;font-size:19.5px;line-height:19.5px;font-weight:700;font-style:normal;color:#000;letter-spacing:0.60px;transform:scaleX(1.1530);transform-origin:0 0;-webkit-text-stroke:0.25px #000;">x1x1x1x1, x2x2, x4, x8, x16</div><div class="t" style="left:477.55px;top:917.12px;font-size:19.5px;line-height:19.5px;font-weight:700;font-style:normal;color:#000;letter-spacing:0.60px;transform:scaleX(1.1436);transform-origin:0 0;-webkit-text-stroke:0.25px #000;">SCN4(CNT#4)</div><div class="t" style="left:706.10px;top:967.72px;font-size:19.5px;line-height:19.5px;font-weight:700;font-style:normal;color:#000;letter-spacing:0.60px;transform:scaleX(1.0791);transform-origin:0 0;-webkit-text-stroke:0.25px #000;">Quad2</div><div class="t" style="left:844.10px;top:967.72px;font-size:19.5px;line-height:19.5px;font-weight:700;font-style:normal;color:#000;letter-spacing:0.60px;transform:scaleX(1.1530);transform-origin:0 0;-webkit-text-stroke:0.25px #000;">x1x1x1x1, x2x2, x4, x8, x16</div><div class="t" style="left:322.65px;top:615.42px;font-size:19.5px;line-height:19.5px;font-weight:700;font-style:normal;color:#000;letter-spacing:0.60px;transform:scaleX(1.3378);transform-origin:0 0;-webkit-text-stroke:0.25px #000;">#2</div><div class="t" style="left:245.90px;top:638.02px;font-size:19.5px;line-height:19.5px;font-weight:700;font-style:normal;color:#000;letter-spacing:0.60px;transform:scaleX(1.1095);transform-origin:0 0;-webkit-text-stroke:0.25px #000;">(The PCIe switch</div><div class="t" style="left:222.65px;top:660.62px;font-size:19.5px;line-height:19.5px;font-weight:700;font-style:normal;color:#000;letter-spacing:0.60px;transform:scaleX(1.1004);transform-origin:0 0;-webkit-text-stroke:0.25px #000;">groups 16 PCIe lanes</div><div class="t" style="left:257.90px;top:683.22px;font-size:19.5px;line-height:19.5px;font-weight:700;font-style:normal;color:#000;letter-spacing:0.60px;transform:scaleX(1.1186);transform-origin:0 0;-webkit-text-stroke:0.25px #000;">into a station.)</div><div class="t" style="left:322.65px;top:817.02px;font-size:19.5px;line-height:19.5px;font-weight:700;font-style:normal;color:#000;letter-spacing:0.60px;transform:scaleX(1.3378);transform-origin:0 0;-webkit-text-stroke:0.25px #000;">#1</div><div class="t" style="left:245.90px;top:839.62px;font-size:19.5px;line-height:19.5px;font-weight:700;font-style:normal;color:#000;letter-spacing:0.60px;transform:scaleX(1.1095);transform-origin:0 0;-webkit-text-stroke:0.25px #000;">(The PCIe switch</div><div class="t" style="left:222.65px;top:862.22px;font-size:19.5px;line-height:19.5px;font-weight:700;font-style:normal;color:#000;letter-spacing:0.60px;transform:scaleX(1.1004);transform-origin:0 0;-webkit-text-stroke:0.25px #000;">groups 16 PCIe lanes</div><div class="t" style="left:257.90px;top:884.82px;font-size:19.5px;line-height:19.5px;font-weight:700;font-style:normal;color:#000;letter-spacing:0.60px;transform:scaleX(1.1186);transform-origin:0 0;-webkit-text-stroke:0.25px #000;">into a station.)</div></body></html>
